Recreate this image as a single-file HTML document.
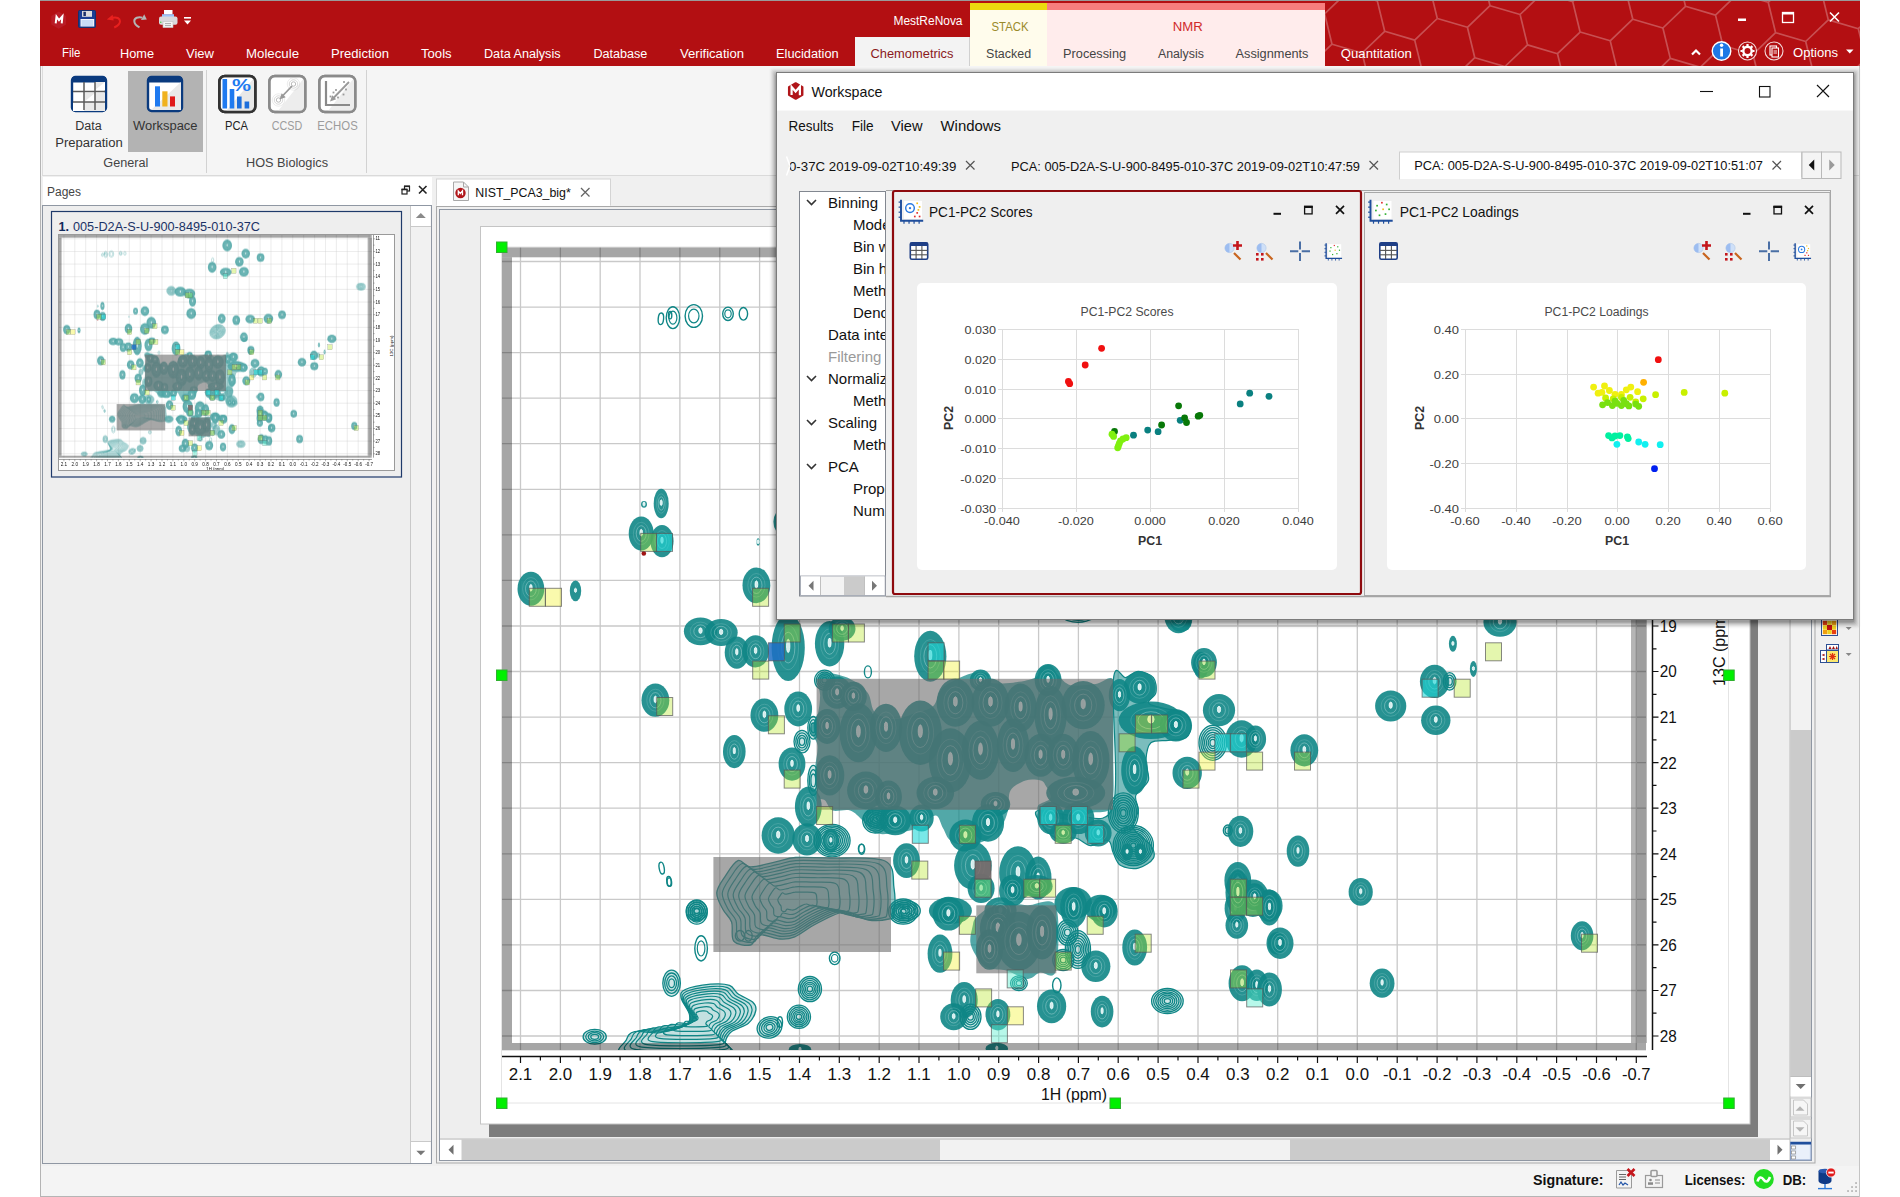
<!DOCTYPE html>
<html lang="en"><head><meta charset="utf-8"><title>MestReNova - Chemometrics Workspace</title>
<style>
html,body{margin:0;padding:0;background:#fff;width:1900px;height:1197px;overflow:hidden}
svg{display:block;font-family:"Liberation Sans","DejaVu Sans",sans-serif}
</style></head><body>
<svg width="1900" height="1197" viewBox="0 0 1900 1197">
<defs><clipPath id="plotclip"><rect x="502" y="247" width="1144" height="803"/></clipPath>
<g id="plotA">
<rect x="502" y="247" width="1144" height="803" fill="#fff" />
<path d="M520.5 247V1050M560.4 247V1050M600.2 247V1050M640.0 247V1050M679.9 247V1050M719.8 247V1050M759.6 247V1050M799.5 247V1050M839.3 247V1050M879.2 247V1050M919.0 247V1050M958.9 247V1050M998.7 247V1050M1038.6 247V1050M1078.4 247V1050M1118.2 247V1050M1158.1 247V1050M1198.0 247V1050M1237.8 247V1050M1277.7 247V1050M1317.5 247V1050M1357.3 247V1050M1397.2 247V1050M1437.1 247V1050M1476.9 247V1050M1516.8 247V1050M1556.6 247V1050M1596.5 247V1050M1636.3 247V1050M502 261.5H1646M502 307.1H1646M502 352.6H1646M502 398.2H1646M502 443.7H1646M502 489.3H1646M502 534.9H1646M502 580.4H1646M502 626.0H1646M502 671.5H1646M502 717.1H1646M502 762.7H1646M502 808.2H1646M502 853.8H1646M502 899.3H1646M502 944.9H1646M502 990.5H1646M502 1036.0H1646" stroke="#c9c9c9" stroke-width="1.3" fill="none"/>
</g><g id="plotB" clip-path="url(#plotclip)">
<path d="M817.5 680.2C818.4 676.4 819.6 672.8 825.1 672.6C830.5 672.4 843.0 675.6 850.1 678.9C857.2 682.2 863.5 687.0 867.7 692.7C871.8 698.3 870.6 708.3 875.2 712.7C879.8 717.1 889.0 718.8 895.2 719.0C901.5 719.2 906.5 716.1 912.8 714.0C919.0 711.9 928.0 710.6 932.8 706.5C937.6 702.3 937.0 693.7 941.6 688.9C946.2 684.1 954.8 680.4 960.4 677.6C966.0 674.9 970.8 673.3 975.4 672.6C980.0 672.0 985.5 672.2 988.0 673.9C990.5 675.6 986.3 681.2 990.5 682.7C994.7 684.1 1005.5 683.5 1013.0 682.7C1020.6 681.8 1031.0 680.2 1035.6 677.6C1040.2 675.1 1038.1 669.7 1040.6 667.6C1043.1 665.5 1047.7 663.9 1050.6 665.1C1053.6 666.4 1054.8 671.8 1058.1 675.1C1061.5 678.5 1064.4 683.7 1070.7 685.2C1076.9 686.6 1088.6 684.7 1095.7 683.9C1102.8 683.1 1110.4 674.1 1113.3 680.2C1116.2 686.2 1113.3 706.9 1113.3 720.3C1113.3 733.6 1113.3 747.8 1113.3 760.4C1113.3 772.9 1114.1 787.1 1113.3 795.4C1112.4 803.8 1112.0 807.6 1108.3 810.5C1104.5 813.4 1096.2 811.3 1090.7 813.0C1085.3 814.7 1081.5 819.7 1075.7 820.5C1069.8 821.3 1061.5 818.8 1055.6 818.0C1049.8 817.2 1043.5 817.6 1040.6 815.5C1037.7 813.4 1036.4 808.4 1038.1 805.5C1039.8 802.5 1049.4 801.3 1050.6 797.9C1051.9 794.6 1047.3 788.3 1045.6 785.4C1043.9 782.5 1043.9 781.2 1040.6 780.4C1037.3 779.6 1030.6 778.7 1025.6 780.4C1020.6 782.1 1013.5 785.4 1010.5 790.4C1007.6 795.4 1009.7 804.2 1008.0 810.5C1006.3 816.7 1004.3 823.0 1000.5 828.0C996.7 833.0 991.3 837.6 985.5 840.6C979.6 843.5 971.3 845.6 965.4 845.6C959.6 845.6 954.1 843.5 950.4 840.6C946.6 837.6 945.4 832.2 942.9 828.0C940.4 823.8 939.5 815.5 935.3 815.5C931.2 815.5 924.5 825.1 917.8 828.0C911.1 830.9 902.3 832.2 895.2 833.0C888.1 833.9 880.6 835.1 875.2 833.0C869.8 830.9 866.8 824.3 862.7 820.5C858.5 816.7 855.1 812.1 850.1 810.5C845.1 808.8 836.8 812.1 832.6 810.5C828.4 808.8 827.6 803.0 825.1 800.5C822.6 797.9 819.2 800.5 817.5 795.4C815.9 790.4 815.0 778.7 815.0 770.4C815.0 762.0 818.4 752.0 817.5 745.3C816.7 738.6 810.0 735.3 810.0 730.3C810.0 725.3 815.9 721.1 817.5 715.2C819.2 709.4 820.1 701.0 820.1 695.2C820.1 689.3 816.7 683.9 817.5 680.2z" fill="#0F8686" fill-opacity="0.72"/>
<path d="M1113.3 680.2C1115.4 658.8 1121.6 679.1 1125.8 677.6C1130.0 676.2 1133.8 671.4 1138.3 671.4C1142.9 671.4 1150.5 674.1 1153.4 677.6C1156.3 681.2 1156.7 688.5 1155.9 692.7C1155.1 696.9 1147.5 700.2 1148.4 702.7C1149.2 705.2 1155.1 706.0 1160.9 707.7C1166.8 709.4 1178.4 709.8 1183.5 712.7C1188.5 715.7 1190.6 721.1 1191.0 725.3C1191.4 729.4 1189.7 735.3 1186.0 737.8C1182.2 740.3 1174.3 739.5 1168.4 740.3C1162.6 741.1 1154.6 739.5 1150.9 742.8C1147.1 746.1 1146.3 754.1 1145.9 760.4C1145.4 766.6 1150.0 774.6 1148.4 780.4C1146.7 786.2 1137.5 790.4 1135.8 795.4C1134.2 800.5 1138.8 805.0 1138.3 810.5C1137.9 815.9 1131.2 822.2 1133.3 828.0C1135.4 833.9 1147.5 840.6 1150.9 845.6C1154.2 850.6 1155.5 854.3 1153.4 858.1C1151.3 861.9 1143.8 866.9 1138.3 868.1C1132.9 869.4 1125.0 868.1 1120.8 865.6C1116.6 863.1 1115.4 857.3 1113.3 853.1C1111.2 848.9 1112.0 841.8 1108.3 840.6C1104.5 839.3 1096.2 846.0 1090.7 845.6C1085.3 845.1 1081.5 839.3 1075.7 838.0C1069.8 836.8 1061.5 840.6 1055.6 838.0C1049.8 835.5 1043.5 827.6 1040.6 823.0C1037.7 818.4 1032.2 811.7 1038.1 810.5C1043.9 809.2 1063.2 816.3 1075.7 815.5C1088.2 814.7 1107.0 828.0 1113.3 805.5C1119.5 782.9 1111.2 701.5 1113.3 680.2z" fill="#0F8686" fill-opacity="0.55" stroke="#0F8686" stroke-width="1.2"/>
<path d="M716.8 892.6C717.2 887.0 722.1 880.9 725.6 875.6C729.1 870.3 733.8 862.1 738.0 860.6C742.2 859.1 744.3 866.7 750.6 866.9C756.9 867.1 768.2 863.5 775.7 861.9C783.2 860.3 786.7 858.1 795.7 857.5C804.8 856.9 815.1 857.4 830.0 858.0C844.9 858.6 874.3 856.0 885.0 861.0C895.7 866.0 892.5 879.2 894.0 888.0C895.5 896.8 894.8 908.8 894.0 914.0C893.2 919.2 893.3 918.0 889.0 919.0C884.7 920.0 875.7 921.2 868.4 920.0C861.1 918.8 853.8 910.9 845.0 911.6C836.2 912.3 824.2 919.8 815.8 924.0C807.4 928.2 800.7 934.3 794.7 936.8C788.7 939.3 786.0 939.4 780.0 939.0C774.0 938.6 763.9 933.7 759.0 934.7C754.1 935.7 754.7 944.0 750.5 945.0C746.3 946.0 736.9 944.8 733.7 941.0C730.6 937.2 733.4 927.2 731.6 922.0C729.8 916.8 725.5 914.4 723.0 909.5C720.5 904.6 716.4 898.2 716.8 892.6z" fill="#0F8686" fill-opacity="0.45" stroke="#0F8686" stroke-width="1.3"/>
<path d="M722.3 893.2C722.7 888.0 727.2 882.4 730.5 877.4C733.7 872.5 738.1 864.8 742.0 863.5C745.9 862.1 747.9 869.1 753.7 869.3C759.6 869.5 770.1 866.2 777.1 864.7C784.0 863.2 787.2 861.2 795.7 860.6C804.1 860.0 813.7 860.5 827.6 861.1C841.4 861.6 868.8 859.2 878.7 863.9C888.6 868.5 885.7 880.8 887.1 889.0C888.5 897.2 887.8 908.3 887.1 913.1C886.3 918.0 886.4 916.9 882.4 917.8C878.5 918.7 870.1 919.9 863.3 918.7C856.4 917.6 849.7 910.3 841.5 910.9C833.4 911.5 822.1 918.5 814.3 922.4C806.6 926.4 800.3 932.0 794.7 934.4C789.2 936.7 786.6 936.7 781.1 936.4C775.5 936.1 766.1 931.5 761.5 932.4C757.0 933.3 757.5 941.0 753.6 942.0C749.7 943.0 740.9 941.8 738.0 938.3C735.1 934.7 737.7 925.5 736.0 920.6C734.4 915.7 730.3 913.5 728.0 909.0C725.7 904.4 721.9 898.5 722.3 893.2z" fill="none" stroke="#0F8686" stroke-width="1.2"/>
<path d="M727.8 893.9C728.1 889.0 732.3 883.9 735.3 879.3C738.4 874.7 742.4 867.6 746.0 866.4C749.6 865.1 751.4 871.6 756.8 871.8C762.2 872.0 771.9 868.8 778.4 867.5C784.9 866.1 787.8 864.3 795.6 863.7C803.4 863.1 812.3 863.6 825.1 864.1C837.9 864.6 863.2 862.4 872.4 866.7C881.6 871.0 878.9 882.3 880.1 889.9C881.4 897.5 880.9 907.9 880.1 912.3C879.4 916.7 879.5 915.7 875.8 916.6C872.2 917.5 864.4 918.5 858.1 917.5C851.8 916.4 845.5 909.7 838.0 910.2C830.5 910.8 820.1 917.3 812.9 920.9C805.7 924.5 799.9 929.8 794.7 931.9C789.6 934.1 787.2 934.1 782.1 933.8C777.0 933.5 768.3 929.2 764.0 930.1C759.8 931.0 760.4 938.1 756.7 939.0C753.1 939.9 745.0 938.8 742.3 935.5C739.6 932.2 742.0 923.7 740.5 919.2C738.9 914.7 735.2 912.6 733.1 908.4C731.0 904.2 727.4 898.8 727.8 893.9z" fill="none" stroke="#0F8686" stroke-width="1.2"/>
<path d="M733.2 894.5C733.6 890.1 737.4 885.3 740.2 881.1C743.0 876.9 746.7 870.4 750.0 869.3C753.3 868.1 755.0 874.1 759.9 874.2C764.9 874.4 773.8 871.5 779.8 870.3C785.7 869.1 788.4 867.3 795.6 866.8C802.7 866.3 810.9 866.7 822.7 867.2C834.4 867.7 857.7 865.6 866.1 869.6C874.5 873.5 872.0 883.9 873.2 890.9C874.4 897.9 873.9 907.4 873.2 911.4C872.6 915.5 872.6 914.6 869.3 915.4C865.9 916.2 858.8 917.2 853.0 916.2C847.2 915.2 841.4 909.0 834.5 909.6C827.6 910.1 818.1 916.0 811.4 919.3C804.8 922.7 799.5 927.5 794.8 929.5C790.1 931.4 787.9 931.5 783.2 931.2C778.5 930.9 770.5 927.0 766.6 927.8C762.7 928.6 763.2 935.1 759.9 935.9C756.5 936.8 749.1 935.8 746.6 932.8C744.1 929.7 746.3 921.9 744.9 917.8C743.5 913.6 740.1 911.8 738.1 907.9C736.2 904.0 732.9 899.0 733.2 894.5z" fill="none" stroke="#0F8686" stroke-width="1.2"/>
<path d="M738.7 895.2C739.0 891.1 742.5 886.8 745.0 882.9C747.6 879.1 751.0 873.2 754.0 872.1C757.0 871.1 758.5 876.5 763.0 876.7C767.6 876.8 775.7 874.2 781.1 873.1C786.5 872.0 789.0 870.4 795.5 869.9C802.0 869.4 809.5 869.9 820.2 870.3C830.9 870.7 852.1 868.8 859.8 872.4C867.5 876.0 865.2 885.5 866.3 891.9C867.4 898.2 866.9 906.9 866.3 910.6C865.7 914.3 865.8 913.5 862.7 914.2C859.6 914.9 853.1 915.8 847.9 914.9C842.6 914.0 837.3 908.4 831.0 908.9C824.7 909.3 816.0 914.8 810.0 917.8C804.0 920.8 799.1 925.2 794.8 927.0C790.5 928.8 788.5 928.8 784.2 928.6C779.9 928.3 772.6 924.8 769.1 925.5C765.6 926.2 766.0 932.2 763.0 932.9C759.9 933.7 753.1 932.8 750.9 930.0C748.6 927.3 750.7 920.1 749.4 916.4C748.1 912.6 745.0 910.9 743.2 907.4C741.4 903.8 738.4 899.3 738.7 895.2z" fill="none" stroke="#0F8686" stroke-width="1.2"/>
<path d="M745.0 895.9C745.2 892.3 748.3 888.5 750.6 885.0C752.9 881.6 755.9 876.4 758.5 875.4C761.2 874.5 762.6 879.3 766.6 879.5C770.6 879.6 777.9 877.3 782.7 876.3C787.5 875.3 789.7 873.9 795.5 873.5C801.3 873.0 807.9 873.4 817.4 873.8C826.9 874.2 845.8 872.5 852.6 875.7C859.4 878.9 857.4 887.3 858.4 893.0C859.3 898.6 858.9 906.3 858.4 909.6C857.8 912.9 857.9 912.2 855.2 912.8C852.4 913.5 846.7 914.3 842.0 913.5C837.3 912.7 832.6 907.7 827.0 908.1C821.4 908.5 813.7 913.3 808.3 916.0C803.0 918.7 798.6 922.6 794.8 924.2C791.0 925.8 789.2 925.8 785.4 925.6C781.6 925.4 775.1 922.2 772.0 922.9C768.8 923.5 769.2 928.8 766.5 929.5C763.8 930.1 757.8 929.4 755.8 926.9C753.8 924.5 755.6 918.1 754.4 914.7C753.3 911.4 750.5 909.9 748.9 906.7C747.4 903.6 744.7 899.5 745.0 895.9z" fill="none" stroke="#0F8686" stroke-width="1.2"/>
<path d="M752.0 896.8C752.3 893.7 754.9 890.3 756.9 887.4C758.8 884.5 761.4 880.0 763.7 879.2C766.0 878.4 767.1 882.5 770.6 882.6C774.1 882.7 780.3 880.7 784.4 879.9C788.5 879.0 790.4 877.8 795.4 877.5C800.4 877.1 806.1 877.4 814.3 877.7C822.5 878.1 838.7 876.6 844.5 879.4C850.4 882.1 848.6 889.4 849.5 894.2C850.3 899.1 849.9 905.7 849.5 908.5C849.0 911.4 849.1 910.7 846.7 911.3C844.4 911.8 839.4 912.5 835.4 911.8C831.4 911.2 827.3 906.8 822.5 907.2C817.7 907.6 811.1 911.7 806.5 914.0C801.9 916.3 798.1 919.7 794.9 921.1C791.6 922.4 790.0 922.5 786.8 922.3C783.5 922.1 777.9 919.4 775.2 919.9C772.5 920.5 772.9 925.0 770.5 925.6C768.2 926.2 763.0 925.5 761.3 923.4C759.6 921.3 761.1 915.8 760.2 912.9C759.2 910.0 756.8 908.7 755.4 906.1C754.1 903.4 751.8 899.9 752.0 896.8z" fill="none" stroke="#0F8686" stroke-width="1.2"/>
<path d="M759.8 897.7C760.0 895.1 762.2 892.4 763.8 890.0C765.4 887.6 767.5 883.9 769.4 883.3C771.3 882.6 772.2 886.0 775.0 886.1C777.9 886.2 783.0 884.6 786.3 883.9C789.7 883.2 791.3 882.2 795.3 881.9C799.4 881.6 804.1 881.9 810.8 882.1C817.5 882.4 830.7 881.2 835.5 883.5C840.3 885.7 838.9 891.6 839.6 895.6C840.3 899.6 840.0 905.0 839.6 907.3C839.2 909.6 839.2 909.1 837.3 909.6C835.4 910.0 831.4 910.6 828.1 910.0C824.8 909.5 821.5 905.9 817.5 906.2C813.6 906.5 808.2 909.9 804.4 911.8C800.6 913.7 797.6 916.4 794.9 917.6C792.2 918.7 791.0 918.7 788.3 918.6C785.6 918.4 781.0 916.2 778.8 916.6C776.6 917.1 776.9 920.8 775.0 921.3C773.1 921.7 768.9 921.2 767.4 919.5C766.0 917.7 767.3 913.3 766.5 910.9C765.7 908.6 763.7 907.5 762.6 905.3C761.5 903.1 759.6 900.2 759.8 897.7z" fill="none" stroke="#0F8686" stroke-width="1.2"/>
<path d="M768.4 898.7C768.6 896.8 770.2 894.7 771.4 892.9C772.6 891.1 774.2 888.3 775.7 887.8C777.1 887.3 777.8 889.9 779.9 890.0C782.1 890.0 785.9 888.8 788.5 888.3C791.0 887.7 792.2 887.0 795.3 886.8C798.3 886.5 801.9 886.7 806.9 886.9C812.0 887.1 822.0 886.3 825.6 888.0C829.3 889.7 828.2 894.1 828.7 897.1C829.2 900.1 829.0 904.2 828.7 906.0C828.4 907.7 828.4 907.3 827.0 907.7C825.5 908.0 822.5 908.4 820.0 908.0C817.5 907.6 815.0 904.9 812.0 905.2C809.1 905.4 805.0 907.9 802.1 909.4C799.3 910.8 797.0 912.9 794.9 913.7C792.9 914.6 792.0 914.6 789.9 914.5C787.9 914.4 784.5 912.7 782.8 913.0C781.1 913.4 781.3 916.2 779.9 916.5C778.5 916.9 775.3 916.5 774.2 915.2C773.1 913.9 774.1 910.5 773.5 908.7C772.9 906.9 771.4 906.1 770.6 904.4C769.7 902.8 768.3 900.6 768.4 898.7z" fill="none" stroke="#0F8686" stroke-width="1.2"/>
<path d="M777.8 899.8C777.9 898.6 779.0 897.2 779.8 896.1C780.6 894.9 781.6 893.1 782.5 892.8C783.4 892.5 783.9 894.1 785.3 894.2C786.7 894.2 789.1 893.4 790.8 893.1C792.4 892.7 793.2 892.2 795.2 892.1C797.2 891.9 799.5 892.1 802.7 892.2C806.0 892.3 812.5 891.8 814.8 892.9C817.2 894.0 816.5 896.9 816.8 898.8C817.2 900.7 817.0 903.4 816.8 904.5C816.6 905.7 816.7 905.4 815.7 905.6C814.8 905.8 812.8 906.1 811.2 905.8C809.6 905.6 808.0 903.8 806.0 904.0C804.1 904.1 801.5 905.8 799.6 906.7C797.8 907.6 796.3 909.0 795.0 909.5C793.7 910.1 793.0 910.1 791.7 910.0C790.4 909.9 788.2 908.9 787.1 909.1C786.0 909.3 786.2 911.1 785.3 911.3C784.3 911.6 782.2 911.3 781.6 910.5C780.9 909.6 781.5 907.4 781.1 906.3C780.7 905.1 779.7 904.6 779.2 903.5C778.7 902.4 777.7 901.1 777.8 899.8z" fill="none" stroke="#0F8686" stroke-width="1.2"/>
<path d="M626.3 1040.0C627.7 1036.1 629.1 1032.8 634.7 1031.6C640.4 1030.4 651.6 1033.7 660.0 1032.6C668.4 1031.6 680.4 1028.2 685.3 1025.3C690.2 1022.3 690.2 1019.3 689.5 1014.7C688.8 1010.2 681.8 1002.1 681.1 997.9C680.4 993.7 680.4 991.8 685.3 989.5C690.2 987.2 703.2 984.9 710.5 984.2C717.9 983.5 724.9 983.7 729.5 985.3C734.0 986.8 734.0 990.9 737.9 993.7C741.8 996.5 749.6 999.3 752.6 1002.1C755.6 1004.9 756.5 1007.0 755.8 1010.5C755.1 1014.0 752.5 1019.6 748.4 1023.2C744.4 1026.7 735.4 1028.4 731.6 1031.6C727.7 1034.7 726.1 1038.2 725.3 1042.1C724.4 1046.0 742.8 1052.6 726.3 1054.7C709.8 1056.8 643.0 1057.2 626.3 1054.7C609.6 1052.3 624.9 1043.9 626.3 1040.0z" fill="#0F8686" fill-opacity="0.25" stroke="#0F8686" stroke-width="1.3"/>
<path d="M631.5 1038.5C632.8 1034.9 634.1 1031.8 639.3 1030.7C644.6 1029.5 655.0 1032.6 662.8 1031.6C670.7 1030.7 681.8 1027.6 686.3 1024.8C690.9 1022.0 690.9 1019.2 690.2 1015.0C689.6 1010.8 683.1 1003.2 682.4 999.3C681.8 995.4 681.8 993.6 686.3 991.5C690.9 989.4 703.0 987.3 709.8 986.6C716.7 986.0 723.2 986.1 727.4 987.6C731.7 989.1 731.7 992.8 735.3 995.4C738.9 998.0 746.2 1000.6 749.0 1003.2C751.7 1005.9 752.6 1007.8 751.9 1011.1C751.3 1014.3 748.8 1019.6 745.1 1022.8C741.3 1026.1 733.0 1027.7 729.4 1030.7C725.8 1033.6 724.3 1036.9 723.5 1040.4C722.7 1044.0 739.8 1050.2 724.5 1052.2C709.2 1054.2 647.0 1054.5 631.5 1052.2C616.0 1049.9 630.2 1042.1 631.5 1038.5z" fill="none" stroke="#0F8686" stroke-width="1.2"/>
<path d="M636.7 1037.0C637.9 1033.7 639.1 1030.8 643.9 1029.7C648.8 1028.7 658.4 1031.6 665.7 1030.6C672.9 1029.7 683.2 1026.9 687.4 1024.3C691.6 1021.7 691.6 1019.2 691.0 1015.3C690.4 1011.3 684.4 1004.4 683.8 1000.8C683.2 997.2 683.2 995.5 687.4 993.5C691.6 991.6 702.8 989.6 709.1 989.0C715.4 988.4 721.5 988.6 725.4 989.9C729.3 991.3 729.3 994.7 732.6 997.2C736.0 999.6 742.8 1002.0 745.3 1004.4C747.9 1006.8 748.6 1008.6 748.0 1011.6C747.4 1014.7 745.2 1019.5 741.7 1022.5C738.2 1025.5 730.5 1027.0 727.2 1029.7C723.9 1032.5 722.5 1035.5 721.8 1038.8C721.0 1042.1 736.9 1047.8 722.7 1049.7C708.5 1051.5 651.0 1051.8 636.7 1049.7C622.4 1047.5 635.5 1040.3 636.7 1037.0z" fill="none" stroke="#0F8686" stroke-width="1.2"/>
<path d="M641.9 1035.5C643.0 1032.4 644.1 1029.8 648.5 1028.8C653.0 1027.9 661.8 1030.5 668.5 1029.7C675.1 1028.8 684.6 1026.2 688.4 1023.8C692.3 1021.5 692.3 1019.1 691.8 1015.5C691.2 1011.9 685.7 1005.5 685.1 1002.2C684.6 998.9 684.6 997.4 688.4 995.6C692.3 993.8 702.6 992.0 708.4 991.4C714.2 990.8 719.8 991.0 723.4 992.2C727.0 993.5 727.0 996.7 730.0 998.9C733.1 1001.1 739.3 1003.3 741.7 1005.5C744.0 1007.8 744.7 1009.4 744.2 1012.2C743.6 1015.0 741.5 1019.4 738.3 1022.2C735.1 1024.9 728.1 1026.3 725.0 1028.8C722.0 1031.3 720.7 1034.1 720.0 1037.1C719.3 1040.2 733.9 1045.5 720.9 1047.1C707.8 1048.8 655.0 1049.1 641.9 1047.1C628.7 1045.2 640.8 1038.5 641.9 1035.5z" fill="none" stroke="#0F8686" stroke-width="1.2"/>
<path d="M647.1 1034.0C648.1 1031.2 649.1 1028.8 653.1 1027.9C657.2 1027.0 665.2 1029.4 671.3 1028.7C677.4 1027.9 686.0 1025.5 689.5 1023.4C693.0 1021.2 693.0 1019.1 692.5 1015.8C692.0 1012.5 687.0 1006.7 686.5 1003.7C686.0 1000.6 686.0 999.2 689.5 997.6C693.0 995.9 702.4 994.3 707.7 993.8C713.0 993.3 718.0 993.4 721.3 994.6C724.6 995.7 724.6 998.6 727.4 1000.6C730.2 1002.6 735.9 1004.7 738.0 1006.7C740.1 1008.7 740.8 1010.2 740.3 1012.7C739.8 1015.3 737.9 1019.3 735.0 1021.8C732.1 1024.4 725.6 1025.6 722.8 1027.9C720.1 1030.2 718.9 1032.7 718.3 1035.5C717.7 1038.3 730.9 1043.1 719.1 1044.6C707.2 1046.1 659.1 1046.3 647.1 1044.6C635.1 1042.8 646.0 1036.7 647.1 1034.0z" fill="none" stroke="#0F8686" stroke-width="1.2"/>
<path d="M653.0 1032.2C653.9 1029.8 654.8 1027.6 658.4 1026.9C662.0 1026.1 669.1 1028.2 674.5 1027.5C679.9 1026.9 687.6 1024.7 690.7 1022.8C693.8 1020.9 693.8 1019.0 693.4 1016.1C692.9 1013.2 688.5 1008.0 688.0 1005.3C687.6 1002.6 687.6 1001.4 690.7 999.9C693.8 998.4 702.2 997.0 706.9 996.5C711.6 996.1 716.1 996.2 719.0 997.2C721.9 998.2 721.9 1000.8 724.4 1002.6C726.9 1004.4 731.9 1006.2 733.8 1008.0C735.7 1009.8 736.3 1011.1 735.8 1013.4C735.4 1015.6 733.7 1019.2 731.1 1021.5C728.5 1023.7 722.8 1024.8 720.3 1026.9C717.9 1028.9 716.9 1031.1 716.3 1033.6C715.7 1036.1 727.5 1040.3 717.0 1041.7C706.4 1043.0 663.6 1043.2 653.0 1041.7C642.3 1040.1 652.1 1034.7 653.0 1032.2z" fill="none" stroke="#0F8686" stroke-width="1.2"/>
<path d="M659.6 1030.3C660.4 1028.2 661.2 1026.3 664.3 1025.7C667.4 1025.0 673.5 1026.8 678.2 1026.3C682.8 1025.7 689.4 1023.8 692.1 1022.2C694.8 1020.6 694.8 1018.9 694.4 1016.4C694.0 1013.9 690.1 1009.5 689.7 1007.1C689.4 1004.8 689.4 1003.8 692.1 1002.5C694.8 1001.3 701.9 1000.0 706.0 999.6C710.0 999.2 713.9 999.3 716.4 1000.2C718.9 1001.1 718.9 1003.3 721.0 1004.8C723.1 1006.4 727.5 1007.9 729.1 1009.5C730.8 1011.0 731.2 1012.2 730.9 1014.1C730.5 1016.0 729.0 1019.1 726.8 1021.0C724.6 1023.0 719.7 1023.9 717.5 1025.7C715.4 1027.4 714.5 1029.3 714.1 1031.5C713.6 1033.6 723.7 1037.3 714.6 1038.4C705.6 1039.6 668.8 1039.8 659.6 1038.4C650.5 1037.1 658.9 1032.4 659.6 1030.3z" fill="none" stroke="#0F8686" stroke-width="1.2"/>
<path d="M667.0 1028.1C667.7 1026.4 668.3 1024.9 670.8 1024.4C673.4 1023.8 678.4 1025.3 682.2 1024.8C686.0 1024.4 691.4 1022.9 693.6 1021.5C695.8 1020.2 695.8 1018.8 695.5 1016.8C695.2 1014.7 692.0 1011.1 691.7 1009.2C691.4 1007.3 691.4 1006.4 693.6 1005.4C695.8 1004.4 701.6 1003.4 704.9 1003.0C708.3 1002.7 711.4 1002.8 713.5 1003.5C715.5 1004.2 715.5 1006.0 717.3 1007.3C719.0 1008.6 722.5 1009.8 723.9 1011.1C725.2 1012.4 725.6 1013.3 725.3 1014.9C725.0 1016.5 723.8 1019.0 722.0 1020.6C720.2 1022.1 716.2 1022.9 714.4 1024.4C712.7 1025.8 712.0 1027.4 711.6 1029.1C711.2 1030.8 719.5 1033.8 712.0 1034.8C704.6 1035.7 674.5 1035.9 667.0 1034.8C659.5 1033.7 666.4 1029.9 667.0 1028.1z" fill="none" stroke="#0F8686" stroke-width="1.2"/>
<path d="M675.2 1025.8C675.7 1024.5 676.1 1023.3 678.1 1022.9C680.0 1022.5 683.8 1023.6 686.6 1023.3C689.5 1022.9 693.6 1021.8 695.2 1020.8C696.9 1019.8 696.9 1018.7 696.7 1017.2C696.4 1015.6 694.0 1012.9 693.8 1011.5C693.6 1010.0 693.6 1009.4 695.2 1008.6C696.9 1007.8 701.3 1007.0 703.8 1006.8C706.3 1006.6 708.7 1006.6 710.3 1007.2C711.8 1007.7 711.8 1009.1 713.1 1010.0C714.4 1011.0 717.1 1011.9 718.1 1012.9C719.2 1013.8 719.5 1014.6 719.2 1015.8C719.0 1017.0 718.1 1018.9 716.7 1020.1C715.3 1021.2 712.3 1021.8 711.0 1022.9C709.7 1024.0 709.1 1025.2 708.8 1026.5C708.5 1027.8 714.8 1030.1 709.2 1030.8C703.6 1031.5 680.9 1031.6 675.2 1030.8C669.5 1030.0 674.7 1027.1 675.2 1025.8z" fill="none" stroke="#0F8686" stroke-width="1.2"/>
<path d="M684.1 1023.2C684.4 1022.3 684.7 1021.6 685.9 1021.3C687.2 1021.1 689.6 1021.8 691.5 1021.6C693.3 1021.3 696.0 1020.6 697.0 1020.0C698.1 1019.3 698.1 1018.6 698.0 1017.6C697.8 1016.6 696.3 1014.9 696.1 1013.9C696.0 1013.0 696.0 1012.6 697.0 1012.1C698.1 1011.6 701.0 1011.1 702.6 1010.9C704.2 1010.8 705.8 1010.8 706.8 1011.2C707.8 1011.5 707.8 1012.4 708.6 1013.0C709.5 1013.6 711.2 1014.2 711.9 1014.9C712.5 1015.5 712.7 1015.9 712.6 1016.7C712.4 1017.5 711.8 1018.7 710.9 1019.5C710.1 1020.3 708.1 1020.6 707.2 1021.3C706.4 1022.0 706.0 1022.8 705.8 1023.7C705.7 1024.5 709.7 1026.0 706.1 1026.4C702.5 1026.9 687.7 1027.0 684.1 1026.4C680.4 1025.9 683.8 1024.0 684.1 1023.2z" fill="none" stroke="#0F8686" stroke-width="1.2"/>
<path d="M975.8 917.9C978.6 914.7 984.4 909.8 989.5 907.4C994.6 904.9 1000.0 903.5 1006.3 903.2C1012.6 902.8 1019.1 904.7 1027.4 905.3C1035.6 905.8 1051.1 895.4 1055.8 906.3C1060.5 917.2 1058.4 959.5 1055.8 970.5C1053.2 981.6 1044.7 971.2 1040.0 972.6C1035.3 974.0 1033.0 979.3 1027.4 978.9C1021.8 978.6 1012.6 972.3 1006.3 970.5C1000.0 968.8 994.0 970.2 989.5 968.4C984.9 966.7 982.1 964.2 978.9 960.0C975.8 955.8 971.6 948.8 970.5 943.2C969.5 937.5 971.8 930.5 972.6 926.3C973.5 922.1 973.0 921.1 975.8 917.9z" fill="#0F8686" fill-opacity="0.72"/>
<g><ellipse cx="700.5" cy="631.3" rx="16.6" ry="13.9" fill="#0F8686" fill-opacity="0.9"/>
<ellipse cx="700.5" cy="631.3" rx="10.3" ry="9.2" fill="none" stroke="#8fcaca" stroke-width="0.7" stroke-opacity="0.4"/>
<ellipse cx="700.5" cy="631.3" rx="6.7" ry="6.4" fill="none" stroke="#b8dede" stroke-width="0.8" stroke-opacity="0.55"/>
<ellipse cx="700.5" cy="630.6" rx="1.7" ry="2.8" fill="#d4ecec" stroke="#f4ffff" stroke-width="0.8"/></g>
<g><ellipse cx="721.1" cy="632.5" rx="16.6" ry="13.4" fill="#0F8686" fill-opacity="0.9"/>
<ellipse cx="721.1" cy="632.5" rx="10.3" ry="8.8" fill="none" stroke="#8fcaca" stroke-width="0.7" stroke-opacity="0.4"/>
<ellipse cx="721.1" cy="632.5" rx="6.7" ry="6.2" fill="none" stroke="#b8dede" stroke-width="0.8" stroke-opacity="0.55"/>
<ellipse cx="721.1" cy="631.9" rx="1.7" ry="2.7" fill="#d4ecec" stroke="#f4ffff" stroke-width="0.8"/></g>
<g><ellipse cx="736.8" cy="652.6" rx="12.1" ry="16.1" fill="#0F8686" fill-opacity="0.9"/>
<ellipse cx="736.8" cy="652.6" rx="7.5" ry="10.6" fill="none" stroke="#8fcaca" stroke-width="0.7" stroke-opacity="0.4"/>
<ellipse cx="736.8" cy="652.6" rx="4.8" ry="7.4" fill="none" stroke="#b8dede" stroke-width="0.8" stroke-opacity="0.55"/>
<ellipse cx="736.8" cy="651.8" rx="1.2" ry="3.2" fill="#d4ecec" stroke="#f4ffff" stroke-width="0.8"/></g>
<g><ellipse cx="755.6" cy="651.3" rx="13.4" ry="16.1" fill="#0F8686" fill-opacity="0.9"/>
<ellipse cx="755.6" cy="651.3" rx="8.3" ry="10.6" fill="none" stroke="#8fcaca" stroke-width="0.7" stroke-opacity="0.4"/>
<ellipse cx="755.6" cy="651.3" rx="5.4" ry="7.4" fill="none" stroke="#b8dede" stroke-width="0.8" stroke-opacity="0.55"/>
<ellipse cx="755.6" cy="650.5" rx="1.3" ry="3.2" fill="#d4ecec" stroke="#f4ffff" stroke-width="0.8"/></g>
<g><ellipse cx="788.2" cy="647.6" rx="16.6" ry="33.5" fill="#0F8686" fill-opacity="0.9"/>
<ellipse cx="788.2" cy="647.6" rx="10.3" ry="22.1" fill="none" stroke="#8fcaca" stroke-width="0.7" stroke-opacity="0.4"/>
<ellipse cx="788.2" cy="647.6" rx="6.7" ry="15.4" fill="none" stroke="#b8dede" stroke-width="0.8" stroke-opacity="0.55"/>
<ellipse cx="788.2" cy="645.9" rx="1.7" ry="6.7" fill="#d4ecec" stroke="#f4ffff" stroke-width="0.8"/></g>
<g><ellipse cx="829.6" cy="643.8" rx="14.7" ry="22.8" fill="#0F8686" fill-opacity="0.9"/>
<ellipse cx="829.6" cy="643.8" rx="9.1" ry="15.0" fill="none" stroke="#8fcaca" stroke-width="0.7" stroke-opacity="0.4"/>
<ellipse cx="829.6" cy="643.8" rx="5.9" ry="10.5" fill="none" stroke="#b8dede" stroke-width="0.8" stroke-opacity="0.55"/>
<ellipse cx="829.6" cy="642.7" rx="1.5" ry="4.6" fill="#d4ecec" stroke="#f4ffff" stroke-width="0.8"/></g>
<g><ellipse cx="842.1" cy="628.8" rx="13.4" ry="12.1" fill="#0F8686" fill-opacity="0.9"/>
<ellipse cx="842.1" cy="628.8" rx="8.3" ry="8.0" fill="none" stroke="#8fcaca" stroke-width="0.7" stroke-opacity="0.4"/>
<ellipse cx="842.1" cy="628.8" rx="5.4" ry="5.6" fill="none" stroke="#b8dede" stroke-width="0.8" stroke-opacity="0.55"/>
<ellipse cx="842.1" cy="628.2" rx="1.3" ry="2.4" fill="#d4ecec" stroke="#f4ffff" stroke-width="0.8"/></g>
<g><ellipse cx="867.9" cy="671.9" rx="3.5" ry="6.0" fill="none" stroke="#0F8686" stroke-width="1.4"/>
</g>
<g><ellipse cx="655.4" cy="700.2" rx="13.9" ry="16.6" fill="#0F8686" fill-opacity="0.9"/>
<ellipse cx="655.4" cy="700.2" rx="8.6" ry="11.0" fill="none" stroke="#8fcaca" stroke-width="0.7" stroke-opacity="0.4"/>
<ellipse cx="655.4" cy="700.2" rx="5.6" ry="7.6" fill="none" stroke="#b8dede" stroke-width="0.8" stroke-opacity="0.55"/>
<ellipse cx="655.4" cy="699.4" rx="1.4" ry="3.3" fill="#d4ecec" stroke="#f4ffff" stroke-width="0.8"/></g>
<g><ellipse cx="764.4" cy="715.2" rx="13.9" ry="16.6" fill="#0F8686" fill-opacity="0.9"/>
<ellipse cx="764.4" cy="715.2" rx="8.6" ry="11.0" fill="none" stroke="#8fcaca" stroke-width="0.7" stroke-opacity="0.4"/>
<ellipse cx="764.4" cy="715.2" rx="5.6" ry="7.6" fill="none" stroke="#b8dede" stroke-width="0.8" stroke-opacity="0.55"/>
<ellipse cx="764.4" cy="714.4" rx="1.4" ry="3.3" fill="#d4ecec" stroke="#f4ffff" stroke-width="0.8"/></g>
<g><ellipse cx="798.2" cy="709.0" rx="13.9" ry="17.4" fill="#0F8686" fill-opacity="0.9"/>
<ellipse cx="798.2" cy="709.0" rx="8.6" ry="11.5" fill="none" stroke="#8fcaca" stroke-width="0.7" stroke-opacity="0.4"/>
<ellipse cx="798.2" cy="709.0" rx="5.6" ry="8.0" fill="none" stroke="#b8dede" stroke-width="0.8" stroke-opacity="0.55"/>
<ellipse cx="798.2" cy="708.1" rx="1.4" ry="3.5" fill="#d4ecec" stroke="#f4ffff" stroke-width="0.8"/></g>
<g><ellipse cx="734.3" cy="751.6" rx="11.3" ry="16.6" fill="#0F8686" fill-opacity="0.9"/>
<ellipse cx="734.3" cy="751.6" rx="7.0" ry="11.0" fill="none" stroke="#8fcaca" stroke-width="0.7" stroke-opacity="0.4"/>
<ellipse cx="734.3" cy="751.6" rx="4.5" ry="7.6" fill="none" stroke="#b8dede" stroke-width="0.8" stroke-opacity="0.55"/>
<ellipse cx="734.3" cy="750.7" rx="1.1" ry="3.3" fill="#d4ecec" stroke="#f4ffff" stroke-width="0.8"/></g>
<g><ellipse cx="792.0" cy="764.1" rx="13.4" ry="16.6" fill="#0F8686" fill-opacity="0.9"/>
<ellipse cx="792.0" cy="764.1" rx="8.3" ry="11.0" fill="none" stroke="#8fcaca" stroke-width="0.7" stroke-opacity="0.4"/>
<ellipse cx="792.0" cy="764.1" rx="5.4" ry="7.6" fill="none" stroke="#b8dede" stroke-width="0.8" stroke-opacity="0.55"/>
<ellipse cx="792.0" cy="763.3" rx="1.3" ry="3.3" fill="#d4ecec" stroke="#f4ffff" stroke-width="0.8"/></g>
<g>
<ellipse cx="802.0" cy="741.6" rx="8.0" ry="11.3" fill="#0F8686" fill-opacity="0.2"/>
<ellipse cx="802.0" cy="741.6" rx="8.0" ry="11.3" fill="none" stroke="#0F8686" stroke-width="1.3"/>
<ellipse cx="802.0" cy="741.6" rx="6.2" ry="8.8" fill="none" stroke="#0F8686" stroke-width="1.3"/>
<ellipse cx="802.0" cy="741.6" rx="4.5" ry="6.3" fill="none" stroke="#0F8686" stroke-width="1.3"/>
<ellipse cx="802.0" cy="741.6" rx="2.7" ry="3.8" fill="none" stroke="#0F8686" stroke-width="1.3"/>
</g>
<g><ellipse cx="808.3" cy="806.7" rx="13.4" ry="20.1" fill="#0F8686" fill-opacity="0.9"/>
<ellipse cx="808.3" cy="806.7" rx="8.3" ry="13.3" fill="none" stroke="#8fcaca" stroke-width="0.7" stroke-opacity="0.4"/>
<ellipse cx="808.3" cy="806.7" rx="5.4" ry="9.3" fill="none" stroke="#b8dede" stroke-width="0.8" stroke-opacity="0.55"/>
<ellipse cx="808.3" cy="805.7" rx="1.3" ry="4.0" fill="#d4ecec" stroke="#f4ffff" stroke-width="0.8"/></g>
<g><ellipse cx="778.2" cy="835.5" rx="16.6" ry="18.2" fill="#0F8686" fill-opacity="0.9"/>
<ellipse cx="778.2" cy="835.5" rx="10.3" ry="12.0" fill="none" stroke="#8fcaca" stroke-width="0.7" stroke-opacity="0.4"/>
<ellipse cx="778.2" cy="835.5" rx="6.7" ry="8.4" fill="none" stroke="#b8dede" stroke-width="0.8" stroke-opacity="0.55"/>
<ellipse cx="778.2" cy="834.6" rx="1.7" ry="3.6" fill="#d4ecec" stroke="#f4ffff" stroke-width="0.8"/></g>
<g><ellipse cx="807.0" cy="839.3" rx="14.7" ry="16.1" fill="#0F8686" fill-opacity="0.9"/>
<ellipse cx="807.0" cy="839.3" rx="9.1" ry="10.6" fill="none" stroke="#8fcaca" stroke-width="0.7" stroke-opacity="0.4"/>
<ellipse cx="807.0" cy="839.3" rx="5.9" ry="7.4" fill="none" stroke="#b8dede" stroke-width="0.8" stroke-opacity="0.55"/>
<ellipse cx="807.0" cy="838.5" rx="1.5" ry="3.2" fill="#d4ecec" stroke="#f4ffff" stroke-width="0.8"/></g>
<g>
<ellipse cx="832.1" cy="840.6" rx="18.0" ry="16.3" fill="#0F8686" fill-opacity="0.2"/>
<ellipse cx="832.1" cy="840.6" rx="18.0" ry="16.3" fill="none" stroke="#0F8686" stroke-width="1.3"/>
<ellipse cx="832.1" cy="840.6" rx="16.1" ry="14.6" fill="none" stroke="#0F8686" stroke-width="1.3"/>
<ellipse cx="832.1" cy="840.6" rx="14.2" ry="12.9" fill="none" stroke="#0F8686" stroke-width="1.3"/>
<ellipse cx="832.1" cy="840.6" rx="12.3" ry="11.1" fill="none" stroke="#0F8686" stroke-width="1.3"/>
<ellipse cx="832.1" cy="840.6" rx="10.4" ry="9.4" fill="none" stroke="#0F8686" stroke-width="1.3"/>
<ellipse cx="832.1" cy="840.6" rx="8.5" ry="7.7" fill="none" stroke="#0F8686" stroke-width="1.3"/>
<ellipse cx="832.1" cy="840.6" rx="6.6" ry="6.0" fill="none" stroke="#0F8686" stroke-width="1.3"/>
<ellipse cx="832.1" cy="840.6" rx="4.7" ry="4.3" fill="none" stroke="#0F8686" stroke-width="1.3"/>
<ellipse cx="832.1" cy="840.6" rx="2.8" ry="2.6" fill="none" stroke="#0F8686" stroke-width="1.3"/>
</g>
<g><ellipse cx="830.8" cy="840.6" rx="8.0" ry="12.1" fill="#0F8686" fill-opacity="0.9"/>
<ellipse cx="830.8" cy="840.6" rx="5.0" ry="8.0" fill="none" stroke="#8fcaca" stroke-width="0.7" stroke-opacity="0.4"/>
<ellipse cx="830.8" cy="840.6" rx="3.2" ry="5.6" fill="none" stroke="#b8dede" stroke-width="0.8" stroke-opacity="0.55"/>
<ellipse cx="830.8" cy="839.9" rx="1.1" ry="2.4" fill="#d4ecec" stroke="#f4ffff" stroke-width="0.8"/></g>
<g><ellipse cx="861.7" cy="849.3" rx="3.0" ry="5.0" fill="none" stroke="#0F8686" stroke-width="1.4"/>
</g>
<g transform="rotate(-10.0 661.7 868.1)"><ellipse cx="661.7" cy="868.1" rx="2.5" ry="6.0" fill="none" stroke="#0F8686" stroke-width="1.4"/>
</g>
<g transform="rotate(-10.0 669.2 881.4)"><ellipse cx="669.2" cy="881.4" rx="2.3" ry="5.0" fill="none" stroke="#0F8686" stroke-width="1.4"/>
</g>
<g>
<ellipse cx="696.7" cy="910.7" rx="10.5" ry="10.0" fill="#0F8686" fill-opacity="0.2"/>
<ellipse cx="696.7" cy="910.7" rx="10.5" ry="10.0" fill="none" stroke="#0F8686" stroke-width="1.3"/>
<ellipse cx="696.7" cy="910.7" rx="8.6" ry="8.2" fill="none" stroke="#0F8686" stroke-width="1.3"/>
<ellipse cx="696.7" cy="910.7" rx="6.7" ry="6.4" fill="none" stroke="#0F8686" stroke-width="1.3"/>
<ellipse cx="696.7" cy="910.7" rx="4.8" ry="4.6" fill="none" stroke="#0F8686" stroke-width="1.3"/>
<ellipse cx="696.7" cy="910.7" rx="2.9" ry="2.7" fill="none" stroke="#0F8686" stroke-width="1.3"/>
</g>
<g><ellipse cx="837.1" cy="692.7" rx="14.7" ry="16.1" fill="#0F8686" fill-opacity="0.9"/>
<ellipse cx="837.1" cy="692.7" rx="9.1" ry="10.6" fill="none" stroke="#8fcaca" stroke-width="0.7" stroke-opacity="0.4"/>
<ellipse cx="837.1" cy="692.7" rx="5.9" ry="7.4" fill="none" stroke="#b8dede" stroke-width="0.8" stroke-opacity="0.55"/>
<ellipse cx="837.1" cy="691.9" rx="1.5" ry="3.2" fill="#d4ecec" stroke="#f4ffff" stroke-width="0.8"/></g>
<g><ellipse cx="853.4" cy="696.4" rx="13.4" ry="14.7" fill="#0F8686" fill-opacity="0.9"/>
<ellipse cx="853.4" cy="696.4" rx="8.3" ry="9.7" fill="none" stroke="#8fcaca" stroke-width="0.7" stroke-opacity="0.4"/>
<ellipse cx="853.4" cy="696.4" rx="5.4" ry="6.8" fill="none" stroke="#b8dede" stroke-width="0.8" stroke-opacity="0.55"/>
<ellipse cx="853.4" cy="695.7" rx="1.3" ry="2.9" fill="#d4ecec" stroke="#f4ffff" stroke-width="0.8"/></g>
<g>
<ellipse cx="824.6" cy="680.2" rx="10.0" ry="10.0" fill="#0F8686" fill-opacity="0.2"/>
<ellipse cx="824.6" cy="680.2" rx="10.0" ry="10.0" fill="none" stroke="#0F8686" stroke-width="1.3"/>
<ellipse cx="824.6" cy="680.2" rx="8.2" ry="8.2" fill="none" stroke="#0F8686" stroke-width="1.3"/>
<ellipse cx="824.6" cy="680.2" rx="6.4" ry="6.4" fill="none" stroke="#0F8686" stroke-width="1.3"/>
<ellipse cx="824.6" cy="680.2" rx="4.6" ry="4.6" fill="none" stroke="#0F8686" stroke-width="1.3"/>
<ellipse cx="824.6" cy="680.2" rx="2.7" ry="2.7" fill="none" stroke="#0F8686" stroke-width="1.3"/>
</g>
<g><ellipse cx="827.1" cy="726.5" rx="13.4" ry="17.4" fill="#0F8686" fill-opacity="0.9"/>
<ellipse cx="827.1" cy="726.5" rx="8.3" ry="11.5" fill="none" stroke="#8fcaca" stroke-width="0.7" stroke-opacity="0.4"/>
<ellipse cx="827.1" cy="726.5" rx="5.4" ry="8.0" fill="none" stroke="#b8dede" stroke-width="0.8" stroke-opacity="0.55"/>
<ellipse cx="827.1" cy="725.6" rx="1.3" ry="3.5" fill="#d4ecec" stroke="#f4ffff" stroke-width="0.8"/></g>
<g><ellipse cx="858.4" cy="732.8" rx="18.8" ry="29.5" fill="#0F8686" fill-opacity="0.9"/>
<ellipse cx="858.4" cy="732.8" rx="11.6" ry="19.5" fill="none" stroke="#8fcaca" stroke-width="0.7" stroke-opacity="0.4"/>
<ellipse cx="858.4" cy="732.8" rx="7.5" ry="13.6" fill="none" stroke="#b8dede" stroke-width="0.8" stroke-opacity="0.55"/>
<ellipse cx="858.4" cy="731.3" rx="1.9" ry="5.9" fill="#d4ecec" stroke="#f4ffff" stroke-width="0.8"/></g>
<g><ellipse cx="886.0" cy="727.8" rx="16.1" ry="24.1" fill="#0F8686" fill-opacity="0.9"/>
<ellipse cx="886.0" cy="727.8" rx="10.0" ry="15.9" fill="none" stroke="#8fcaca" stroke-width="0.7" stroke-opacity="0.4"/>
<ellipse cx="886.0" cy="727.8" rx="6.4" ry="11.1" fill="none" stroke="#b8dede" stroke-width="0.8" stroke-opacity="0.55"/>
<ellipse cx="886.0" cy="726.6" rx="1.6" ry="4.8" fill="#d4ecec" stroke="#f4ffff" stroke-width="0.8"/></g>
<g><ellipse cx="829.6" cy="775.4" rx="14.7" ry="20.1" fill="#0F8686" fill-opacity="0.9"/>
<ellipse cx="829.6" cy="775.4" rx="9.1" ry="13.3" fill="none" stroke="#8fcaca" stroke-width="0.7" stroke-opacity="0.4"/>
<ellipse cx="829.6" cy="775.4" rx="5.9" ry="9.3" fill="none" stroke="#b8dede" stroke-width="0.8" stroke-opacity="0.55"/>
<ellipse cx="829.6" cy="774.4" rx="1.5" ry="4.0" fill="#d4ecec" stroke="#f4ffff" stroke-width="0.8"/></g>
<g><ellipse cx="865.9" cy="790.4" rx="18.8" ry="18.8" fill="#0F8686" fill-opacity="0.9"/>
<ellipse cx="865.9" cy="790.4" rx="11.6" ry="12.4" fill="none" stroke="#8fcaca" stroke-width="0.7" stroke-opacity="0.4"/>
<ellipse cx="865.9" cy="790.4" rx="7.5" ry="8.6" fill="none" stroke="#b8dede" stroke-width="0.8" stroke-opacity="0.55"/>
<ellipse cx="865.9" cy="789.5" rx="1.9" ry="3.8" fill="#d4ecec" stroke="#f4ffff" stroke-width="0.8"/></g>
<g><ellipse cx="888.5" cy="796.7" rx="13.4" ry="16.1" fill="#0F8686" fill-opacity="0.9"/>
<ellipse cx="888.5" cy="796.7" rx="8.3" ry="10.6" fill="none" stroke="#8fcaca" stroke-width="0.7" stroke-opacity="0.4"/>
<ellipse cx="888.5" cy="796.7" rx="5.4" ry="7.4" fill="none" stroke="#b8dede" stroke-width="0.8" stroke-opacity="0.55"/>
<ellipse cx="888.5" cy="795.9" rx="1.3" ry="3.2" fill="#d4ecec" stroke="#f4ffff" stroke-width="0.8"/></g>
<g>
<ellipse cx="813.3" cy="727.8" rx="5.5" ry="11.3" fill="#0F8686" fill-opacity="0.2"/>
<ellipse cx="813.3" cy="727.8" rx="5.5" ry="11.3" fill="none" stroke="#0F8686" stroke-width="1.3"/>
<ellipse cx="813.3" cy="727.8" rx="3.9" ry="8.1" fill="none" stroke="#0F8686" stroke-width="1.3"/>
<ellipse cx="813.3" cy="727.8" rx="2.4" ry="4.8" fill="none" stroke="#0F8686" stroke-width="1.3"/>
</g>
<g>
<ellipse cx="813.3" cy="780.4" rx="5.5" ry="15.0" fill="#0F8686" fill-opacity="0.2"/>
<ellipse cx="813.3" cy="780.4" rx="5.5" ry="15.0" fill="none" stroke="#0F8686" stroke-width="1.3"/>
<ellipse cx="813.3" cy="780.4" rx="3.9" ry="10.7" fill="none" stroke="#0F8686" stroke-width="1.3"/>
<ellipse cx="813.3" cy="780.4" rx="2.4" ry="6.4" fill="none" stroke="#0F8686" stroke-width="1.3"/>
</g>
<g>
<ellipse cx="881.0" cy="818.0" rx="17.5" ry="10.0" fill="#0F8686" fill-opacity="0.2"/>
<ellipse cx="881.0" cy="818.0" rx="17.5" ry="10.0" fill="none" stroke="#0F8686" stroke-width="1.3"/>
<ellipse cx="881.0" cy="818.0" rx="14.4" ry="8.2" fill="none" stroke="#0F8686" stroke-width="1.3"/>
<ellipse cx="881.0" cy="818.0" rx="11.2" ry="6.4" fill="none" stroke="#0F8686" stroke-width="1.3"/>
<ellipse cx="881.0" cy="818.0" rx="8.0" ry="4.6" fill="none" stroke="#0F8686" stroke-width="1.3"/>
<ellipse cx="881.0" cy="818.0" rx="4.8" ry="2.7" fill="none" stroke="#0F8686" stroke-width="1.3"/>
</g>
<g><ellipse cx="930.3" cy="656.3" rx="16.1" ry="25.5" fill="#0F8686" fill-opacity="0.9"/>
<ellipse cx="930.3" cy="656.3" rx="10.0" ry="16.8" fill="none" stroke="#8fcaca" stroke-width="0.7" stroke-opacity="0.4"/>
<ellipse cx="930.3" cy="656.3" rx="6.4" ry="11.7" fill="none" stroke="#b8dede" stroke-width="0.8" stroke-opacity="0.55"/>
<ellipse cx="930.3" cy="655.1" rx="1.6" ry="5.1" fill="#d4ecec" stroke="#f4ffff" stroke-width="0.8"/></g>
<g><ellipse cx="1048.1" cy="680.2" rx="13.4" ry="16.1" fill="#0F8686" fill-opacity="0.9"/>
<ellipse cx="1048.1" cy="680.2" rx="8.3" ry="10.6" fill="none" stroke="#8fcaca" stroke-width="0.7" stroke-opacity="0.4"/>
<ellipse cx="1048.1" cy="680.2" rx="5.4" ry="7.4" fill="none" stroke="#b8dede" stroke-width="0.8" stroke-opacity="0.55"/>
<ellipse cx="1048.1" cy="679.3" rx="1.3" ry="3.2" fill="#d4ecec" stroke="#f4ffff" stroke-width="0.8"/></g>
<g><ellipse cx="980.5" cy="680.2" rx="10.7" ry="10.7" fill="#0F8686" fill-opacity="0.9"/>
<ellipse cx="980.5" cy="680.2" rx="6.7" ry="7.1" fill="none" stroke="#8fcaca" stroke-width="0.7" stroke-opacity="0.4"/>
<ellipse cx="980.5" cy="680.2" rx="4.3" ry="4.9" fill="none" stroke="#b8dede" stroke-width="0.8" stroke-opacity="0.55"/>
<ellipse cx="980.5" cy="679.6" rx="1.1" ry="2.1" fill="#d4ecec" stroke="#f4ffff" stroke-width="0.8"/></g>
<g><ellipse cx="955.4" cy="702.7" rx="18.8" ry="24.1" fill="#0F8686" fill-opacity="0.9"/>
<ellipse cx="955.4" cy="702.7" rx="11.6" ry="15.9" fill="none" stroke="#8fcaca" stroke-width="0.7" stroke-opacity="0.4"/>
<ellipse cx="955.4" cy="702.7" rx="7.5" ry="11.1" fill="none" stroke="#b8dede" stroke-width="0.8" stroke-opacity="0.55"/>
<ellipse cx="955.4" cy="701.5" rx="1.9" ry="4.8" fill="#d4ecec" stroke="#f4ffff" stroke-width="0.8"/></g>
<g><ellipse cx="990.5" cy="702.7" rx="18.8" ry="24.1" fill="#0F8686" fill-opacity="0.9"/>
<ellipse cx="990.5" cy="702.7" rx="11.6" ry="15.9" fill="none" stroke="#8fcaca" stroke-width="0.7" stroke-opacity="0.4"/>
<ellipse cx="990.5" cy="702.7" rx="7.5" ry="11.1" fill="none" stroke="#b8dede" stroke-width="0.8" stroke-opacity="0.55"/>
<ellipse cx="990.5" cy="701.5" rx="1.9" ry="4.8" fill="#d4ecec" stroke="#f4ffff" stroke-width="0.8"/></g>
<g><ellipse cx="1020.6" cy="707.7" rx="16.1" ry="24.1" fill="#0F8686" fill-opacity="0.9"/>
<ellipse cx="1020.6" cy="707.7" rx="10.0" ry="15.9" fill="none" stroke="#8fcaca" stroke-width="0.7" stroke-opacity="0.4"/>
<ellipse cx="1020.6" cy="707.7" rx="6.4" ry="11.1" fill="none" stroke="#b8dede" stroke-width="0.8" stroke-opacity="0.55"/>
<ellipse cx="1020.6" cy="706.5" rx="1.6" ry="4.8" fill="#d4ecec" stroke="#f4ffff" stroke-width="0.8"/></g>
<g><ellipse cx="1050.6" cy="715.2" rx="16.1" ry="29.5" fill="#0F8686" fill-opacity="0.9"/>
<ellipse cx="1050.6" cy="715.2" rx="10.0" ry="19.5" fill="none" stroke="#8fcaca" stroke-width="0.7" stroke-opacity="0.4"/>
<ellipse cx="1050.6" cy="715.2" rx="6.4" ry="13.6" fill="none" stroke="#b8dede" stroke-width="0.8" stroke-opacity="0.55"/>
<ellipse cx="1050.6" cy="713.8" rx="1.6" ry="5.9" fill="#d4ecec" stroke="#f4ffff" stroke-width="0.8"/></g>
<g><ellipse cx="1083.2" cy="705.2" rx="21.5" ry="24.1" fill="#0F8686" fill-opacity="0.9"/>
<ellipse cx="1083.2" cy="705.2" rx="13.3" ry="15.9" fill="none" stroke="#8fcaca" stroke-width="0.7" stroke-opacity="0.4"/>
<ellipse cx="1083.2" cy="705.2" rx="8.6" ry="11.1" fill="none" stroke="#b8dede" stroke-width="0.8" stroke-opacity="0.55"/>
<ellipse cx="1083.2" cy="704.0" rx="2.1" ry="4.8" fill="#d4ecec" stroke="#f4ffff" stroke-width="0.8"/></g>
<g><ellipse cx="920.3" cy="732.8" rx="21.5" ry="32.2" fill="#0F8686" fill-opacity="0.9"/>
<ellipse cx="920.3" cy="732.8" rx="13.3" ry="21.2" fill="none" stroke="#8fcaca" stroke-width="0.7" stroke-opacity="0.4"/>
<ellipse cx="920.3" cy="732.8" rx="8.6" ry="14.8" fill="none" stroke="#b8dede" stroke-width="0.8" stroke-opacity="0.55"/>
<ellipse cx="920.3" cy="731.2" rx="2.1" ry="6.4" fill="#d4ecec" stroke="#f4ffff" stroke-width="0.8"/></g>
<g><ellipse cx="950.4" cy="760.4" rx="21.5" ry="32.2" fill="#0F8686" fill-opacity="0.9"/>
<ellipse cx="950.4" cy="760.4" rx="13.3" ry="21.2" fill="none" stroke="#8fcaca" stroke-width="0.7" stroke-opacity="0.4"/>
<ellipse cx="950.4" cy="760.4" rx="8.6" ry="14.8" fill="none" stroke="#b8dede" stroke-width="0.8" stroke-opacity="0.55"/>
<ellipse cx="950.4" cy="758.7" rx="2.1" ry="6.4" fill="#d4ecec" stroke="#f4ffff" stroke-width="0.8"/></g>
<g><ellipse cx="980.5" cy="750.3" rx="18.8" ry="29.5" fill="#0F8686" fill-opacity="0.9"/>
<ellipse cx="980.5" cy="750.3" rx="11.6" ry="19.5" fill="none" stroke="#8fcaca" stroke-width="0.7" stroke-opacity="0.4"/>
<ellipse cx="980.5" cy="750.3" rx="7.5" ry="13.6" fill="none" stroke="#b8dede" stroke-width="0.8" stroke-opacity="0.55"/>
<ellipse cx="980.5" cy="748.9" rx="1.9" ry="5.9" fill="#d4ecec" stroke="#f4ffff" stroke-width="0.8"/></g>
<g><ellipse cx="1013.0" cy="745.3" rx="16.1" ry="26.8" fill="#0F8686" fill-opacity="0.9"/>
<ellipse cx="1013.0" cy="745.3" rx="10.0" ry="17.7" fill="none" stroke="#8fcaca" stroke-width="0.7" stroke-opacity="0.4"/>
<ellipse cx="1013.0" cy="745.3" rx="6.4" ry="12.3" fill="none" stroke="#b8dede" stroke-width="0.8" stroke-opacity="0.55"/>
<ellipse cx="1013.0" cy="744.0" rx="1.6" ry="5.4" fill="#d4ecec" stroke="#f4ffff" stroke-width="0.8"/></g>
<g><ellipse cx="1040.6" cy="755.3" rx="16.1" ry="21.5" fill="#0F8686" fill-opacity="0.9"/>
<ellipse cx="1040.6" cy="755.3" rx="10.0" ry="14.2" fill="none" stroke="#8fcaca" stroke-width="0.7" stroke-opacity="0.4"/>
<ellipse cx="1040.6" cy="755.3" rx="6.4" ry="9.9" fill="none" stroke="#b8dede" stroke-width="0.8" stroke-opacity="0.55"/>
<ellipse cx="1040.6" cy="754.3" rx="1.6" ry="4.3" fill="#d4ecec" stroke="#f4ffff" stroke-width="0.8"/></g>
<g><ellipse cx="1063.2" cy="755.3" rx="16.1" ry="21.5" fill="#0F8686" fill-opacity="0.9"/>
<ellipse cx="1063.2" cy="755.3" rx="10.0" ry="14.2" fill="none" stroke="#8fcaca" stroke-width="0.7" stroke-opacity="0.4"/>
<ellipse cx="1063.2" cy="755.3" rx="6.4" ry="9.9" fill="none" stroke="#b8dede" stroke-width="0.8" stroke-opacity="0.55"/>
<ellipse cx="1063.2" cy="754.3" rx="1.6" ry="4.3" fill="#d4ecec" stroke="#f4ffff" stroke-width="0.8"/></g>
<g><ellipse cx="1090.7" cy="760.4" rx="18.8" ry="29.5" fill="#0F8686" fill-opacity="0.9"/>
<ellipse cx="1090.7" cy="760.4" rx="11.6" ry="19.5" fill="none" stroke="#8fcaca" stroke-width="0.7" stroke-opacity="0.4"/>
<ellipse cx="1090.7" cy="760.4" rx="7.5" ry="13.6" fill="none" stroke="#b8dede" stroke-width="0.8" stroke-opacity="0.55"/>
<ellipse cx="1090.7" cy="758.9" rx="1.9" ry="5.9" fill="#d4ecec" stroke="#f4ffff" stroke-width="0.8"/></g>
<g><ellipse cx="935.3" cy="792.9" rx="18.8" ry="16.1" fill="#0F8686" fill-opacity="0.9"/>
<ellipse cx="935.3" cy="792.9" rx="11.6" ry="10.6" fill="none" stroke="#8fcaca" stroke-width="0.7" stroke-opacity="0.4"/>
<ellipse cx="935.3" cy="792.9" rx="7.5" ry="7.4" fill="none" stroke="#b8dede" stroke-width="0.8" stroke-opacity="0.55"/>
<ellipse cx="935.3" cy="792.1" rx="1.9" ry="3.2" fill="#d4ecec" stroke="#f4ffff" stroke-width="0.8"/></g>
<g><ellipse cx="1075.7" cy="792.9" rx="29.5" ry="16.1" fill="#0F8686" fill-opacity="0.9"/>
<ellipse cx="1075.7" cy="792.9" rx="18.3" ry="10.6" fill="none" stroke="#8fcaca" stroke-width="0.7" stroke-opacity="0.4"/>
<ellipse cx="1075.7" cy="792.9" rx="11.8" ry="7.4" fill="none" stroke="#b8dede" stroke-width="0.8" stroke-opacity="0.55"/>
<ellipse cx="1075.7" cy="792.1" rx="2.9" ry="3.2" fill="#d4ecec" stroke="#f4ffff" stroke-width="0.8"/></g>
<g><ellipse cx="995.5" cy="804.2" rx="14.7" ry="12.1" fill="#0F8686" fill-opacity="0.9"/>
<ellipse cx="995.5" cy="804.2" rx="9.1" ry="8.0" fill="none" stroke="#8fcaca" stroke-width="0.7" stroke-opacity="0.4"/>
<ellipse cx="995.5" cy="804.2" rx="5.9" ry="5.6" fill="none" stroke="#b8dede" stroke-width="0.8" stroke-opacity="0.55"/>
<ellipse cx="995.5" cy="803.6" rx="1.5" ry="2.4" fill="#d4ecec" stroke="#f4ffff" stroke-width="0.8"/></g>
<g><ellipse cx="1139.6" cy="687.7" rx="16.1" ry="16.1" fill="#0F8686" fill-opacity="0.9"/>
<ellipse cx="1139.6" cy="687.7" rx="10.0" ry="10.6" fill="none" stroke="#8fcaca" stroke-width="0.7" stroke-opacity="0.4"/>
<ellipse cx="1139.6" cy="687.7" rx="6.4" ry="7.4" fill="none" stroke="#b8dede" stroke-width="0.8" stroke-opacity="0.55"/>
<ellipse cx="1139.6" cy="686.9" rx="1.6" ry="3.2" fill="#d4ecec" stroke="#f4ffff" stroke-width="0.8"/></g>
<g><ellipse cx="1119.5" cy="695.2" rx="10.7" ry="16.1" fill="#0F8686" fill-opacity="0.9"/>
<ellipse cx="1119.5" cy="695.2" rx="6.7" ry="10.6" fill="none" stroke="#8fcaca" stroke-width="0.7" stroke-opacity="0.4"/>
<ellipse cx="1119.5" cy="695.2" rx="4.3" ry="7.4" fill="none" stroke="#b8dede" stroke-width="0.8" stroke-opacity="0.55"/>
<ellipse cx="1119.5" cy="694.4" rx="1.1" ry="3.2" fill="#d4ecec" stroke="#f4ffff" stroke-width="0.8"/></g>
<g><ellipse cx="1150.9" cy="720.3" rx="32.2" ry="18.8" fill="#0F8686" fill-opacity="0.9"/>
<ellipse cx="1150.9" cy="720.3" rx="20.0" ry="12.4" fill="none" stroke="#8fcaca" stroke-width="0.7" stroke-opacity="0.4"/>
<ellipse cx="1150.9" cy="720.3" rx="12.9" ry="8.6" fill="none" stroke="#b8dede" stroke-width="0.8" stroke-opacity="0.55"/>
<ellipse cx="1150.9" cy="719.3" rx="3.2" ry="3.8" fill="#d4ecec" stroke="#f4ffff" stroke-width="0.8"/></g>
<g><ellipse cx="1175.9" cy="725.3" rx="16.1" ry="16.1" fill="#0F8686" fill-opacity="0.9"/>
<ellipse cx="1175.9" cy="725.3" rx="10.0" ry="10.6" fill="none" stroke="#8fcaca" stroke-width="0.7" stroke-opacity="0.4"/>
<ellipse cx="1175.9" cy="725.3" rx="6.4" ry="7.4" fill="none" stroke="#b8dede" stroke-width="0.8" stroke-opacity="0.55"/>
<ellipse cx="1175.9" cy="724.5" rx="1.6" ry="3.2" fill="#d4ecec" stroke="#f4ffff" stroke-width="0.8"/></g>
<g><ellipse cx="1134.6" cy="770.4" rx="13.4" ry="24.1" fill="#0F8686" fill-opacity="0.9"/>
<ellipse cx="1134.6" cy="770.4" rx="8.3" ry="15.9" fill="none" stroke="#8fcaca" stroke-width="0.7" stroke-opacity="0.4"/>
<ellipse cx="1134.6" cy="770.4" rx="5.4" ry="11.1" fill="none" stroke="#b8dede" stroke-width="0.8" stroke-opacity="0.55"/>
<ellipse cx="1134.6" cy="769.2" rx="1.3" ry="4.8" fill="#d4ecec" stroke="#f4ffff" stroke-width="0.8"/></g>
<g>
<ellipse cx="1123.3" cy="813.0" rx="15.0" ry="20.1" fill="#0F8686" fill-opacity="0.2"/>
<ellipse cx="1123.3" cy="813.0" rx="15.0" ry="20.1" fill="none" stroke="#0F8686" stroke-width="1.3"/>
<ellipse cx="1123.3" cy="813.0" rx="13.3" ry="17.7" fill="none" stroke="#0F8686" stroke-width="1.3"/>
<ellipse cx="1123.3" cy="813.0" rx="11.5" ry="15.3" fill="none" stroke="#0F8686" stroke-width="1.3"/>
<ellipse cx="1123.3" cy="813.0" rx="9.7" ry="13.0" fill="none" stroke="#0F8686" stroke-width="1.3"/>
<ellipse cx="1123.3" cy="813.0" rx="8.0" ry="10.6" fill="none" stroke="#0F8686" stroke-width="1.3"/>
<ellipse cx="1123.3" cy="813.0" rx="6.2" ry="8.3" fill="none" stroke="#0F8686" stroke-width="1.3"/>
<ellipse cx="1123.3" cy="813.0" rx="4.4" ry="5.9" fill="none" stroke="#0F8686" stroke-width="1.3"/>
<ellipse cx="1123.3" cy="813.0" rx="2.7" ry="3.5" fill="none" stroke="#0F8686" stroke-width="1.3"/>
</g>
<g>
<ellipse cx="1133.3" cy="845.6" rx="20.1" ry="20.1" fill="#0F8686" fill-opacity="0.2"/>
<ellipse cx="1133.3" cy="845.6" rx="20.1" ry="20.1" fill="none" stroke="#0F8686" stroke-width="1.3"/>
<ellipse cx="1133.3" cy="845.6" rx="18.3" ry="18.3" fill="none" stroke="#0F8686" stroke-width="1.3"/>
<ellipse cx="1133.3" cy="845.6" rx="16.6" ry="16.6" fill="none" stroke="#0F8686" stroke-width="1.3"/>
<ellipse cx="1133.3" cy="845.6" rx="14.8" ry="14.8" fill="none" stroke="#0F8686" stroke-width="1.3"/>
<ellipse cx="1133.3" cy="845.6" rx="13.1" ry="13.1" fill="none" stroke="#0F8686" stroke-width="1.3"/>
<ellipse cx="1133.3" cy="845.6" rx="11.3" ry="11.3" fill="none" stroke="#0F8686" stroke-width="1.3"/>
<ellipse cx="1133.3" cy="845.6" rx="9.6" ry="9.6" fill="none" stroke="#0F8686" stroke-width="1.3"/>
<ellipse cx="1133.3" cy="845.6" rx="7.8" ry="7.8" fill="none" stroke="#0F8686" stroke-width="1.3"/>
<ellipse cx="1133.3" cy="845.6" rx="6.1" ry="6.1" fill="none" stroke="#0F8686" stroke-width="1.3"/>
<ellipse cx="1133.3" cy="845.6" rx="4.4" ry="4.4" fill="none" stroke="#0F8686" stroke-width="1.3"/>
<ellipse cx="1133.3" cy="845.6" rx="2.6" ry="2.6" fill="none" stroke="#0F8686" stroke-width="1.3"/>
</g>
<g><ellipse cx="1127.1" cy="851.8" rx="5.9" ry="8.6" fill="#0F8686" fill-opacity="0.9"/>
<ellipse cx="1127.1" cy="851.4" rx="1.1" ry="2.0" fill="#d4ecec" stroke="#f4ffff" stroke-width="0.8"/></g>
<g><ellipse cx="1140.4" cy="851.8" rx="5.9" ry="8.6" fill="#0F8686" fill-opacity="0.9"/>
<ellipse cx="1140.4" cy="851.4" rx="1.1" ry="2.0" fill="#d4ecec" stroke="#f4ffff" stroke-width="0.8"/></g>
<g><ellipse cx="1187.2" cy="772.9" rx="14.7" ry="16.1" fill="#0F8686" fill-opacity="0.9"/>
<ellipse cx="1187.2" cy="772.9" rx="9.1" ry="10.6" fill="none" stroke="#8fcaca" stroke-width="0.7" stroke-opacity="0.4"/>
<ellipse cx="1187.2" cy="772.9" rx="5.9" ry="7.4" fill="none" stroke="#b8dede" stroke-width="0.8" stroke-opacity="0.55"/>
<ellipse cx="1187.2" cy="772.1" rx="1.5" ry="3.2" fill="#d4ecec" stroke="#f4ffff" stroke-width="0.8"/></g>
<g><ellipse cx="1201.0" cy="665.1" rx="8.0" ry="13.4" fill="#0F8686" fill-opacity="0.9"/>
<ellipse cx="1201.0" cy="665.1" rx="5.0" ry="8.8" fill="none" stroke="#8fcaca" stroke-width="0.7" stroke-opacity="0.4"/>
<ellipse cx="1201.0" cy="665.1" rx="3.2" ry="6.2" fill="none" stroke="#b8dede" stroke-width="0.8" stroke-opacity="0.55"/>
<ellipse cx="1201.0" cy="664.4" rx="1.1" ry="2.7" fill="#d4ecec" stroke="#f4ffff" stroke-width="0.8"/></g>
<g><ellipse cx="1181.0" cy="622.5" rx="10.7" ry="9.4" fill="#0F8686" fill-opacity="0.9"/>
<ellipse cx="1181.0" cy="622.5" rx="6.7" ry="6.2" fill="none" stroke="#8fcaca" stroke-width="0.7" stroke-opacity="0.4"/>
<ellipse cx="1181.0" cy="622.5" rx="4.3" ry="4.3" fill="none" stroke="#b8dede" stroke-width="0.8" stroke-opacity="0.55"/>
<ellipse cx="1181.0" cy="622.0" rx="1.1" ry="2.0" fill="#d4ecec" stroke="#f4ffff" stroke-width="0.8"/></g>
<g><ellipse cx="895.2" cy="820.5" rx="16.1" ry="14.7" fill="#0F8686" fill-opacity="0.9"/>
<ellipse cx="895.2" cy="820.5" rx="10.0" ry="9.7" fill="none" stroke="#8fcaca" stroke-width="0.7" stroke-opacity="0.4"/>
<ellipse cx="895.2" cy="820.5" rx="6.4" ry="6.8" fill="none" stroke="#b8dede" stroke-width="0.8" stroke-opacity="0.55"/>
<ellipse cx="895.2" cy="819.8" rx="1.6" ry="2.9" fill="#d4ecec" stroke="#f4ffff" stroke-width="0.8"/></g>
<g><ellipse cx="921.6" cy="818.0" rx="12.1" ry="13.4" fill="#0F8686" fill-opacity="0.9"/>
<ellipse cx="921.6" cy="818.0" rx="7.5" ry="8.8" fill="none" stroke="#8fcaca" stroke-width="0.7" stroke-opacity="0.4"/>
<ellipse cx="921.6" cy="818.0" rx="4.8" ry="6.2" fill="none" stroke="#b8dede" stroke-width="0.8" stroke-opacity="0.55"/>
<ellipse cx="921.6" cy="817.3" rx="1.2" ry="2.7" fill="#d4ecec" stroke="#f4ffff" stroke-width="0.8"/></g>
<g>
<ellipse cx="875.2" cy="820.5" rx="12.5" ry="12.5" fill="#0F8686" fill-opacity="0.2"/>
<ellipse cx="875.2" cy="820.5" rx="12.5" ry="12.5" fill="none" stroke="#0F8686" stroke-width="1.3"/>
<ellipse cx="875.2" cy="820.5" rx="10.6" ry="10.6" fill="none" stroke="#0F8686" stroke-width="1.3"/>
<ellipse cx="875.2" cy="820.5" rx="8.7" ry="8.7" fill="none" stroke="#0F8686" stroke-width="1.3"/>
<ellipse cx="875.2" cy="820.5" rx="6.7" ry="6.7" fill="none" stroke="#0F8686" stroke-width="1.3"/>
<ellipse cx="875.2" cy="820.5" rx="4.8" ry="4.8" fill="none" stroke="#0F8686" stroke-width="1.3"/>
<ellipse cx="875.2" cy="820.5" rx="2.9" ry="2.9" fill="none" stroke="#0F8686" stroke-width="1.3"/>
</g>
<g><ellipse cx="988.0" cy="823.0" rx="16.1" ry="18.8" fill="#0F8686" fill-opacity="0.9"/>
<ellipse cx="988.0" cy="823.0" rx="10.0" ry="12.4" fill="none" stroke="#8fcaca" stroke-width="0.7" stroke-opacity="0.4"/>
<ellipse cx="988.0" cy="823.0" rx="6.4" ry="8.6" fill="none" stroke="#b8dede" stroke-width="0.8" stroke-opacity="0.55"/>
<ellipse cx="988.0" cy="822.1" rx="1.6" ry="3.8" fill="#d4ecec" stroke="#f4ffff" stroke-width="0.8"/></g>
<g><ellipse cx="965.4" cy="835.5" rx="16.1" ry="16.1" fill="#0F8686" fill-opacity="0.9"/>
<ellipse cx="965.4" cy="835.5" rx="10.0" ry="10.6" fill="none" stroke="#8fcaca" stroke-width="0.7" stroke-opacity="0.4"/>
<ellipse cx="965.4" cy="835.5" rx="6.4" ry="7.4" fill="none" stroke="#b8dede" stroke-width="0.8" stroke-opacity="0.55"/>
<ellipse cx="965.4" cy="834.7" rx="1.6" ry="3.2" fill="#d4ecec" stroke="#f4ffff" stroke-width="0.8"/></g>
<g><ellipse cx="1050.6" cy="818.0" rx="13.4" ry="16.1" fill="#0F8686" fill-opacity="0.9"/>
<ellipse cx="1050.6" cy="818.0" rx="8.3" ry="10.6" fill="none" stroke="#8fcaca" stroke-width="0.7" stroke-opacity="0.4"/>
<ellipse cx="1050.6" cy="818.0" rx="5.4" ry="7.4" fill="none" stroke="#b8dede" stroke-width="0.8" stroke-opacity="0.55"/>
<ellipse cx="1050.6" cy="817.2" rx="1.3" ry="3.2" fill="#d4ecec" stroke="#f4ffff" stroke-width="0.8"/></g>
<g><ellipse cx="1078.2" cy="818.0" rx="16.1" ry="16.1" fill="#0F8686" fill-opacity="0.9"/>
<ellipse cx="1078.2" cy="818.0" rx="10.0" ry="10.6" fill="none" stroke="#8fcaca" stroke-width="0.7" stroke-opacity="0.4"/>
<ellipse cx="1078.2" cy="818.0" rx="6.4" ry="7.4" fill="none" stroke="#b8dede" stroke-width="0.8" stroke-opacity="0.55"/>
<ellipse cx="1078.2" cy="817.2" rx="1.6" ry="3.2" fill="#d4ecec" stroke="#f4ffff" stroke-width="0.8"/></g>
<g><ellipse cx="1098.2" cy="833.0" rx="13.4" ry="13.4" fill="#0F8686" fill-opacity="0.9"/>
<ellipse cx="1098.2" cy="833.0" rx="8.3" ry="8.8" fill="none" stroke="#8fcaca" stroke-width="0.7" stroke-opacity="0.4"/>
<ellipse cx="1098.2" cy="833.0" rx="5.4" ry="6.2" fill="none" stroke="#b8dede" stroke-width="0.8" stroke-opacity="0.55"/>
<ellipse cx="1098.2" cy="832.4" rx="1.3" ry="2.7" fill="#d4ecec" stroke="#f4ffff" stroke-width="0.8"/></g>
<g><ellipse cx="1063.2" cy="833.0" rx="13.4" ry="10.7" fill="#0F8686" fill-opacity="0.9"/>
<ellipse cx="1063.2" cy="833.0" rx="8.3" ry="7.1" fill="none" stroke="#8fcaca" stroke-width="0.7" stroke-opacity="0.4"/>
<ellipse cx="1063.2" cy="833.0" rx="5.4" ry="4.9" fill="none" stroke="#b8dede" stroke-width="0.8" stroke-opacity="0.55"/>
<ellipse cx="1063.2" cy="832.5" rx="1.3" ry="2.1" fill="#d4ecec" stroke="#f4ffff" stroke-width="0.8"/></g>
<g><ellipse cx="861.4" cy="848.6" rx="3.0" ry="4.5" fill="none" stroke="#0F8686" stroke-width="1.4"/>
</g>
<g><ellipse cx="906.5" cy="860.6" rx="13.4" ry="17.4" fill="#0F8686" fill-opacity="0.9"/>
<ellipse cx="906.5" cy="860.6" rx="8.3" ry="11.5" fill="none" stroke="#8fcaca" stroke-width="0.7" stroke-opacity="0.4"/>
<ellipse cx="906.5" cy="860.6" rx="5.4" ry="8.0" fill="none" stroke="#b8dede" stroke-width="0.8" stroke-opacity="0.55"/>
<ellipse cx="906.5" cy="859.7" rx="1.3" ry="3.5" fill="#d4ecec" stroke="#f4ffff" stroke-width="0.8"/></g>
<g><ellipse cx="972.9" cy="865.6" rx="18.8" ry="24.1" fill="#0F8686" fill-opacity="0.9"/>
<ellipse cx="972.9" cy="865.6" rx="11.6" ry="15.9" fill="none" stroke="#8fcaca" stroke-width="0.7" stroke-opacity="0.4"/>
<ellipse cx="972.9" cy="865.6" rx="7.5" ry="11.1" fill="none" stroke="#b8dede" stroke-width="0.8" stroke-opacity="0.55"/>
<ellipse cx="972.9" cy="864.4" rx="1.9" ry="4.8" fill="#d4ecec" stroke="#f4ffff" stroke-width="0.8"/></g>
<g><ellipse cx="1018.0" cy="873.1" rx="18.8" ry="26.8" fill="#0F8686" fill-opacity="0.9"/>
<ellipse cx="1018.0" cy="873.1" rx="11.6" ry="17.7" fill="none" stroke="#8fcaca" stroke-width="0.7" stroke-opacity="0.4"/>
<ellipse cx="1018.0" cy="873.1" rx="7.5" ry="12.3" fill="none" stroke="#b8dede" stroke-width="0.8" stroke-opacity="0.55"/>
<ellipse cx="1018.0" cy="871.8" rx="1.9" ry="5.4" fill="#d4ecec" stroke="#f4ffff" stroke-width="0.8"/></g>
<g><ellipse cx="1038.1" cy="878.1" rx="13.4" ry="21.5" fill="#0F8686" fill-opacity="0.9"/>
<ellipse cx="1038.1" cy="878.1" rx="8.3" ry="14.2" fill="none" stroke="#8fcaca" stroke-width="0.7" stroke-opacity="0.4"/>
<ellipse cx="1038.1" cy="878.1" rx="5.4" ry="9.9" fill="none" stroke="#b8dede" stroke-width="0.8" stroke-opacity="0.55"/>
<ellipse cx="1038.1" cy="877.1" rx="1.3" ry="4.3" fill="#d4ecec" stroke="#f4ffff" stroke-width="0.8"/></g>
<g><ellipse cx="950.4" cy="910.7" rx="21.5" ry="13.4" fill="#0F8686" fill-opacity="0.9"/>
<ellipse cx="950.4" cy="910.7" rx="13.3" ry="8.8" fill="none" stroke="#8fcaca" stroke-width="0.7" stroke-opacity="0.4"/>
<ellipse cx="950.4" cy="910.7" rx="8.6" ry="6.2" fill="none" stroke="#b8dede" stroke-width="0.8" stroke-opacity="0.55"/>
<ellipse cx="950.4" cy="910.1" rx="2.1" ry="2.7" fill="#d4ecec" stroke="#f4ffff" stroke-width="0.8"/></g>
<g><ellipse cx="1073.2" cy="903.2" rx="18.8" ry="16.1" fill="#0F8686" fill-opacity="0.9"/>
<ellipse cx="1073.2" cy="903.2" rx="11.6" ry="10.6" fill="none" stroke="#8fcaca" stroke-width="0.7" stroke-opacity="0.4"/>
<ellipse cx="1073.2" cy="903.2" rx="7.5" ry="7.4" fill="none" stroke="#b8dede" stroke-width="0.8" stroke-opacity="0.55"/>
<ellipse cx="1073.2" cy="902.4" rx="1.9" ry="3.2" fill="#d4ecec" stroke="#f4ffff" stroke-width="0.8"/></g>
<g><ellipse cx="1100.8" cy="908.2" rx="16.1" ry="13.4" fill="#0F8686" fill-opacity="0.9"/>
<ellipse cx="1100.8" cy="908.2" rx="10.0" ry="8.8" fill="none" stroke="#8fcaca" stroke-width="0.7" stroke-opacity="0.4"/>
<ellipse cx="1100.8" cy="908.2" rx="6.4" ry="6.2" fill="none" stroke="#b8dede" stroke-width="0.8" stroke-opacity="0.55"/>
<ellipse cx="1100.8" cy="907.6" rx="1.6" ry="2.7" fill="#d4ecec" stroke="#f4ffff" stroke-width="0.8"/></g>
<g>
<ellipse cx="905.3" cy="910.7" rx="15.0" ry="10.0" fill="#0F8686" fill-opacity="0.2"/>
<ellipse cx="905.3" cy="910.7" rx="15.0" ry="10.0" fill="none" stroke="#0F8686" stroke-width="1.3"/>
<ellipse cx="905.3" cy="910.7" rx="12.3" ry="8.2" fill="none" stroke="#0F8686" stroke-width="1.3"/>
<ellipse cx="905.3" cy="910.7" rx="9.6" ry="6.4" fill="none" stroke="#0F8686" stroke-width="1.3"/>
<ellipse cx="905.3" cy="910.7" rx="6.8" ry="4.6" fill="none" stroke="#0F8686" stroke-width="1.3"/>
<ellipse cx="905.3" cy="910.7" rx="4.1" ry="2.7" fill="none" stroke="#0F8686" stroke-width="1.3"/>
</g>
<g><ellipse cx="1000.5" cy="910.7" rx="16.1" ry="13.4" fill="#0F8686" fill-opacity="0.9"/>
<ellipse cx="1000.5" cy="910.7" rx="10.0" ry="8.8" fill="none" stroke="#8fcaca" stroke-width="0.7" stroke-opacity="0.4"/>
<ellipse cx="1000.5" cy="910.7" rx="6.4" ry="6.2" fill="none" stroke="#b8dede" stroke-width="0.8" stroke-opacity="0.55"/>
<ellipse cx="1000.5" cy="910.1" rx="1.6" ry="2.7" fill="#d4ecec" stroke="#f4ffff" stroke-width="0.8"/></g>
<g><ellipse cx="1204.0" cy="662.6" rx="12.9" ry="14.7" fill="#0F8686" fill-opacity="0.9"/>
<ellipse cx="1204.0" cy="662.6" rx="8.0" ry="9.7" fill="none" stroke="#8fcaca" stroke-width="0.7" stroke-opacity="0.4"/>
<ellipse cx="1204.0" cy="662.6" rx="5.1" ry="6.8" fill="none" stroke="#b8dede" stroke-width="0.8" stroke-opacity="0.55"/>
<ellipse cx="1204.0" cy="661.9" rx="1.3" ry="2.9" fill="#d4ecec" stroke="#f4ffff" stroke-width="0.8"/></g>
<g><ellipse cx="1219.0" cy="710.2" rx="16.1" ry="16.1" fill="#0F8686" fill-opacity="0.9"/>
<ellipse cx="1219.0" cy="710.2" rx="10.0" ry="10.6" fill="none" stroke="#8fcaca" stroke-width="0.7" stroke-opacity="0.4"/>
<ellipse cx="1219.0" cy="710.2" rx="6.4" ry="7.4" fill="none" stroke="#b8dede" stroke-width="0.8" stroke-opacity="0.55"/>
<ellipse cx="1219.0" cy="709.4" rx="1.6" ry="3.2" fill="#d4ecec" stroke="#f4ffff" stroke-width="0.8"/></g>
<g>
<ellipse cx="1212.8" cy="742.8" rx="13.8" ry="17.5" fill="#0F8686" fill-opacity="0.2"/>
<ellipse cx="1212.8" cy="742.8" rx="13.8" ry="17.5" fill="none" stroke="#0F8686" stroke-width="1.3"/>
<ellipse cx="1212.8" cy="742.8" rx="11.9" ry="15.2" fill="none" stroke="#0F8686" stroke-width="1.3"/>
<ellipse cx="1212.8" cy="742.8" rx="10.1" ry="12.9" fill="none" stroke="#0F8686" stroke-width="1.3"/>
<ellipse cx="1212.8" cy="742.8" rx="8.3" ry="10.5" fill="none" stroke="#0F8686" stroke-width="1.3"/>
<ellipse cx="1212.8" cy="742.8" rx="6.4" ry="8.2" fill="none" stroke="#0F8686" stroke-width="1.3"/>
<ellipse cx="1212.8" cy="742.8" rx="4.6" ry="5.8" fill="none" stroke="#0F8686" stroke-width="1.3"/>
<ellipse cx="1212.8" cy="742.8" rx="2.8" ry="3.5" fill="none" stroke="#0F8686" stroke-width="1.3"/>
</g>
<g><ellipse cx="1241.6" cy="739.0" rx="16.1" ry="18.8" fill="#0F8686" fill-opacity="0.9"/>
<ellipse cx="1241.6" cy="739.0" rx="10.0" ry="12.4" fill="none" stroke="#8fcaca" stroke-width="0.7" stroke-opacity="0.4"/>
<ellipse cx="1241.6" cy="739.0" rx="6.4" ry="8.6" fill="none" stroke="#b8dede" stroke-width="0.8" stroke-opacity="0.55"/>
<ellipse cx="1241.6" cy="738.1" rx="1.6" ry="3.8" fill="#d4ecec" stroke="#f4ffff" stroke-width="0.8"/></g>
<g><ellipse cx="1255.4" cy="739.0" rx="10.7" ry="13.4" fill="#0F8686" fill-opacity="0.9"/>
<ellipse cx="1255.4" cy="739.0" rx="6.7" ry="8.8" fill="none" stroke="#8fcaca" stroke-width="0.7" stroke-opacity="0.4"/>
<ellipse cx="1255.4" cy="739.0" rx="4.3" ry="6.2" fill="none" stroke="#b8dede" stroke-width="0.8" stroke-opacity="0.55"/>
<ellipse cx="1255.4" cy="738.4" rx="1.1" ry="2.7" fill="#d4ecec" stroke="#f4ffff" stroke-width="0.8"/></g>
<g><ellipse cx="1304.3" cy="750.3" rx="13.9" ry="16.1" fill="#0F8686" fill-opacity="0.9"/>
<ellipse cx="1304.3" cy="750.3" rx="8.6" ry="10.6" fill="none" stroke="#8fcaca" stroke-width="0.7" stroke-opacity="0.4"/>
<ellipse cx="1304.3" cy="750.3" rx="5.6" ry="7.4" fill="none" stroke="#b8dede" stroke-width="0.8" stroke-opacity="0.55"/>
<ellipse cx="1304.3" cy="749.5" rx="1.4" ry="3.2" fill="#d4ecec" stroke="#f4ffff" stroke-width="0.8"/></g>
<g><ellipse cx="1390.7" cy="706.0" rx="15.6" ry="15.6" fill="#0F8686" fill-opacity="0.9"/>
<ellipse cx="1390.7" cy="706.0" rx="9.6" ry="10.3" fill="none" stroke="#8fcaca" stroke-width="0.7" stroke-opacity="0.4"/>
<ellipse cx="1390.7" cy="706.0" rx="6.2" ry="7.2" fill="none" stroke="#b8dede" stroke-width="0.8" stroke-opacity="0.55"/>
<ellipse cx="1390.7" cy="705.2" rx="1.6" ry="3.1" fill="#d4ecec" stroke="#f4ffff" stroke-width="0.8"/></g>
<g><ellipse cx="1434.6" cy="681.4" rx="14.7" ry="16.6" fill="#0F8686" fill-opacity="0.9"/>
<ellipse cx="1434.6" cy="681.4" rx="9.1" ry="11.0" fill="none" stroke="#8fcaca" stroke-width="0.7" stroke-opacity="0.4"/>
<ellipse cx="1434.6" cy="681.4" rx="5.9" ry="7.6" fill="none" stroke="#b8dede" stroke-width="0.8" stroke-opacity="0.55"/>
<ellipse cx="1434.6" cy="680.6" rx="1.5" ry="3.3" fill="#d4ecec" stroke="#f4ffff" stroke-width="0.8"/></g>
<g>
<ellipse cx="1449.6" cy="681.4" rx="6.3" ry="8.8" fill="#0F8686" fill-opacity="0.2"/>
<ellipse cx="1449.6" cy="681.4" rx="6.3" ry="8.8" fill="none" stroke="#0F8686" stroke-width="1.3"/>
<ellipse cx="1449.6" cy="681.4" rx="4.5" ry="6.3" fill="none" stroke="#0F8686" stroke-width="1.3"/>
<ellipse cx="1449.6" cy="681.4" rx="2.7" ry="3.8" fill="none" stroke="#0F8686" stroke-width="1.3"/>
</g>
<g><ellipse cx="1435.8" cy="720.3" rx="14.7" ry="14.7" fill="#0F8686" fill-opacity="0.9"/>
<ellipse cx="1435.8" cy="720.3" rx="9.1" ry="9.7" fill="none" stroke="#8fcaca" stroke-width="0.7" stroke-opacity="0.4"/>
<ellipse cx="1435.8" cy="720.3" rx="5.9" ry="6.8" fill="none" stroke="#b8dede" stroke-width="0.8" stroke-opacity="0.55"/>
<ellipse cx="1435.8" cy="719.5" rx="1.5" ry="2.9" fill="#d4ecec" stroke="#f4ffff" stroke-width="0.8"/></g>
<g><ellipse cx="1452.9" cy="643.8" rx="4.0" ry="8.0" fill="#0F8686" fill-opacity="0.9"/>
<ellipse cx="1452.9" cy="643.4" rx="1.1" ry="2.0" fill="#d4ecec" stroke="#f4ffff" stroke-width="0.8"/></g>
<g><ellipse cx="1473.4" cy="668.9" rx="3.5" ry="8.0" fill="#0F8686" fill-opacity="0.9"/>
<ellipse cx="1473.4" cy="668.5" rx="1.1" ry="2.0" fill="#d4ecec" stroke="#f4ffff" stroke-width="0.8"/></g>
<g><ellipse cx="1500.0" cy="622.0" rx="16.6" ry="14.7" fill="#0F8686" fill-opacity="0.9"/>
<ellipse cx="1500.0" cy="622.0" rx="10.3" ry="9.7" fill="none" stroke="#8fcaca" stroke-width="0.7" stroke-opacity="0.4"/>
<ellipse cx="1500.0" cy="622.0" rx="6.7" ry="6.8" fill="none" stroke="#b8dede" stroke-width="0.8" stroke-opacity="0.55"/>
<ellipse cx="1500.0" cy="621.3" rx="1.7" ry="2.9" fill="#d4ecec" stroke="#f4ffff" stroke-width="0.8"/></g>
<g><ellipse cx="1240.4" cy="831.3" rx="12.9" ry="15.6" fill="#0F8686" fill-opacity="0.9"/>
<ellipse cx="1240.4" cy="831.3" rx="8.0" ry="10.3" fill="none" stroke="#8fcaca" stroke-width="0.7" stroke-opacity="0.4"/>
<ellipse cx="1240.4" cy="831.3" rx="5.1" ry="7.2" fill="none" stroke="#b8dede" stroke-width="0.8" stroke-opacity="0.55"/>
<ellipse cx="1240.4" cy="830.5" rx="1.3" ry="3.1" fill="#d4ecec" stroke="#f4ffff" stroke-width="0.8"/></g>
<g>
<ellipse cx="1227.8" cy="830.5" rx="4.5" ry="5.5" fill="#0F8686" fill-opacity="0.2"/>
<ellipse cx="1227.8" cy="830.5" rx="4.5" ry="5.5" fill="none" stroke="#0F8686" stroke-width="1.3"/>
<ellipse cx="1227.8" cy="830.5" rx="2.7" ry="3.3" fill="none" stroke="#0F8686" stroke-width="1.3"/>
</g>
<g><ellipse cx="1298.0" cy="851.1" rx="11.3" ry="15.6" fill="#0F8686" fill-opacity="0.9"/>
<ellipse cx="1298.0" cy="851.1" rx="7.0" ry="10.3" fill="none" stroke="#8fcaca" stroke-width="0.7" stroke-opacity="0.4"/>
<ellipse cx="1298.0" cy="851.1" rx="4.5" ry="7.2" fill="none" stroke="#b8dede" stroke-width="0.8" stroke-opacity="0.55"/>
<ellipse cx="1298.0" cy="850.3" rx="1.1" ry="3.1" fill="#d4ecec" stroke="#f4ffff" stroke-width="0.8"/></g>
<g><ellipse cx="1360.7" cy="891.9" rx="12.1" ry="13.9" fill="#0F8686" fill-opacity="0.9"/>
<ellipse cx="1360.7" cy="891.9" rx="7.5" ry="9.2" fill="none" stroke="#8fcaca" stroke-width="0.7" stroke-opacity="0.4"/>
<ellipse cx="1360.7" cy="891.9" rx="4.8" ry="6.4" fill="none" stroke="#b8dede" stroke-width="0.8" stroke-opacity="0.55"/>
<ellipse cx="1360.7" cy="891.2" rx="1.2" ry="2.8" fill="#d4ecec" stroke="#f4ffff" stroke-width="0.8"/></g>
<g><ellipse cx="1237.8" cy="880.7" rx="13.4" ry="18.8" fill="#0F8686" fill-opacity="0.9"/>
<ellipse cx="1237.8" cy="880.7" rx="8.3" ry="12.4" fill="none" stroke="#8fcaca" stroke-width="0.7" stroke-opacity="0.4"/>
<ellipse cx="1237.8" cy="880.7" rx="5.4" ry="8.6" fill="none" stroke="#b8dede" stroke-width="0.8" stroke-opacity="0.55"/>
<ellipse cx="1237.8" cy="879.7" rx="1.3" ry="3.8" fill="#d4ecec" stroke="#f4ffff" stroke-width="0.8"/></g>
<g><ellipse cx="1252.9" cy="898.2" rx="16.1" ry="18.8" fill="#0F8686" fill-opacity="0.9"/>
<ellipse cx="1252.9" cy="898.2" rx="10.0" ry="12.4" fill="none" stroke="#8fcaca" stroke-width="0.7" stroke-opacity="0.4"/>
<ellipse cx="1252.9" cy="898.2" rx="6.4" ry="8.6" fill="none" stroke="#b8dede" stroke-width="0.8" stroke-opacity="0.55"/>
<ellipse cx="1252.9" cy="897.3" rx="1.6" ry="3.8" fill="#d4ecec" stroke="#f4ffff" stroke-width="0.8"/></g>
<g><ellipse cx="1269.2" cy="905.7" rx="13.4" ry="16.1" fill="#0F8686" fill-opacity="0.9"/>
<ellipse cx="1269.2" cy="905.7" rx="8.3" ry="10.6" fill="none" stroke="#8fcaca" stroke-width="0.7" stroke-opacity="0.4"/>
<ellipse cx="1269.2" cy="905.7" rx="5.4" ry="7.4" fill="none" stroke="#b8dede" stroke-width="0.8" stroke-opacity="0.55"/>
<ellipse cx="1269.2" cy="904.9" rx="1.3" ry="3.2" fill="#d4ecec" stroke="#f4ffff" stroke-width="0.8"/></g>
<g><ellipse cx="1235.3" cy="908.2" rx="10.7" ry="16.1" fill="#0F8686" fill-opacity="0.9"/>
<ellipse cx="1235.3" cy="908.2" rx="6.7" ry="10.6" fill="none" stroke="#8fcaca" stroke-width="0.7" stroke-opacity="0.4"/>
<ellipse cx="1235.3" cy="908.2" rx="4.3" ry="7.4" fill="none" stroke="#b8dede" stroke-width="0.8" stroke-opacity="0.55"/>
<ellipse cx="1235.3" cy="907.4" rx="1.1" ry="3.2" fill="#d4ecec" stroke="#f4ffff" stroke-width="0.8"/></g>
<g><ellipse cx="740.0" cy="935.8" rx="4.6" ry="5.3" fill="none" stroke="#0F8686" stroke-width="1.4"/>
</g>
<g><ellipse cx="748.4" cy="935.8" rx="3.8" ry="5.3" fill="none" stroke="#0F8686" stroke-width="1.4"/>
</g>
<g>
<ellipse cx="696.8" cy="912.0" rx="10.5" ry="12.2" fill="#0F8686" fill-opacity="0.2"/>
<ellipse cx="696.8" cy="912.0" rx="10.5" ry="12.2" fill="none" stroke="#0F8686" stroke-width="1.3"/>
<ellipse cx="696.8" cy="912.0" rx="8.6" ry="10.0" fill="none" stroke="#0F8686" stroke-width="1.3"/>
<ellipse cx="696.8" cy="912.0" rx="6.7" ry="7.8" fill="none" stroke="#0F8686" stroke-width="1.3"/>
<ellipse cx="696.8" cy="912.0" rx="4.8" ry="5.6" fill="none" stroke="#0F8686" stroke-width="1.3"/>
<ellipse cx="696.8" cy="912.0" rx="2.9" ry="3.3" fill="none" stroke="#0F8686" stroke-width="1.3"/>
</g>
<g><ellipse cx="701.1" cy="948.4" rx="6.3" ry="12.6" fill="none" stroke="#0F8686" stroke-width="1.4"/>
<ellipse cx="701.1" cy="948.4" rx="3.8" ry="7.6" fill="none" stroke="#0F8686" stroke-width="1.2"/>
</g>
<g><ellipse cx="834.7" cy="958.3" rx="5.3" ry="6.3" fill="none" stroke="#0F8686" stroke-width="1.4"/>
<ellipse cx="834.7" cy="958.3" rx="3.2" ry="3.8" fill="none" stroke="#0F8686" stroke-width="1.2"/>
</g>
<g><ellipse cx="669.1" cy="882.1" rx="2.1" ry="4.2" fill="none" stroke="#0F8686" stroke-width="1.4"/>
</g>
<g>
<ellipse cx="671.6" cy="983.2" rx="8.8" ry="13.1" fill="#0F8686" fill-opacity="0.2"/>
<ellipse cx="671.6" cy="983.2" rx="8.8" ry="13.1" fill="none" stroke="#0F8686" stroke-width="1.3"/>
<ellipse cx="671.6" cy="983.2" rx="6.9" ry="10.2" fill="none" stroke="#0F8686" stroke-width="1.3"/>
<ellipse cx="671.6" cy="983.2" rx="4.9" ry="7.3" fill="none" stroke="#0F8686" stroke-width="1.3"/>
<ellipse cx="671.6" cy="983.2" rx="2.9" ry="4.4" fill="none" stroke="#0F8686" stroke-width="1.3"/>
</g>
<g>
<ellipse cx="809.9" cy="989.1" rx="11.6" ry="12.6" fill="#0F8686" fill-opacity="0.2"/>
<ellipse cx="809.9" cy="989.1" rx="11.6" ry="12.6" fill="none" stroke="#0F8686" stroke-width="1.3"/>
<ellipse cx="809.9" cy="989.1" rx="9.8" ry="10.7" fill="none" stroke="#0F8686" stroke-width="1.3"/>
<ellipse cx="809.9" cy="989.1" rx="8.0" ry="8.7" fill="none" stroke="#0F8686" stroke-width="1.3"/>
<ellipse cx="809.9" cy="989.1" rx="6.2" ry="6.8" fill="none" stroke="#0F8686" stroke-width="1.3"/>
<ellipse cx="809.9" cy="989.1" rx="4.5" ry="4.9" fill="none" stroke="#0F8686" stroke-width="1.3"/>
<ellipse cx="809.9" cy="989.1" rx="2.7" ry="2.9" fill="none" stroke="#0F8686" stroke-width="1.3"/>
</g>
<g>
<ellipse cx="798.9" cy="1016.8" rx="11.6" ry="11.6" fill="#0F8686" fill-opacity="0.2"/>
<ellipse cx="798.9" cy="1016.8" rx="11.6" ry="11.6" fill="none" stroke="#0F8686" stroke-width="1.3"/>
<ellipse cx="798.9" cy="1016.8" rx="9.8" ry="9.8" fill="none" stroke="#0F8686" stroke-width="1.3"/>
<ellipse cx="798.9" cy="1016.8" rx="8.0" ry="8.0" fill="none" stroke="#0F8686" stroke-width="1.3"/>
<ellipse cx="798.9" cy="1016.8" rx="6.2" ry="6.2" fill="none" stroke="#0F8686" stroke-width="1.3"/>
<ellipse cx="798.9" cy="1016.8" rx="4.5" ry="4.5" fill="none" stroke="#0F8686" stroke-width="1.3"/>
<ellipse cx="798.9" cy="1016.8" rx="2.7" ry="2.7" fill="none" stroke="#0F8686" stroke-width="1.3"/>
</g>
<g transform="rotate(-20.0 769.5 1027.4)">
<ellipse cx="769.5" cy="1027.4" rx="12.6" ry="10.5" fill="#0F8686" fill-opacity="0.2"/>
<ellipse cx="769.5" cy="1027.4" rx="12.6" ry="10.5" fill="none" stroke="#0F8686" stroke-width="1.3"/>
<ellipse cx="769.5" cy="1027.4" rx="10.3" ry="8.6" fill="none" stroke="#0F8686" stroke-width="1.3"/>
<ellipse cx="769.5" cy="1027.4" rx="8.0" ry="6.7" fill="none" stroke="#0F8686" stroke-width="1.3"/>
<ellipse cx="769.5" cy="1027.4" rx="5.7" ry="4.8" fill="none" stroke="#0F8686" stroke-width="1.3"/>
<ellipse cx="769.5" cy="1027.4" rx="3.4" ry="2.9" fill="none" stroke="#0F8686" stroke-width="1.3"/>
</g>
<g><ellipse cx="780.0" cy="1022.1" rx="2.5" ry="5.3" fill="none" stroke="#0F8686" stroke-width="1.4"/>
</g>
<g>
<ellipse cx="594.7" cy="1036.8" rx="11.6" ry="7.4" fill="#0F8686" fill-opacity="0.2"/>
<ellipse cx="594.7" cy="1036.8" rx="11.6" ry="7.4" fill="none" stroke="#0F8686" stroke-width="1.3"/>
<ellipse cx="594.7" cy="1036.8" rx="9.0" ry="5.7" fill="none" stroke="#0F8686" stroke-width="1.3"/>
<ellipse cx="594.7" cy="1036.8" rx="6.4" ry="4.1" fill="none" stroke="#0F8686" stroke-width="1.3"/>
<ellipse cx="594.7" cy="1036.8" rx="3.9" ry="2.5" fill="none" stroke="#0F8686" stroke-width="1.3"/>
</g>
<g><ellipse cx="800.0" cy="1049.5" rx="11.3" ry="5.6" fill="#0F8686" fill-opacity="0.9"/>
<ellipse cx="800.0" cy="1049.2" rx="1.1" ry="2.0" fill="#d4ecec" stroke="#f4ffff" stroke-width="0.8"/></g>
<g>
<ellipse cx="903.2" cy="911.6" rx="14.7" ry="12.6" fill="#0F8686" fill-opacity="0.2"/>
<ellipse cx="903.2" cy="911.6" rx="14.7" ry="12.6" fill="none" stroke="#0F8686" stroke-width="1.3"/>
<ellipse cx="903.2" cy="911.6" rx="12.8" ry="10.9" fill="none" stroke="#0F8686" stroke-width="1.3"/>
<ellipse cx="903.2" cy="911.6" rx="10.8" ry="9.3" fill="none" stroke="#0F8686" stroke-width="1.3"/>
<ellipse cx="903.2" cy="911.6" rx="8.8" ry="7.6" fill="none" stroke="#0F8686" stroke-width="1.3"/>
<ellipse cx="903.2" cy="911.6" rx="6.9" ry="5.9" fill="none" stroke="#0F8686" stroke-width="1.3"/>
<ellipse cx="903.2" cy="911.6" rx="4.9" ry="4.2" fill="none" stroke="#0F8686" stroke-width="1.3"/>
<ellipse cx="903.2" cy="911.6" rx="2.9" ry="2.5" fill="none" stroke="#0F8686" stroke-width="1.3"/>
</g>
<g><ellipse cx="948.4" cy="913.7" rx="15.8" ry="16.9" fill="#0F8686" fill-opacity="0.9"/>
<ellipse cx="948.4" cy="913.7" rx="9.8" ry="11.2" fill="none" stroke="#8fcaca" stroke-width="0.7" stroke-opacity="0.4"/>
<ellipse cx="948.4" cy="913.7" rx="6.3" ry="7.8" fill="none" stroke="#b8dede" stroke-width="0.8" stroke-opacity="0.55"/>
<ellipse cx="948.4" cy="912.8" rx="1.6" ry="3.4" fill="#d4ecec" stroke="#f4ffff" stroke-width="0.8"/></g>
<g><ellipse cx="981.1" cy="888.4" rx="13.5" ry="14.6" fill="#0F8686" fill-opacity="0.9"/>
<ellipse cx="981.1" cy="888.4" rx="8.4" ry="9.7" fill="none" stroke="#8fcaca" stroke-width="0.7" stroke-opacity="0.4"/>
<ellipse cx="981.1" cy="888.4" rx="5.4" ry="6.7" fill="none" stroke="#b8dede" stroke-width="0.8" stroke-opacity="0.55"/>
<ellipse cx="981.1" cy="887.7" rx="1.4" ry="2.9" fill="#d4ecec" stroke="#f4ffff" stroke-width="0.8"/></g>
<g><ellipse cx="1012.6" cy="890.5" rx="13.5" ry="15.8" fill="#0F8686" fill-opacity="0.9"/>
<ellipse cx="1012.6" cy="890.5" rx="8.4" ry="10.4" fill="none" stroke="#8fcaca" stroke-width="0.7" stroke-opacity="0.4"/>
<ellipse cx="1012.6" cy="890.5" rx="5.4" ry="7.3" fill="none" stroke="#b8dede" stroke-width="0.8" stroke-opacity="0.55"/>
<ellipse cx="1012.6" cy="889.7" rx="1.4" ry="3.2" fill="#d4ecec" stroke="#f4ffff" stroke-width="0.8"/></g>
<g><ellipse cx="1036.8" cy="886.3" rx="15.8" ry="11.3" fill="#0F8686" fill-opacity="0.9"/>
<ellipse cx="1036.8" cy="886.3" rx="9.8" ry="7.4" fill="none" stroke="#8fcaca" stroke-width="0.7" stroke-opacity="0.4"/>
<ellipse cx="1036.8" cy="886.3" rx="6.3" ry="5.2" fill="none" stroke="#b8dede" stroke-width="0.8" stroke-opacity="0.55"/>
<ellipse cx="1036.8" cy="885.8" rx="1.6" ry="2.3" fill="#d4ecec" stroke="#f4ffff" stroke-width="0.8"/></g>
<g><ellipse cx="997.9" cy="928.4" rx="18.0" ry="22.5" fill="#0F8686" fill-opacity="0.9"/>
<ellipse cx="997.9" cy="928.4" rx="11.2" ry="14.9" fill="none" stroke="#8fcaca" stroke-width="0.7" stroke-opacity="0.4"/>
<ellipse cx="997.9" cy="928.4" rx="7.2" ry="10.4" fill="none" stroke="#b8dede" stroke-width="0.8" stroke-opacity="0.55"/>
<ellipse cx="997.9" cy="927.3" rx="1.8" ry="4.5" fill="#d4ecec" stroke="#f4ffff" stroke-width="0.8"/></g>
<g><ellipse cx="1018.9" cy="941.1" rx="22.5" ry="29.3" fill="#0F8686" fill-opacity="0.9"/>
<ellipse cx="1018.9" cy="941.1" rx="14.0" ry="19.3" fill="none" stroke="#8fcaca" stroke-width="0.7" stroke-opacity="0.4"/>
<ellipse cx="1018.9" cy="941.1" rx="9.0" ry="13.5" fill="none" stroke="#b8dede" stroke-width="0.8" stroke-opacity="0.55"/>
<ellipse cx="1018.9" cy="939.6" rx="2.3" ry="5.9" fill="#d4ecec" stroke="#f4ffff" stroke-width="0.8"/></g>
<g><ellipse cx="1042.1" cy="932.6" rx="15.8" ry="27.0" fill="#0F8686" fill-opacity="0.9"/>
<ellipse cx="1042.1" cy="932.6" rx="9.8" ry="17.8" fill="none" stroke="#8fcaca" stroke-width="0.7" stroke-opacity="0.4"/>
<ellipse cx="1042.1" cy="932.6" rx="6.3" ry="12.4" fill="none" stroke="#b8dede" stroke-width="0.8" stroke-opacity="0.55"/>
<ellipse cx="1042.1" cy="931.3" rx="1.6" ry="5.4" fill="#d4ecec" stroke="#f4ffff" stroke-width="0.8"/></g>
<g><ellipse cx="989.5" cy="949.5" rx="13.5" ry="20.3" fill="#0F8686" fill-opacity="0.9"/>
<ellipse cx="989.5" cy="949.5" rx="8.4" ry="13.4" fill="none" stroke="#8fcaca" stroke-width="0.7" stroke-opacity="0.4"/>
<ellipse cx="989.5" cy="949.5" rx="5.4" ry="9.3" fill="none" stroke="#b8dede" stroke-width="0.8" stroke-opacity="0.55"/>
<ellipse cx="989.5" cy="948.5" rx="1.4" ry="4.1" fill="#d4ecec" stroke="#f4ffff" stroke-width="0.8"/></g>
<g><ellipse cx="1073.7" cy="907.4" rx="13.5" ry="20.3" fill="#0F8686" fill-opacity="0.9"/>
<ellipse cx="1073.7" cy="907.4" rx="8.4" ry="13.4" fill="none" stroke="#8fcaca" stroke-width="0.7" stroke-opacity="0.4"/>
<ellipse cx="1073.7" cy="907.4" rx="5.4" ry="9.3" fill="none" stroke="#b8dede" stroke-width="0.8" stroke-opacity="0.55"/>
<ellipse cx="1073.7" cy="906.4" rx="1.4" ry="4.1" fill="#d4ecec" stroke="#f4ffff" stroke-width="0.8"/></g>
<g><ellipse cx="1104.2" cy="911.6" rx="13.5" ry="15.8" fill="#0F8686" fill-opacity="0.9"/>
<ellipse cx="1104.2" cy="911.6" rx="8.4" ry="10.4" fill="none" stroke="#8fcaca" stroke-width="0.7" stroke-opacity="0.4"/>
<ellipse cx="1104.2" cy="911.6" rx="5.4" ry="7.3" fill="none" stroke="#b8dede" stroke-width="0.8" stroke-opacity="0.55"/>
<ellipse cx="1104.2" cy="910.8" rx="1.4" ry="3.2" fill="#d4ecec" stroke="#f4ffff" stroke-width="0.8"/></g>
<g>
<ellipse cx="1067.4" cy="932.6" rx="10.5" ry="12.6" fill="#0F8686" fill-opacity="0.2"/>
<ellipse cx="1067.4" cy="932.6" rx="10.5" ry="12.6" fill="none" stroke="#0F8686" stroke-width="1.3"/>
<ellipse cx="1067.4" cy="932.6" rx="8.6" ry="10.3" fill="none" stroke="#0F8686" stroke-width="1.3"/>
<ellipse cx="1067.4" cy="932.6" rx="6.7" ry="8.0" fill="none" stroke="#0F8686" stroke-width="1.3"/>
<ellipse cx="1067.4" cy="932.6" rx="4.8" ry="5.7" fill="none" stroke="#0F8686" stroke-width="1.3"/>
<ellipse cx="1067.4" cy="932.6" rx="2.9" ry="3.4" fill="none" stroke="#0F8686" stroke-width="1.3"/>
</g>
<g>
<ellipse cx="1077.9" cy="949.5" rx="12.6" ry="18.9" fill="#0F8686" fill-opacity="0.2"/>
<ellipse cx="1077.9" cy="949.5" rx="12.6" ry="18.9" fill="none" stroke="#0F8686" stroke-width="1.3"/>
<ellipse cx="1077.9" cy="949.5" rx="10.9" ry="16.4" fill="none" stroke="#0F8686" stroke-width="1.3"/>
<ellipse cx="1077.9" cy="949.5" rx="9.3" ry="13.9" fill="none" stroke="#0F8686" stroke-width="1.3"/>
<ellipse cx="1077.9" cy="949.5" rx="7.6" ry="11.4" fill="none" stroke="#0F8686" stroke-width="1.3"/>
<ellipse cx="1077.9" cy="949.5" rx="5.9" ry="8.8" fill="none" stroke="#0F8686" stroke-width="1.3"/>
<ellipse cx="1077.9" cy="949.5" rx="4.2" ry="6.3" fill="none" stroke="#0F8686" stroke-width="1.3"/>
<ellipse cx="1077.9" cy="949.5" rx="2.5" ry="3.8" fill="none" stroke="#0F8686" stroke-width="1.3"/>
</g>
<g><ellipse cx="1095.8" cy="966.3" rx="14.6" ry="15.8" fill="#0F8686" fill-opacity="0.9"/>
<ellipse cx="1095.8" cy="966.3" rx="9.1" ry="10.4" fill="none" stroke="#8fcaca" stroke-width="0.7" stroke-opacity="0.4"/>
<ellipse cx="1095.8" cy="966.3" rx="5.9" ry="7.3" fill="none" stroke="#b8dede" stroke-width="0.8" stroke-opacity="0.55"/>
<ellipse cx="1095.8" cy="965.5" rx="1.5" ry="3.2" fill="#d4ecec" stroke="#f4ffff" stroke-width="0.8"/></g>
<g>
<ellipse cx="1063.2" cy="960.0" rx="10.5" ry="10.5" fill="#0F8686" fill-opacity="0.2"/>
<ellipse cx="1063.2" cy="960.0" rx="10.5" ry="10.5" fill="none" stroke="#0F8686" stroke-width="1.3"/>
<ellipse cx="1063.2" cy="960.0" rx="8.6" ry="8.6" fill="none" stroke="#0F8686" stroke-width="1.3"/>
<ellipse cx="1063.2" cy="960.0" rx="6.7" ry="6.7" fill="none" stroke="#0F8686" stroke-width="1.3"/>
<ellipse cx="1063.2" cy="960.0" rx="4.8" ry="4.8" fill="none" stroke="#0F8686" stroke-width="1.3"/>
<ellipse cx="1063.2" cy="960.0" rx="2.9" ry="2.9" fill="none" stroke="#0F8686" stroke-width="1.3"/>
</g>
<g><ellipse cx="940.0" cy="953.7" rx="12.4" ry="19.1" fill="#0F8686" fill-opacity="0.9"/>
<ellipse cx="940.0" cy="953.7" rx="7.7" ry="12.6" fill="none" stroke="#8fcaca" stroke-width="0.7" stroke-opacity="0.4"/>
<ellipse cx="940.0" cy="953.7" rx="5.0" ry="8.8" fill="none" stroke="#b8dede" stroke-width="0.8" stroke-opacity="0.55"/>
<ellipse cx="940.0" cy="952.7" rx="1.2" ry="3.8" fill="#d4ecec" stroke="#f4ffff" stroke-width="0.8"/></g>
<g><ellipse cx="1134.7" cy="947.4" rx="12.4" ry="18.0" fill="#0F8686" fill-opacity="0.9"/>
<ellipse cx="1134.7" cy="947.4" rx="7.7" ry="11.9" fill="none" stroke="#8fcaca" stroke-width="0.7" stroke-opacity="0.4"/>
<ellipse cx="1134.7" cy="947.4" rx="5.0" ry="8.3" fill="none" stroke="#b8dede" stroke-width="0.8" stroke-opacity="0.55"/>
<ellipse cx="1134.7" cy="946.5" rx="1.2" ry="3.6" fill="#d4ecec" stroke="#f4ffff" stroke-width="0.8"/></g>
<g><ellipse cx="964.2" cy="1000.0" rx="13.5" ry="18.0" fill="#0F8686" fill-opacity="0.9"/>
<ellipse cx="964.2" cy="1000.0" rx="8.4" ry="11.9" fill="none" stroke="#8fcaca" stroke-width="0.7" stroke-opacity="0.4"/>
<ellipse cx="964.2" cy="1000.0" rx="5.4" ry="8.3" fill="none" stroke="#b8dede" stroke-width="0.8" stroke-opacity="0.55"/>
<ellipse cx="964.2" cy="999.1" rx="1.4" ry="3.6" fill="#d4ecec" stroke="#f4ffff" stroke-width="0.8"/></g>
<g><ellipse cx="953.7" cy="1016.8" rx="13.5" ry="13.5" fill="#0F8686" fill-opacity="0.9"/>
<ellipse cx="953.7" cy="1016.8" rx="8.4" ry="8.9" fill="none" stroke="#8fcaca" stroke-width="0.7" stroke-opacity="0.4"/>
<ellipse cx="953.7" cy="1016.8" rx="5.4" ry="6.2" fill="none" stroke="#b8dede" stroke-width="0.8" stroke-opacity="0.55"/>
<ellipse cx="953.7" cy="1016.2" rx="1.4" ry="2.7" fill="#d4ecec" stroke="#f4ffff" stroke-width="0.8"/></g>
<g>
<ellipse cx="970.5" cy="1016.8" rx="10.5" ry="12.6" fill="#0F8686" fill-opacity="0.2"/>
<ellipse cx="970.5" cy="1016.8" rx="10.5" ry="12.6" fill="none" stroke="#0F8686" stroke-width="1.3"/>
<ellipse cx="970.5" cy="1016.8" rx="8.6" ry="10.3" fill="none" stroke="#0F8686" stroke-width="1.3"/>
<ellipse cx="970.5" cy="1016.8" rx="6.7" ry="8.0" fill="none" stroke="#0F8686" stroke-width="1.3"/>
<ellipse cx="970.5" cy="1016.8" rx="4.8" ry="5.7" fill="none" stroke="#0F8686" stroke-width="1.3"/>
<ellipse cx="970.5" cy="1016.8" rx="2.9" ry="3.4" fill="none" stroke="#0F8686" stroke-width="1.3"/>
</g>
<g><ellipse cx="997.9" cy="1014.7" rx="12.4" ry="15.8" fill="#0F8686" fill-opacity="0.9"/>
<ellipse cx="997.9" cy="1014.7" rx="7.7" ry="10.4" fill="none" stroke="#8fcaca" stroke-width="0.7" stroke-opacity="0.4"/>
<ellipse cx="997.9" cy="1014.7" rx="5.0" ry="7.3" fill="none" stroke="#b8dede" stroke-width="0.8" stroke-opacity="0.55"/>
<ellipse cx="997.9" cy="1013.9" rx="1.2" ry="3.2" fill="#d4ecec" stroke="#f4ffff" stroke-width="0.8"/></g>
<g><ellipse cx="1051.6" cy="1006.3" rx="14.6" ry="16.9" fill="#0F8686" fill-opacity="0.9"/>
<ellipse cx="1051.6" cy="1006.3" rx="9.1" ry="11.2" fill="none" stroke="#8fcaca" stroke-width="0.7" stroke-opacity="0.4"/>
<ellipse cx="1051.6" cy="1006.3" rx="5.9" ry="7.8" fill="none" stroke="#b8dede" stroke-width="0.8" stroke-opacity="0.55"/>
<ellipse cx="1051.6" cy="1005.5" rx="1.5" ry="3.4" fill="#d4ecec" stroke="#f4ffff" stroke-width="0.8"/></g>
<g><ellipse cx="1056.8" cy="985.3" rx="4.2" ry="7.4" fill="none" stroke="#0F8686" stroke-width="1.4"/>
</g>
<g><ellipse cx="1102.1" cy="1011.6" rx="11.3" ry="15.8" fill="#0F8686" fill-opacity="0.9"/>
<ellipse cx="1102.1" cy="1011.6" rx="7.0" ry="10.4" fill="none" stroke="#8fcaca" stroke-width="0.7" stroke-opacity="0.4"/>
<ellipse cx="1102.1" cy="1011.6" rx="4.5" ry="7.3" fill="none" stroke="#b8dede" stroke-width="0.8" stroke-opacity="0.55"/>
<ellipse cx="1102.1" cy="1010.8" rx="1.1" ry="3.2" fill="#d4ecec" stroke="#f4ffff" stroke-width="0.8"/></g>
<g>
<ellipse cx="1167.4" cy="1001.1" rx="15.8" ry="12.6" fill="#0F8686" fill-opacity="0.2"/>
<ellipse cx="1167.4" cy="1001.1" rx="15.8" ry="12.6" fill="none" stroke="#0F8686" stroke-width="1.3"/>
<ellipse cx="1167.4" cy="1001.1" rx="13.7" ry="10.9" fill="none" stroke="#0F8686" stroke-width="1.3"/>
<ellipse cx="1167.4" cy="1001.1" rx="11.6" ry="9.3" fill="none" stroke="#0F8686" stroke-width="1.3"/>
<ellipse cx="1167.4" cy="1001.1" rx="9.5" ry="7.6" fill="none" stroke="#0F8686" stroke-width="1.3"/>
<ellipse cx="1167.4" cy="1001.1" rx="7.4" ry="5.9" fill="none" stroke="#0F8686" stroke-width="1.3"/>
<ellipse cx="1167.4" cy="1001.1" rx="5.3" ry="4.2" fill="none" stroke="#0F8686" stroke-width="1.3"/>
<ellipse cx="1167.4" cy="1001.1" rx="3.2" ry="2.5" fill="none" stroke="#0F8686" stroke-width="1.3"/>
</g>
<g>
<ellipse cx="1018.9" cy="983.2" rx="8.4" ry="7.4" fill="#0F8686" fill-opacity="0.2"/>
<ellipse cx="1018.9" cy="983.2" rx="8.4" ry="7.4" fill="none" stroke="#0F8686" stroke-width="1.3"/>
<ellipse cx="1018.9" cy="983.2" rx="6.5" ry="5.7" fill="none" stroke="#0F8686" stroke-width="1.3"/>
<ellipse cx="1018.9" cy="983.2" rx="4.7" ry="4.1" fill="none" stroke="#0F8686" stroke-width="1.3"/>
<ellipse cx="1018.9" cy="983.2" rx="2.8" ry="2.5" fill="none" stroke="#0F8686" stroke-width="1.3"/>
</g>
<g><ellipse cx="996.8" cy="1048.4" rx="11.3" ry="5.6" fill="#0F8686" fill-opacity="0.9"/>
<ellipse cx="996.8" cy="1048.1" rx="1.1" ry="2.0" fill="#d4ecec" stroke="#f4ffff" stroke-width="0.8"/></g>
<g><ellipse cx="1237.9" cy="892.6" rx="12.4" ry="22.5" fill="#0F8686" fill-opacity="0.9"/>
<ellipse cx="1237.9" cy="892.6" rx="7.7" ry="14.9" fill="none" stroke="#8fcaca" stroke-width="0.7" stroke-opacity="0.4"/>
<ellipse cx="1237.9" cy="892.6" rx="5.0" ry="10.4" fill="none" stroke="#b8dede" stroke-width="0.8" stroke-opacity="0.55"/>
<ellipse cx="1237.9" cy="891.5" rx="1.2" ry="4.5" fill="#d4ecec" stroke="#f4ffff" stroke-width="0.8"/></g>
<g><ellipse cx="1254.7" cy="896.8" rx="11.3" ry="13.5" fill="#0F8686" fill-opacity="0.9"/>
<ellipse cx="1254.7" cy="896.8" rx="7.0" ry="8.9" fill="none" stroke="#8fcaca" stroke-width="0.7" stroke-opacity="0.4"/>
<ellipse cx="1254.7" cy="896.8" rx="4.5" ry="6.2" fill="none" stroke="#b8dede" stroke-width="0.8" stroke-opacity="0.55"/>
<ellipse cx="1254.7" cy="896.2" rx="1.1" ry="2.7" fill="#d4ecec" stroke="#f4ffff" stroke-width="0.8"/></g>
<g><ellipse cx="1269.5" cy="907.4" rx="11.3" ry="18.0" fill="#0F8686" fill-opacity="0.9"/>
<ellipse cx="1269.5" cy="907.4" rx="7.0" ry="11.9" fill="none" stroke="#8fcaca" stroke-width="0.7" stroke-opacity="0.4"/>
<ellipse cx="1269.5" cy="907.4" rx="4.5" ry="8.3" fill="none" stroke="#b8dede" stroke-width="0.8" stroke-opacity="0.55"/>
<ellipse cx="1269.5" cy="906.5" rx="1.1" ry="3.6" fill="#d4ecec" stroke="#f4ffff" stroke-width="0.8"/></g>
<g><ellipse cx="1236.8" cy="925.3" rx="11.3" ry="13.5" fill="#0F8686" fill-opacity="0.9"/>
<ellipse cx="1236.8" cy="925.3" rx="7.0" ry="8.9" fill="none" stroke="#8fcaca" stroke-width="0.7" stroke-opacity="0.4"/>
<ellipse cx="1236.8" cy="925.3" rx="4.5" ry="6.2" fill="none" stroke="#b8dede" stroke-width="0.8" stroke-opacity="0.55"/>
<ellipse cx="1236.8" cy="924.6" rx="1.1" ry="2.7" fill="#d4ecec" stroke="#f4ffff" stroke-width="0.8"/></g>
<g><ellipse cx="1276.8" cy="943.2" rx="9.0" ry="11.3" fill="#0F8686" fill-opacity="0.9"/>
<ellipse cx="1276.8" cy="943.2" rx="5.6" ry="7.4" fill="none" stroke="#8fcaca" stroke-width="0.7" stroke-opacity="0.4"/>
<ellipse cx="1276.8" cy="943.2" rx="3.6" ry="5.2" fill="none" stroke="#b8dede" stroke-width="0.8" stroke-opacity="0.55"/>
<ellipse cx="1276.8" cy="942.6" rx="1.1" ry="2.3" fill="#d4ecec" stroke="#f4ffff" stroke-width="0.8"/></g>
<g><ellipse cx="1242.1" cy="983.2" rx="13.5" ry="18.0" fill="#0F8686" fill-opacity="0.9"/>
<ellipse cx="1242.1" cy="983.2" rx="8.4" ry="11.9" fill="none" stroke="#8fcaca" stroke-width="0.7" stroke-opacity="0.4"/>
<ellipse cx="1242.1" cy="983.2" rx="5.4" ry="8.3" fill="none" stroke="#b8dede" stroke-width="0.8" stroke-opacity="0.55"/>
<ellipse cx="1242.1" cy="982.3" rx="1.4" ry="3.6" fill="#d4ecec" stroke="#f4ffff" stroke-width="0.8"/></g>
<g><ellipse cx="1256.8" cy="985.3" rx="11.3" ry="15.8" fill="#0F8686" fill-opacity="0.9"/>
<ellipse cx="1256.8" cy="985.3" rx="7.0" ry="10.4" fill="none" stroke="#8fcaca" stroke-width="0.7" stroke-opacity="0.4"/>
<ellipse cx="1256.8" cy="985.3" rx="4.5" ry="7.3" fill="none" stroke="#b8dede" stroke-width="0.8" stroke-opacity="0.55"/>
<ellipse cx="1256.8" cy="984.5" rx="1.1" ry="3.2" fill="#d4ecec" stroke="#f4ffff" stroke-width="0.8"/></g>
<g><ellipse cx="1269.5" cy="989.5" rx="12.4" ry="16.9" fill="#0F8686" fill-opacity="0.9"/>
<ellipse cx="1269.5" cy="989.5" rx="7.7" ry="11.2" fill="none" stroke="#8fcaca" stroke-width="0.7" stroke-opacity="0.4"/>
<ellipse cx="1269.5" cy="989.5" rx="5.0" ry="7.8" fill="none" stroke="#b8dede" stroke-width="0.8" stroke-opacity="0.55"/>
<ellipse cx="1269.5" cy="988.6" rx="1.2" ry="3.4" fill="#d4ecec" stroke="#f4ffff" stroke-width="0.8"/></g>
<g><ellipse cx="1280.0" cy="943.2" rx="13.5" ry="15.8" fill="#0F8686" fill-opacity="0.9"/>
<ellipse cx="1280.0" cy="943.2" rx="8.4" ry="10.4" fill="none" stroke="#8fcaca" stroke-width="0.7" stroke-opacity="0.4"/>
<ellipse cx="1280.0" cy="943.2" rx="5.4" ry="7.3" fill="none" stroke="#b8dede" stroke-width="0.8" stroke-opacity="0.55"/>
<ellipse cx="1280.0" cy="942.4" rx="1.4" ry="3.2" fill="#d4ecec" stroke="#f4ffff" stroke-width="0.8"/></g>
<g><ellipse cx="1382.1" cy="983.2" rx="12.4" ry="14.6" fill="#0F8686" fill-opacity="0.9"/>
<ellipse cx="1382.1" cy="983.2" rx="7.7" ry="9.7" fill="none" stroke="#8fcaca" stroke-width="0.7" stroke-opacity="0.4"/>
<ellipse cx="1382.1" cy="983.2" rx="5.0" ry="6.7" fill="none" stroke="#b8dede" stroke-width="0.8" stroke-opacity="0.55"/>
<ellipse cx="1382.1" cy="982.4" rx="1.2" ry="2.9" fill="#d4ecec" stroke="#f4ffff" stroke-width="0.8"/></g>
<g><ellipse cx="1582.1" cy="935.8" rx="11.3" ry="14.6" fill="#0F8686" fill-opacity="0.9"/>
<ellipse cx="1582.1" cy="935.8" rx="7.0" ry="9.7" fill="none" stroke="#8fcaca" stroke-width="0.7" stroke-opacity="0.4"/>
<ellipse cx="1582.1" cy="935.8" rx="4.5" ry="6.7" fill="none" stroke="#b8dede" stroke-width="0.8" stroke-opacity="0.55"/>
<ellipse cx="1582.1" cy="935.1" rx="1.1" ry="2.9" fill="#d4ecec" stroke="#f4ffff" stroke-width="0.8"/></g>
<g><ellipse cx="661.2" cy="503.5" rx="7.5" ry="14.7" fill="#0F8686" fill-opacity="0.9"/>
<ellipse cx="661.2" cy="503.5" rx="4.7" ry="9.7" fill="none" stroke="#8fcaca" stroke-width="0.7" stroke-opacity="0.4"/>
<ellipse cx="661.2" cy="503.5" rx="3.0" ry="6.7" fill="none" stroke="#b8dede" stroke-width="0.8" stroke-opacity="0.55"/>
<ellipse cx="661.2" cy="502.7" rx="1.1" ry="2.9" fill="#d4ecec" stroke="#f4ffff" stroke-width="0.8"/></g>
<g><ellipse cx="644.0" cy="504.3" rx="3.0" ry="3.4" fill="#0F8686" fill-opacity="0.9"/>
<ellipse cx="644.0" cy="504.1" rx="1.1" ry="2.0" fill="#d4ecec" stroke="#f4ffff" stroke-width="0.8"/></g>
<g><ellipse cx="641.2" cy="533.5" rx="12.5" ry="17.0" fill="#0F8686" fill-opacity="0.9"/>
<ellipse cx="641.2" cy="533.5" rx="7.8" ry="11.2" fill="none" stroke="#8fcaca" stroke-width="0.7" stroke-opacity="0.4"/>
<ellipse cx="641.2" cy="533.5" rx="5.0" ry="7.8" fill="none" stroke="#b8dede" stroke-width="0.8" stroke-opacity="0.55"/>
<ellipse cx="641.2" cy="532.7" rx="1.3" ry="3.4" fill="#d4ecec" stroke="#f4ffff" stroke-width="0.8"/></g>
<g><ellipse cx="662.0" cy="541.1" rx="11.6" ry="16.1" fill="#0F8686" fill-opacity="0.9"/>
<ellipse cx="662.0" cy="541.1" rx="7.2" ry="10.6" fill="none" stroke="#8fcaca" stroke-width="0.7" stroke-opacity="0.4"/>
<ellipse cx="662.0" cy="541.1" rx="4.6" ry="7.4" fill="none" stroke="#b8dede" stroke-width="0.8" stroke-opacity="0.55"/>
<ellipse cx="662.0" cy="540.2" rx="1.2" ry="3.2" fill="#d4ecec" stroke="#f4ffff" stroke-width="0.8"/></g>
<g><ellipse cx="758.1" cy="541.9" rx="1.6" ry="3.6" fill="#0F8686" fill-opacity="0.9"/>
<ellipse cx="758.1" cy="541.7" rx="1.1" ry="2.0" fill="#d4ecec" stroke="#f4ffff" stroke-width="0.8"/></g>
<g><ellipse cx="530.9" cy="588.7" rx="13.4" ry="17.0" fill="#0F8686" fill-opacity="0.9"/>
<ellipse cx="530.9" cy="588.7" rx="8.3" ry="11.2" fill="none" stroke="#8fcaca" stroke-width="0.7" stroke-opacity="0.4"/>
<ellipse cx="530.9" cy="588.7" rx="5.4" ry="7.8" fill="none" stroke="#b8dede" stroke-width="0.8" stroke-opacity="0.55"/>
<ellipse cx="530.9" cy="587.8" rx="1.3" ry="3.4" fill="#d4ecec" stroke="#f4ffff" stroke-width="0.8"/></g>
<g><ellipse cx="575.5" cy="590.8" rx="5.7" ry="10.4" fill="#0F8686" fill-opacity="0.9"/>
<ellipse cx="575.5" cy="590.3" rx="1.1" ry="2.1" fill="#d4ecec" stroke="#f4ffff" stroke-width="0.8"/></g>
<g><ellipse cx="756.4" cy="585.3" rx="13.9" ry="17.9" fill="#0F8686" fill-opacity="0.9"/>
<ellipse cx="756.4" cy="585.3" rx="8.6" ry="11.8" fill="none" stroke="#8fcaca" stroke-width="0.7" stroke-opacity="0.4"/>
<ellipse cx="756.4" cy="585.3" rx="5.6" ry="8.2" fill="none" stroke="#b8dede" stroke-width="0.8" stroke-opacity="0.55"/>
<ellipse cx="756.4" cy="584.4" rx="1.4" ry="3.6" fill="#d4ecec" stroke="#f4ffff" stroke-width="0.8"/></g>
<g><ellipse cx="782.3" cy="521.8" rx="8.9" ry="12.5" fill="#0F8686" fill-opacity="0.9"/>
<ellipse cx="782.3" cy="521.8" rx="5.5" ry="8.3" fill="none" stroke="#8fcaca" stroke-width="0.7" stroke-opacity="0.4"/>
<ellipse cx="782.3" cy="521.8" rx="3.6" ry="5.8" fill="none" stroke="#b8dede" stroke-width="0.8" stroke-opacity="0.55"/>
<ellipse cx="782.3" cy="521.2" rx="1.1" ry="2.5" fill="#d4ecec" stroke="#f4ffff" stroke-width="0.8"/></g>
<g transform="rotate(5.0 660.9 318.8)"><ellipse cx="660.9" cy="318.8" rx="2.7" ry="5.8" fill="none" stroke="#0F8686" stroke-width="1.4"/>
</g>
<g><ellipse cx="672.9" cy="317.7" rx="6.7" ry="10.9" fill="none" stroke="#0F8686" stroke-width="1.4"/>
<ellipse cx="672.9" cy="317.7" rx="4.0" ry="6.5" fill="none" stroke="#0F8686" stroke-width="1.2"/>
</g>
<g><ellipse cx="670.1" cy="315.2" rx="1.7" ry="3.7" fill="none" stroke="#0F8686" stroke-width="1.4"/>
</g>
<g><ellipse cx="693.8" cy="316.0" rx="8.7" ry="11.4" fill="none" stroke="#0F8686" stroke-width="1.4"/>
<ellipse cx="693.8" cy="316.0" rx="5.2" ry="6.8" fill="none" stroke="#0F8686" stroke-width="1.2"/>
</g>
<g><ellipse cx="728.0" cy="313.8" rx="5.3" ry="6.7" fill="none" stroke="#0F8686" stroke-width="1.4"/>
<ellipse cx="728.0" cy="313.8" rx="3.2" ry="4.0" fill="none" stroke="#0F8686" stroke-width="1.2"/>
</g>
<g><ellipse cx="743.4" cy="313.8" rx="4.2" ry="6.3" fill="none" stroke="#0F8686" stroke-width="1.4"/>
</g>
<g><ellipse cx="816.6" cy="522.2" rx="15.6" ry="17.5" fill="#0F8686" fill-opacity="0.9"/>
<ellipse cx="816.6" cy="522.2" rx="9.7" ry="11.6" fill="none" stroke="#8fcaca" stroke-width="0.7" stroke-opacity="0.4"/>
<ellipse cx="816.6" cy="522.2" rx="6.3" ry="8.1" fill="none" stroke="#b8dede" stroke-width="0.8" stroke-opacity="0.55"/>
<ellipse cx="816.6" cy="521.3" rx="1.6" ry="3.5" fill="#d4ecec" stroke="#f4ffff" stroke-width="0.8"/></g>
<g><ellipse cx="839.9" cy="563.4" rx="17.8" ry="21.0" fill="#0F8686" fill-opacity="0.9"/>
<ellipse cx="839.9" cy="563.4" rx="11.0" ry="13.9" fill="none" stroke="#8fcaca" stroke-width="0.7" stroke-opacity="0.4"/>
<ellipse cx="839.9" cy="563.4" rx="7.1" ry="9.7" fill="none" stroke="#b8dede" stroke-width="0.8" stroke-opacity="0.55"/>
<ellipse cx="839.9" cy="562.4" rx="1.8" ry="4.2" fill="#d4ecec" stroke="#f4ffff" stroke-width="0.8"/></g>
<g><ellipse cx="816.6" cy="586.3" rx="17.8" ry="21.0" fill="#0F8686" fill-opacity="0.9"/>
<ellipse cx="816.6" cy="586.3" rx="11.0" ry="13.9" fill="none" stroke="#8fcaca" stroke-width="0.7" stroke-opacity="0.4"/>
<ellipse cx="816.6" cy="586.3" rx="7.1" ry="9.7" fill="none" stroke="#b8dede" stroke-width="0.8" stroke-opacity="0.55"/>
<ellipse cx="816.6" cy="585.3" rx="1.8" ry="4.2" fill="#d4ecec" stroke="#f4ffff" stroke-width="0.8"/></g>
<g><ellipse cx="889.7" cy="589.6" rx="14.2" ry="15.4" fill="#0F8686" fill-opacity="0.9"/>
<ellipse cx="889.7" cy="589.6" rx="8.8" ry="10.2" fill="none" stroke="#8fcaca" stroke-width="0.7" stroke-opacity="0.4"/>
<ellipse cx="889.7" cy="589.6" rx="5.7" ry="7.1" fill="none" stroke="#b8dede" stroke-width="0.8" stroke-opacity="0.55"/>
<ellipse cx="889.7" cy="588.8" rx="1.4" ry="3.1" fill="#d4ecec" stroke="#f4ffff" stroke-width="0.8"/></g>
<g>
<ellipse cx="912.9" cy="448.9" rx="16.6" ry="16.4" fill="#0F8686" fill-opacity="0.2"/>
<ellipse cx="912.9" cy="448.9" rx="16.6" ry="16.4" fill="none" stroke="#0F8686" stroke-width="1.3"/>
<ellipse cx="912.9" cy="448.9" rx="14.9" ry="14.6" fill="none" stroke="#0F8686" stroke-width="1.3"/>
<ellipse cx="912.9" cy="448.9" rx="13.1" ry="12.9" fill="none" stroke="#0F8686" stroke-width="1.3"/>
<ellipse cx="912.9" cy="448.9" rx="11.4" ry="11.2" fill="none" stroke="#0F8686" stroke-width="1.3"/>
<ellipse cx="912.9" cy="448.9" rx="9.6" ry="9.5" fill="none" stroke="#0F8686" stroke-width="1.3"/>
<ellipse cx="912.9" cy="448.9" rx="7.9" ry="7.7" fill="none" stroke="#0F8686" stroke-width="1.3"/>
<ellipse cx="912.9" cy="448.9" rx="6.1" ry="6.0" fill="none" stroke="#0F8686" stroke-width="1.3"/>
<ellipse cx="912.9" cy="448.9" rx="4.4" ry="4.3" fill="none" stroke="#0F8686" stroke-width="1.3"/>
<ellipse cx="912.9" cy="448.9" rx="2.6" ry="2.6" fill="none" stroke="#0F8686" stroke-width="1.3"/>
</g>
<g><ellipse cx="946.1" cy="452.2" rx="21.3" ry="17.5" fill="#0F8686" fill-opacity="0.9"/>
<ellipse cx="946.1" cy="452.2" rx="13.2" ry="11.6" fill="none" stroke="#8fcaca" stroke-width="0.7" stroke-opacity="0.4"/>
<ellipse cx="946.1" cy="452.2" rx="8.5" ry="8.1" fill="none" stroke="#b8dede" stroke-width="0.8" stroke-opacity="0.55"/>
<ellipse cx="946.1" cy="451.3" rx="2.1" ry="3.5" fill="#d4ecec" stroke="#f4ffff" stroke-width="0.8"/></g>
<g><ellipse cx="979.3" cy="458.7" rx="21.3" ry="17.5" fill="#0F8686" fill-opacity="0.9"/>
<ellipse cx="979.3" cy="458.7" rx="13.2" ry="11.6" fill="none" stroke="#8fcaca" stroke-width="0.7" stroke-opacity="0.4"/>
<ellipse cx="979.3" cy="458.7" rx="8.5" ry="8.1" fill="none" stroke="#b8dede" stroke-width="0.8" stroke-opacity="0.55"/>
<ellipse cx="979.3" cy="457.9" rx="2.1" ry="3.5" fill="#d4ecec" stroke="#f4ffff" stroke-width="0.8"/></g>
<g><ellipse cx="990.6" cy="486.2" rx="12.8" ry="19.6" fill="#0F8686" fill-opacity="0.9"/>
<ellipse cx="990.6" cy="486.2" rx="7.9" ry="12.9" fill="none" stroke="#8fcaca" stroke-width="0.7" stroke-opacity="0.4"/>
<ellipse cx="990.6" cy="486.2" rx="5.1" ry="9.0" fill="none" stroke="#b8dede" stroke-width="0.8" stroke-opacity="0.55"/>
<ellipse cx="990.6" cy="485.2" rx="1.3" ry="3.9" fill="#d4ecec" stroke="#f4ffff" stroke-width="0.8"/></g>
<g><ellipse cx="985.9" cy="530.7" rx="17.8" ry="19.6" fill="#0F8686" fill-opacity="0.9"/>
<ellipse cx="985.9" cy="530.7" rx="11.0" ry="12.9" fill="none" stroke="#8fcaca" stroke-width="0.7" stroke-opacity="0.4"/>
<ellipse cx="985.9" cy="530.7" rx="7.1" ry="9.0" fill="none" stroke="#b8dede" stroke-width="0.8" stroke-opacity="0.55"/>
<ellipse cx="985.9" cy="529.7" rx="1.8" ry="3.9" fill="#d4ecec" stroke="#f4ffff" stroke-width="0.8"/></g>
<g><ellipse cx="1062.3" cy="363.8" rx="15.6" ry="19.6" fill="#0F8686" fill-opacity="0.9"/>
<ellipse cx="1062.3" cy="363.8" rx="9.7" ry="12.9" fill="none" stroke="#8fcaca" stroke-width="0.7" stroke-opacity="0.4"/>
<ellipse cx="1062.3" cy="363.8" rx="6.3" ry="9.0" fill="none" stroke="#b8dede" stroke-width="0.8" stroke-opacity="0.55"/>
<ellipse cx="1062.3" cy="362.9" rx="1.6" ry="3.9" fill="#d4ecec" stroke="#f4ffff" stroke-width="0.8"/></g>
<g><ellipse cx="1064.3" cy="337.7" rx="4.0" ry="7.9" fill="none" stroke="#0F8686" stroke-width="1.4"/>
</g>
<g><ellipse cx="1117.4" cy="285.3" rx="17.8" ry="21.0" fill="#0F8686" fill-opacity="0.9"/>
<ellipse cx="1117.4" cy="285.3" rx="11.0" ry="13.9" fill="none" stroke="#8fcaca" stroke-width="0.7" stroke-opacity="0.4"/>
<ellipse cx="1117.4" cy="285.3" rx="7.1" ry="9.7" fill="none" stroke="#b8dede" stroke-width="0.8" stroke-opacity="0.55"/>
<ellipse cx="1117.4" cy="284.3" rx="1.8" ry="4.2" fill="#d4ecec" stroke="#f4ffff" stroke-width="0.8"/></g>
<g><ellipse cx="1185.1" cy="314.8" rx="15.6" ry="17.5" fill="#0F8686" fill-opacity="0.9"/>
<ellipse cx="1185.1" cy="314.8" rx="9.7" ry="11.6" fill="none" stroke="#8fcaca" stroke-width="0.7" stroke-opacity="0.4"/>
<ellipse cx="1185.1" cy="314.8" rx="6.3" ry="8.1" fill="none" stroke="#b8dede" stroke-width="0.8" stroke-opacity="0.55"/>
<ellipse cx="1185.1" cy="313.9" rx="1.6" ry="3.5" fill="#d4ecec" stroke="#f4ffff" stroke-width="0.8"/></g>
<g><ellipse cx="1161.9" cy="344.2" rx="15.6" ry="17.5" fill="#0F8686" fill-opacity="0.9"/>
<ellipse cx="1161.9" cy="344.2" rx="9.7" ry="11.6" fill="none" stroke="#8fcaca" stroke-width="0.7" stroke-opacity="0.4"/>
<ellipse cx="1161.9" cy="344.2" rx="6.3" ry="8.1" fill="none" stroke="#b8dede" stroke-width="0.8" stroke-opacity="0.55"/>
<ellipse cx="1161.9" cy="343.3" rx="1.6" ry="3.5" fill="#d4ecec" stroke="#f4ffff" stroke-width="0.8"/></g>
<g><ellipse cx="1239.5" cy="329.2" rx="14.2" ry="15.4" fill="#0F8686" fill-opacity="0.9"/>
<ellipse cx="1239.5" cy="329.2" rx="8.8" ry="10.2" fill="none" stroke="#8fcaca" stroke-width="0.7" stroke-opacity="0.4"/>
<ellipse cx="1239.5" cy="329.2" rx="5.7" ry="7.1" fill="none" stroke="#b8dede" stroke-width="0.8" stroke-opacity="0.55"/>
<ellipse cx="1239.5" cy="328.4" rx="1.4" ry="3.1" fill="#d4ecec" stroke="#f4ffff" stroke-width="0.8"/></g>
<g><ellipse cx="1112.1" cy="381.5" rx="21.3" ry="15.4" fill="#0F8686" fill-opacity="0.9"/>
<ellipse cx="1112.1" cy="381.5" rx="13.2" ry="10.2" fill="none" stroke="#8fcaca" stroke-width="0.7" stroke-opacity="0.4"/>
<ellipse cx="1112.1" cy="381.5" rx="8.5" ry="7.1" fill="none" stroke="#b8dede" stroke-width="0.8" stroke-opacity="0.55"/>
<ellipse cx="1112.1" cy="380.7" rx="2.1" ry="3.1" fill="#d4ecec" stroke="#f4ffff" stroke-width="0.8"/></g>
<g><ellipse cx="1178.5" cy="380.2" rx="17.8" ry="17.5" fill="#0F8686" fill-opacity="0.9"/>
<ellipse cx="1178.5" cy="380.2" rx="11.0" ry="11.6" fill="none" stroke="#8fcaca" stroke-width="0.7" stroke-opacity="0.4"/>
<ellipse cx="1178.5" cy="380.2" rx="7.1" ry="8.1" fill="none" stroke="#b8dede" stroke-width="0.8" stroke-opacity="0.55"/>
<ellipse cx="1178.5" cy="379.3" rx="1.8" ry="3.5" fill="#d4ecec" stroke="#f4ffff" stroke-width="0.8"/></g>
<g><ellipse cx="1097.5" cy="549.0" rx="14.2" ry="17.5" fill="#0F8686" fill-opacity="0.9"/>
<ellipse cx="1097.5" cy="549.0" rx="8.8" ry="11.6" fill="none" stroke="#8fcaca" stroke-width="0.7" stroke-opacity="0.4"/>
<ellipse cx="1097.5" cy="549.0" rx="5.7" ry="8.1" fill="none" stroke="#b8dede" stroke-width="0.8" stroke-opacity="0.55"/>
<ellipse cx="1097.5" cy="548.2" rx="1.4" ry="3.5" fill="#d4ecec" stroke="#f4ffff" stroke-width="0.8"/></g>
<g><ellipse cx="1150.6" cy="554.9" rx="14.2" ry="17.5" fill="#0F8686" fill-opacity="0.9"/>
<ellipse cx="1150.6" cy="554.9" rx="8.8" ry="11.6" fill="none" stroke="#8fcaca" stroke-width="0.7" stroke-opacity="0.4"/>
<ellipse cx="1150.6" cy="554.9" rx="5.7" ry="8.1" fill="none" stroke="#b8dede" stroke-width="0.8" stroke-opacity="0.55"/>
<ellipse cx="1150.6" cy="554.0" rx="1.4" ry="3.5" fill="#d4ecec" stroke="#f4ffff" stroke-width="0.8"/></g>
<g><ellipse cx="1201.7" cy="550.3" rx="17.8" ry="15.4" fill="#0F8686" fill-opacity="0.9"/>
<ellipse cx="1201.7" cy="550.3" rx="11.0" ry="10.2" fill="none" stroke="#8fcaca" stroke-width="0.7" stroke-opacity="0.4"/>
<ellipse cx="1201.7" cy="550.3" rx="7.1" ry="7.1" fill="none" stroke="#b8dede" stroke-width="0.8" stroke-opacity="0.55"/>
<ellipse cx="1201.7" cy="549.6" rx="1.8" ry="3.1" fill="#d4ecec" stroke="#f4ffff" stroke-width="0.8"/></g>
<g><ellipse cx="1268.1" cy="549.0" rx="17.8" ry="17.5" fill="#0F8686" fill-opacity="0.9"/>
<ellipse cx="1268.1" cy="549.0" rx="11.0" ry="11.6" fill="none" stroke="#8fcaca" stroke-width="0.7" stroke-opacity="0.4"/>
<ellipse cx="1268.1" cy="549.0" rx="7.1" ry="8.1" fill="none" stroke="#b8dede" stroke-width="0.8" stroke-opacity="0.55"/>
<ellipse cx="1268.1" cy="548.2" rx="1.8" ry="3.5" fill="#d4ecec" stroke="#f4ffff" stroke-width="0.8"/></g>
<g><ellipse cx="1317.9" cy="535.3" rx="14.2" ry="15.4" fill="#0F8686" fill-opacity="0.9"/>
<ellipse cx="1317.9" cy="535.3" rx="8.8" ry="10.2" fill="none" stroke="#8fcaca" stroke-width="0.7" stroke-opacity="0.4"/>
<ellipse cx="1317.9" cy="535.3" rx="5.7" ry="7.1" fill="none" stroke="#b8dede" stroke-width="0.8" stroke-opacity="0.55"/>
<ellipse cx="1317.9" cy="534.5" rx="1.4" ry="3.1" fill="#d4ecec" stroke="#f4ffff" stroke-width="0.8"/></g>
<g transform="rotate(-30.0 1082.2 596.1)">
<ellipse cx="1082.2" cy="596.1" rx="29.9" ry="24.9" fill="#0F8686" fill-opacity="0.2"/>
<ellipse cx="1082.2" cy="596.1" rx="29.9" ry="24.9" fill="none" stroke="#0F8686" stroke-width="1.3"/>
<ellipse cx="1082.2" cy="596.1" rx="27.7" ry="23.0" fill="none" stroke="#0F8686" stroke-width="1.3"/>
<ellipse cx="1082.2" cy="596.1" rx="25.5" ry="21.2" fill="none" stroke="#0F8686" stroke-width="1.3"/>
<ellipse cx="1082.2" cy="596.1" rx="23.2" ry="19.3" fill="none" stroke="#0F8686" stroke-width="1.3"/>
<ellipse cx="1082.2" cy="596.1" rx="21.0" ry="17.5" fill="none" stroke="#0F8686" stroke-width="1.3"/>
<ellipse cx="1082.2" cy="596.1" rx="18.8" ry="15.7" fill="none" stroke="#0F8686" stroke-width="1.3"/>
<ellipse cx="1082.2" cy="596.1" rx="16.6" ry="13.8" fill="none" stroke="#0F8686" stroke-width="1.3"/>
<ellipse cx="1082.2" cy="596.1" rx="14.4" ry="12.0" fill="none" stroke="#0F8686" stroke-width="1.3"/>
<ellipse cx="1082.2" cy="596.1" rx="12.2" ry="10.1" fill="none" stroke="#0F8686" stroke-width="1.3"/>
<ellipse cx="1082.2" cy="596.1" rx="10.0" ry="8.3" fill="none" stroke="#0F8686" stroke-width="1.3"/>
<ellipse cx="1082.2" cy="596.1" rx="7.7" ry="6.4" fill="none" stroke="#0F8686" stroke-width="1.3"/>
<ellipse cx="1082.2" cy="596.1" rx="5.5" ry="4.6" fill="none" stroke="#0F8686" stroke-width="1.3"/>
<ellipse cx="1082.2" cy="596.1" rx="3.3" ry="2.8" fill="none" stroke="#0F8686" stroke-width="1.3"/>
</g>
<g><ellipse cx="1178.5" cy="615.8" rx="14.2" ry="17.5" fill="#0F8686" fill-opacity="0.9"/>
<ellipse cx="1178.5" cy="615.8" rx="8.8" ry="11.6" fill="none" stroke="#8fcaca" stroke-width="0.7" stroke-opacity="0.4"/>
<ellipse cx="1178.5" cy="615.8" rx="5.7" ry="8.1" fill="none" stroke="#b8dede" stroke-width="0.8" stroke-opacity="0.55"/>
<ellipse cx="1178.5" cy="614.9" rx="1.4" ry="3.5" fill="#d4ecec" stroke="#f4ffff" stroke-width="0.8"/></g>
<g>
<ellipse cx="1606.7" cy="433.9" rx="16.6" ry="13.1" fill="#0F8686" fill-opacity="0.2"/>
<ellipse cx="1606.7" cy="433.9" rx="16.6" ry="13.1" fill="none" stroke="#0F8686" stroke-width="1.3"/>
<ellipse cx="1606.7" cy="433.9" rx="14.4" ry="11.3" fill="none" stroke="#0F8686" stroke-width="1.3"/>
<ellipse cx="1606.7" cy="433.9" rx="12.2" ry="9.6" fill="none" stroke="#0F8686" stroke-width="1.3"/>
<ellipse cx="1606.7" cy="433.9" rx="10.0" ry="7.9" fill="none" stroke="#0F8686" stroke-width="1.3"/>
<ellipse cx="1606.7" cy="433.9" rx="7.7" ry="6.1" fill="none" stroke="#0F8686" stroke-width="1.3"/>
<ellipse cx="1606.7" cy="433.9" rx="5.5" ry="4.4" fill="none" stroke="#0F8686" stroke-width="1.3"/>
<ellipse cx="1606.7" cy="433.9" rx="3.3" ry="2.6" fill="none" stroke="#0F8686" stroke-width="1.3"/>
</g>
<circle cx="643.8" cy="553.4" r="2.3" fill="#A01414"/>
</g><g id="plotC">
<rect x="816.6" y="678.8" width="296.4" height="131" fill="#6A6A6A" fill-opacity="0.59"/>
<rect x="713.4" y="857" width="177.6" height="95" fill="#6A6A6A" fill-opacity="0.59"/>
<rect x="976.3" y="905.3" width="80" height="68" fill="#6A6A6A" fill-opacity="0.59"/>
<rect x="784.2" y="624.0" width="16" height="18" fill="#B3E71F" fill-opacity="0.36" stroke="#555" stroke-opacity="0.7" stroke-width="1"/>
<rect x="768.4" y="642.8" width="16" height="18" fill="#1F6FC4" fill-opacity="0.85" stroke="#555" stroke-opacity="0.7" stroke-width="1"/>
<rect x="752.7" y="661.1" width="16" height="18" fill="#B3E71F" fill-opacity="0.36" stroke="#555" stroke-opacity="0.7" stroke-width="1"/>
<rect x="832.4" y="624.0" width="16" height="18" fill="#B3E71F" fill-opacity="0.36" stroke="#555" stroke-opacity="0.7" stroke-width="1"/>
<rect x="848.4" y="624.0" width="16" height="18" fill="#B3E71F" fill-opacity="0.36" stroke="#555" stroke-opacity="0.7" stroke-width="1"/>
<rect x="656.7" y="697.5" width="16" height="18" fill="#B3E71F" fill-opacity="0.36" stroke="#555" stroke-opacity="0.7" stroke-width="1"/>
<rect x="768.4" y="715.8" width="16" height="18" fill="#B3E71F" fill-opacity="0.36" stroke="#555" stroke-opacity="0.7" stroke-width="1"/>
<rect x="784.2" y="770.1" width="16" height="18" fill="#B3E71F" fill-opacity="0.36" stroke="#555" stroke-opacity="0.7" stroke-width="1"/>
<rect x="816.6" y="806.5" width="16" height="18" fill="#B3E71F" fill-opacity="0.36" stroke="#555" stroke-opacity="0.7" stroke-width="1"/>
<rect x="928.1" y="642.8" width="16" height="18" fill="#20D8D8" fill-opacity="0.6" stroke="#555" stroke-opacity="0.7" stroke-width="1"/>
<rect x="928.1" y="661.1" width="16" height="18" fill="#B3E71F" fill-opacity="0.36" stroke="#555" stroke-opacity="0.7" stroke-width="1"/>
<rect x="943.6" y="661.1" width="16" height="18" fill="#F0F01C" fill-opacity="0.36" stroke="#555" stroke-opacity="0.7" stroke-width="1"/>
<rect x="912.3" y="825.3" width="16" height="18" fill="#20D8D8" fill-opacity="0.6" stroke="#555" stroke-opacity="0.7" stroke-width="1"/>
<rect x="959.4" y="825.3" width="16" height="18" fill="#B3E71F" fill-opacity="0.36" stroke="#555" stroke-opacity="0.7" stroke-width="1"/>
<rect x="1040.1" y="806.5" width="16" height="18" fill="#20D8D8" fill-opacity="0.6" stroke="#555" stroke-opacity="0.7" stroke-width="1"/>
<rect x="1071.4" y="806.5" width="16" height="18" fill="#20D8D8" fill-opacity="0.6" stroke="#555" stroke-opacity="0.7" stroke-width="1"/>
<rect x="1055.2" y="825.3" width="16" height="18" fill="#B3E71F" fill-opacity="0.36" stroke="#555" stroke-opacity="0.7" stroke-width="1"/>
<rect x="1087.7" y="825.3" width="16" height="18" fill="#20D8D8" fill-opacity="0.6" stroke="#555" stroke-opacity="0.7" stroke-width="1"/>
<rect x="1135.4" y="715.0" width="16" height="18" fill="#F0F01C" fill-opacity="0.36" stroke="#555" stroke-opacity="0.7" stroke-width="1"/>
<rect x="1151.6" y="715.0" width="16" height="18" fill="#B3E71F" fill-opacity="0.36" stroke="#555" stroke-opacity="0.7" stroke-width="1"/>
<rect x="1119.1" y="733.8" width="16" height="18" fill="#B3E71F" fill-opacity="0.36" stroke="#555" stroke-opacity="0.7" stroke-width="1"/>
<rect x="1183.0" y="770.1" width="16" height="18" fill="#B3E71F" fill-opacity="0.36" stroke="#555" stroke-opacity="0.7" stroke-width="1"/>
<rect x="911.8" y="861.1" width="16" height="18" fill="#B3E71F" fill-opacity="0.36" stroke="#555" stroke-opacity="0.7" stroke-width="1"/>
<rect x="975.0" y="861.1" width="16" height="18" fill="#806868" fill-opacity="0.85" stroke="#555" stroke-opacity="0.7" stroke-width="1"/>
<rect x="975.0" y="879.2" width="16" height="18" fill="#70E070" fill-opacity="0.5" stroke="#555" stroke-opacity="0.7" stroke-width="1"/>
<rect x="1023.8" y="879.2" width="16" height="18" fill="#B3E71F" fill-opacity="0.36" stroke="#555" stroke-opacity="0.7" stroke-width="1"/>
<rect x="1039.6" y="879.2" width="16" height="18" fill="#B3E71F" fill-opacity="0.36" stroke="#555" stroke-opacity="0.7" stroke-width="1"/>
<rect x="1199.0" y="661.1" width="16" height="18" fill="#B3E71F" fill-opacity="0.36" stroke="#555" stroke-opacity="0.7" stroke-width="1"/>
<rect x="1214.8" y="733.8" width="16" height="18" fill="#20D8D8" fill-opacity="0.6" stroke="#555" stroke-opacity="0.7" stroke-width="1"/>
<rect x="1230.3" y="733.8" width="16" height="18" fill="#20D8D8" fill-opacity="0.6" stroke="#555" stroke-opacity="0.7" stroke-width="1"/>
<rect x="1199.0" y="752.1" width="16" height="18" fill="#F0F01C" fill-opacity="0.36" stroke="#555" stroke-opacity="0.7" stroke-width="1"/>
<rect x="1246.6" y="752.1" width="16" height="18" fill="#B3E71F" fill-opacity="0.36" stroke="#555" stroke-opacity="0.7" stroke-width="1"/>
<rect x="1294.5" y="752.1" width="16" height="18" fill="#B3E71F" fill-opacity="0.36" stroke="#555" stroke-opacity="0.7" stroke-width="1"/>
<rect x="1422.1" y="679.2" width="16" height="18" fill="#20D8D8" fill-opacity="0.6" stroke="#555" stroke-opacity="0.7" stroke-width="1"/>
<rect x="1454.2" y="679.2" width="16" height="18" fill="#B3E71F" fill-opacity="0.36" stroke="#555" stroke-opacity="0.7" stroke-width="1"/>
<rect x="1485.5" y="642.8" width="16" height="18" fill="#B3E71F" fill-opacity="0.36" stroke="#555" stroke-opacity="0.7" stroke-width="1"/>
<rect x="1230.3" y="879.2" width="16" height="18" fill="#B3E71F" fill-opacity="0.36" stroke="#555" stroke-opacity="0.7" stroke-width="1"/>
<rect x="1230.3" y="897.2" width="16" height="18" fill="#B3E71F" fill-opacity="0.36" stroke="#555" stroke-opacity="0.7" stroke-width="1"/>
<rect x="1246.6" y="897.2" width="16" height="18" fill="#B3E71F" fill-opacity="0.36" stroke="#555" stroke-opacity="0.7" stroke-width="1"/>
<rect x="959.4" y="916.3" width="16" height="18" fill="#B3E71F" fill-opacity="0.36" stroke="#555" stroke-opacity="0.7" stroke-width="1"/>
<rect x="1087.2" y="916.3" width="16" height="18" fill="#B3E71F" fill-opacity="0.36" stroke="#555" stroke-opacity="0.7" stroke-width="1"/>
<rect x="1055.2" y="952.1" width="16" height="18" fill="#B3E71F" fill-opacity="0.36" stroke="#555" stroke-opacity="0.7" stroke-width="1"/>
<rect x="943.6" y="952.1" width="16" height="18" fill="#F0F01C" fill-opacity="0.36" stroke="#555" stroke-opacity="0.7" stroke-width="1"/>
<rect x="1007.2" y="969.9" width="16" height="18" fill="#60F0D0" fill-opacity="0.45" stroke="#555" stroke-opacity="0.7" stroke-width="1"/>
<rect x="975.6" y="988.9" width="16" height="18" fill="#B3E71F" fill-opacity="0.36" stroke="#555" stroke-opacity="0.7" stroke-width="1"/>
<rect x="1007.4" y="1006.8" width="16" height="18" fill="#F0F01C" fill-opacity="0.36" stroke="#555" stroke-opacity="0.7" stroke-width="1"/>
<rect x="991.4" y="1024.7" width="16" height="18" fill="#60F0D0" fill-opacity="0.45" stroke="#555" stroke-opacity="0.7" stroke-width="1"/>
<rect x="1135.2" y="934.2" width="16" height="18" fill="#B3E71F" fill-opacity="0.36" stroke="#555" stroke-opacity="0.7" stroke-width="1"/>
<rect x="1230.5" y="969.9" width="16" height="18" fill="#B3E71F" fill-opacity="0.36" stroke="#555" stroke-opacity="0.7" stroke-width="1"/>
<rect x="1246.7" y="988.9" width="16" height="18" fill="#60F0D0" fill-opacity="0.45" stroke="#555" stroke-opacity="0.7" stroke-width="1"/>
<rect x="1581.5" y="934.2" width="16" height="18" fill="#B3E71F" fill-opacity="0.36" stroke="#555" stroke-opacity="0.7" stroke-width="1"/>
<rect x="640.7" y="533.4" width="16" height="18" fill="#B3E71F" fill-opacity="0.36" stroke="#555" stroke-opacity="0.7" stroke-width="1"/>
<rect x="656.5" y="533.4" width="16" height="18" fill="#20D8D8" fill-opacity="0.6" stroke="#555" stroke-opacity="0.7" stroke-width="1"/>
<rect x="529.3" y="588.3" width="16" height="18" fill="#B3E71F" fill-opacity="0.36" stroke="#555" stroke-opacity="0.7" stroke-width="1"/>
<rect x="545.5" y="588.3" width="16" height="18" fill="#F0F01C" fill-opacity="0.36" stroke="#555" stroke-opacity="0.7" stroke-width="1"/>
<rect x="752.6" y="588.3" width="16" height="18" fill="#B3E71F" fill-opacity="0.36" stroke="#555" stroke-opacity="0.7" stroke-width="1"/>
<rect x="1134.0" y="367.9" width="16" height="18" fill="#B3E71F" fill-opacity="0.36" stroke="#555" stroke-opacity="0.7" stroke-width="1"/>
<rect x="1102.7" y="387.6" width="16" height="18" fill="#60F0D0" fill-opacity="0.45" stroke="#555" stroke-opacity="0.7" stroke-width="1"/>
<rect x="964.6" y="456.3" width="16" height="18" fill="#B3E71F" fill-opacity="0.36" stroke="#555" stroke-opacity="0.7" stroke-width="1"/>
<rect x="974.6" y="456.3" width="16" height="18" fill="#70E070" fill-opacity="0.5" stroke="#555" stroke-opacity="0.7" stroke-width="1"/>
<rect x="1213.6" y="547.9" width="16" height="18" fill="#B3E71F" fill-opacity="0.36" stroke="#555" stroke-opacity="0.7" stroke-width="1"/>
<rect x="1230.2" y="547.9" width="16" height="18" fill="#B3E71F" fill-opacity="0.36" stroke="#555" stroke-opacity="0.7" stroke-width="1"/>
<rect x="1263.4" y="547.9" width="16" height="18" fill="#B3E71F" fill-opacity="0.36" stroke="#555" stroke-opacity="0.7" stroke-width="1"/>
<rect x="845.1" y="567.5" width="16" height="18" fill="#B3E71F" fill-opacity="0.36" stroke="#555" stroke-opacity="0.7" stroke-width="1"/>
<rect x="815.3" y="583.9" width="16" height="18" fill="#B3E71F" fill-opacity="0.36" stroke="#555" stroke-opacity="0.7" stroke-width="1"/>
<rect x="502" y="247" width="1144" height="10.3" fill="#000" fill-opacity="0.35"/>
<rect x="502" y="257.3" width="10" height="785.7" fill="#000" fill-opacity="0.35"/>
<rect x="502" y="1043" width="1144" height="7.3" fill="#000" fill-opacity="0.35"/>
<rect x="1631" y="257.3" width="6" height="785.7" fill="#000" fill-opacity="0.29"/>
<rect x="1637" y="257.3" width="9.7" height="785.7" fill="#000" fill-opacity="0.38"/>
<line x1="502" y1="1056.5" x2="1647" y2="1056.5" stroke="#111" stroke-width="1.5" />
<path d="M520.5 1056.500v6.5M540.4 1056.500v4M560.4 1056.500v6.5M580.3 1056.500v4M600.2 1056.500v6.5M620.1 1056.500v4M640.0 1056.500v6.5M660.0 1056.500v4M679.9 1056.500v6.5M699.8 1056.500v4M719.8 1056.500v6.5M739.7 1056.500v4M759.6 1056.500v6.5M779.5 1056.500v4M799.5 1056.500v6.5M819.4 1056.500v4M839.3 1056.500v6.5M859.2 1056.500v4M879.2 1056.500v6.5M899.1 1056.500v4M919.0 1056.500v6.5M938.9 1056.500v4M958.9 1056.500v6.5M978.8 1056.500v4M998.7 1056.500v6.5M1018.6 1056.500v4M1038.6 1056.500v6.5M1058.5 1056.500v4M1078.4 1056.500v6.5M1098.3 1056.500v4M1118.2 1056.500v6.5M1138.2 1056.500v4M1158.1 1056.500v6.5M1178.0 1056.500v4M1198.0 1056.500v6.5M1217.9 1056.500v4M1237.8 1056.500v6.5M1257.7 1056.500v4M1277.7 1056.500v6.5M1297.6 1056.500v4M1317.5 1056.500v6.5M1337.4 1056.500v4M1357.3 1056.500v6.5M1377.3 1056.500v4M1397.2 1056.500v6.5M1417.1 1056.500v4M1437.1 1056.500v6.5M1457.0 1056.500v4M1476.9 1056.500v6.5M1496.8 1056.500v4M1516.8 1056.500v6.5M1536.7 1056.500v4M1556.6 1056.500v6.5M1576.5 1056.500v4M1596.5 1056.500v6.5M1616.4 1056.500v4M1636.3 1056.500v6.5" stroke="#111" stroke-width="1.2" fill="none"/>
<text x="520.5" y="1080" font-size="16" fill="#111" text-anchor="middle" textLength="23.5" lengthAdjust="spacingAndGlyphs" >2.1</text>
<text x="560.4" y="1080" font-size="16" fill="#111" text-anchor="middle" textLength="23.5" lengthAdjust="spacingAndGlyphs" >2.0</text>
<text x="600.2" y="1080" font-size="16" fill="#111" text-anchor="middle" textLength="23.5" lengthAdjust="spacingAndGlyphs" >1.9</text>
<text x="640.0" y="1080" font-size="16" fill="#111" text-anchor="middle" textLength="23.5" lengthAdjust="spacingAndGlyphs" >1.8</text>
<text x="679.9" y="1080" font-size="16" fill="#111" text-anchor="middle" textLength="23.5" lengthAdjust="spacingAndGlyphs" >1.7</text>
<text x="719.8" y="1080" font-size="16" fill="#111" text-anchor="middle" textLength="23.5" lengthAdjust="spacingAndGlyphs" >1.6</text>
<text x="759.6" y="1080" font-size="16" fill="#111" text-anchor="middle" textLength="23.5" lengthAdjust="spacingAndGlyphs" >1.5</text>
<text x="799.5" y="1080" font-size="16" fill="#111" text-anchor="middle" textLength="23.5" lengthAdjust="spacingAndGlyphs" >1.4</text>
<text x="839.3" y="1080" font-size="16" fill="#111" text-anchor="middle" textLength="23.5" lengthAdjust="spacingAndGlyphs" >1.3</text>
<text x="879.2" y="1080" font-size="16" fill="#111" text-anchor="middle" textLength="23.5" lengthAdjust="spacingAndGlyphs" >1.2</text>
<text x="919.0" y="1080" font-size="16" fill="#111" text-anchor="middle" textLength="23.5" lengthAdjust="spacingAndGlyphs" >1.1</text>
<text x="958.9" y="1080" font-size="16" fill="#111" text-anchor="middle" textLength="23.5" lengthAdjust="spacingAndGlyphs" >1.0</text>
<text x="998.7" y="1080" font-size="16" fill="#111" text-anchor="middle" textLength="23.5" lengthAdjust="spacingAndGlyphs" >0.9</text>
<text x="1038.6" y="1080" font-size="16" fill="#111" text-anchor="middle" textLength="23.5" lengthAdjust="spacingAndGlyphs" >0.8</text>
<text x="1078.4" y="1080" font-size="16" fill="#111" text-anchor="middle" textLength="23.5" lengthAdjust="spacingAndGlyphs" >0.7</text>
<text x="1118.2" y="1080" font-size="16" fill="#111" text-anchor="middle" textLength="23.5" lengthAdjust="spacingAndGlyphs" >0.6</text>
<text x="1158.1" y="1080" font-size="16" fill="#111" text-anchor="middle" textLength="23.5" lengthAdjust="spacingAndGlyphs" >0.5</text>
<text x="1198.0" y="1080" font-size="16" fill="#111" text-anchor="middle" textLength="23.5" lengthAdjust="spacingAndGlyphs" >0.4</text>
<text x="1237.8" y="1080" font-size="16" fill="#111" text-anchor="middle" textLength="23.5" lengthAdjust="spacingAndGlyphs" >0.3</text>
<text x="1277.7" y="1080" font-size="16" fill="#111" text-anchor="middle" textLength="23.5" lengthAdjust="spacingAndGlyphs" >0.2</text>
<text x="1317.5" y="1080" font-size="16" fill="#111" text-anchor="middle" textLength="23.5" lengthAdjust="spacingAndGlyphs" >0.1</text>
<text x="1357.3" y="1080" font-size="16" fill="#111" text-anchor="middle" textLength="23.5" lengthAdjust="spacingAndGlyphs" >0.0</text>
<text x="1397.2" y="1080" font-size="16" fill="#111" text-anchor="middle" textLength="28.5" lengthAdjust="spacingAndGlyphs" >-0.1</text>
<text x="1437.1" y="1080" font-size="16" fill="#111" text-anchor="middle" textLength="28.5" lengthAdjust="spacingAndGlyphs" >-0.2</text>
<text x="1476.9" y="1080" font-size="16" fill="#111" text-anchor="middle" textLength="28.5" lengthAdjust="spacingAndGlyphs" >-0.3</text>
<text x="1516.8" y="1080" font-size="16" fill="#111" text-anchor="middle" textLength="28.5" lengthAdjust="spacingAndGlyphs" >-0.4</text>
<text x="1556.6" y="1080" font-size="16" fill="#111" text-anchor="middle" textLength="28.5" lengthAdjust="spacingAndGlyphs" >-0.5</text>
<text x="1596.5" y="1080" font-size="16" fill="#111" text-anchor="middle" textLength="28.5" lengthAdjust="spacingAndGlyphs" >-0.6</text>
<text x="1636.3" y="1080" font-size="16" fill="#111" text-anchor="middle" textLength="28.5" lengthAdjust="spacingAndGlyphs" >-0.7</text>
<text x="1074" y="1100" font-size="16" fill="#111" text-anchor="middle" textLength="66" lengthAdjust="spacingAndGlyphs" >1H (ppm)</text>
<line x1="1652.5" y1="247" x2="1652.5" y2="1050" stroke="#111" stroke-width="1.5" />
<path d="M1652.500 261.5h6M1652.500 284.3h4M1652.500 307.1h6M1652.500 329.8h4M1652.500 352.6h6M1652.500 375.4h4M1652.500 398.2h6M1652.500 421.0h4M1652.500 443.7h6M1652.500 466.5h4M1652.500 489.3h6M1652.500 512.1h4M1652.500 534.9h6M1652.500 557.6h4M1652.500 580.4h6M1652.500 603.2h4M1652.500 626.0h6M1652.500 648.8h4M1652.500 671.5h6M1652.500 694.3h4M1652.500 717.1h6M1652.500 739.9h4M1652.500 762.7h6M1652.500 785.4h4M1652.500 808.2h6M1652.500 831.0h4M1652.500 853.8h6M1652.500 876.6h4M1652.500 899.3h6M1652.500 922.1h4M1652.500 944.9h6M1652.500 967.7h4M1652.500 990.5h6M1652.500 1013.2h4M1652.500 1036.0h6" stroke="#111" stroke-width="1.2" fill="none"/>
<text x="1659.7" y="267.3" font-size="16" fill="#111" textLength="17" lengthAdjust="spacingAndGlyphs" >11</text>
<text x="1659.7" y="312.9" font-size="16" fill="#111" textLength="17" lengthAdjust="spacingAndGlyphs" >12</text>
<text x="1659.7" y="358.4" font-size="16" fill="#111" textLength="17" lengthAdjust="spacingAndGlyphs" >13</text>
<text x="1659.7" y="404.0" font-size="16" fill="#111" textLength="17" lengthAdjust="spacingAndGlyphs" >14</text>
<text x="1659.7" y="449.5" font-size="16" fill="#111" textLength="17" lengthAdjust="spacingAndGlyphs" >15</text>
<text x="1659.7" y="495.1" font-size="16" fill="#111" textLength="17" lengthAdjust="spacingAndGlyphs" >16</text>
<text x="1659.7" y="540.7" font-size="16" fill="#111" textLength="17" lengthAdjust="spacingAndGlyphs" >17</text>
<text x="1659.7" y="586.2" font-size="16" fill="#111" textLength="17" lengthAdjust="spacingAndGlyphs" >18</text>
<text x="1659.7" y="631.8" font-size="16" fill="#111" textLength="17" lengthAdjust="spacingAndGlyphs" >19</text>
<text x="1659.7" y="677.3" font-size="16" fill="#111" textLength="17" lengthAdjust="spacingAndGlyphs" >20</text>
<text x="1659.7" y="722.9" font-size="16" fill="#111" textLength="17" lengthAdjust="spacingAndGlyphs" >21</text>
<text x="1659.7" y="768.5" font-size="16" fill="#111" textLength="17" lengthAdjust="spacingAndGlyphs" >22</text>
<text x="1659.7" y="814.0" font-size="16" fill="#111" textLength="17" lengthAdjust="spacingAndGlyphs" >23</text>
<text x="1659.7" y="859.6" font-size="16" fill="#111" textLength="17" lengthAdjust="spacingAndGlyphs" >24</text>
<text x="1659.7" y="905.1" font-size="16" fill="#111" textLength="17" lengthAdjust="spacingAndGlyphs" >25</text>
<text x="1659.7" y="950.7" font-size="16" fill="#111" textLength="17" lengthAdjust="spacingAndGlyphs" >26</text>
<text x="1659.7" y="996.3" font-size="16" fill="#111" textLength="17" lengthAdjust="spacingAndGlyphs" >27</text>
<text x="1659.7" y="1041.8" font-size="16" fill="#111" textLength="17" lengthAdjust="spacingAndGlyphs" >28</text>
<text transform="translate(1725 648) rotate(-90)" font-size="16" fill="#111" text-anchor="middle" textLength="76" lengthAdjust="spacingAndGlyphs">13C (ppm)</text>
</g></defs>
<rect x="40" y="0" width="1820" height="1" fill="#9a9a9a" />
<rect x="40" y="1" width="1820" height="65" fill="#B30F12" />
<clipPath id="hexclip"><rect x="1325" y="1" width="535" height="65"/></clipPath>
<path d="M1309.4 65.8l-30.0 -8.8M1309.4 65.8l7.4 30.4M1309.4 65.8l22.6 -21.6M1346.8 105.0l-30.0 -8.8M1346.8 105.0l7.4 30.4M1346.8 105.0l22.6 -21.6M1287.1 -25.4l-30.0 -8.8M1287.1 -25.4l7.4 30.4M1287.1 -25.4l22.6 -21.6M1324.6 13.8l-30.0 -8.8M1324.6 13.8l7.4 30.4M1324.6 13.8l22.6 -21.6M1362.1 53.0l-30.0 -8.8M1362.1 53.0l7.4 30.4M1362.1 53.0l22.6 -21.6M1399.5 92.2l-30.0 -8.8M1399.5 92.2l7.4 30.4M1399.5 92.2l22.6 -21.6M1339.8 -38.2l-30.0 -8.8M1339.8 -38.2l7.4 30.4M1339.8 -38.2l22.6 -21.6M1377.3 0.9l-30.0 -8.8M1377.3 0.9l7.4 30.4M1377.3 0.9l22.6 -21.6M1414.7 40.1l-30.0 -8.8M1414.7 40.1l7.4 30.4M1414.7 40.1l22.6 -21.6M1452.2 79.3l-30.0 -8.8M1452.2 79.3l7.4 30.4M1452.2 79.3l22.6 -21.6M1429.9 -11.9l-30.0 -8.8M1429.9 -11.9l7.4 30.4M1429.9 -11.9l22.6 -21.6M1467.4 27.3l-30.0 -8.8M1467.4 27.3l7.4 30.4M1467.4 27.3l22.6 -21.6M1504.9 66.5l-30.0 -8.8M1504.9 66.5l7.4 30.4M1504.9 66.5l22.6 -21.6M1542.3 105.7l-30.0 -8.8M1542.3 105.7l7.4 30.4M1542.3 105.7l22.6 -21.6M1482.6 -24.7l-30.0 -8.8M1482.6 -24.7l7.4 30.4M1482.6 -24.7l22.6 -21.6M1520.1 14.5l-30.0 -8.8M1520.1 14.5l7.4 30.4M1520.1 14.5l22.6 -21.6M1557.5 53.7l-30.0 -8.8M1557.5 53.7l7.4 30.4M1557.5 53.7l22.6 -21.6M1595.0 92.8l-30.0 -8.8M1595.0 92.8l7.4 30.4M1595.0 92.8l22.6 -21.6M1535.3 -37.6l-30.0 -8.8M1535.3 -37.6l7.4 30.4M1535.3 -37.6l22.6 -21.6M1572.7 1.6l-30.0 -8.8M1572.7 1.6l7.4 30.4M1572.7 1.6l22.6 -21.6M1610.2 40.8l-30.0 -8.8M1610.2 40.8l7.4 30.4M1610.2 40.8l22.6 -21.6M1647.7 80.0l-30.0 -8.8M1647.7 80.0l7.4 30.4M1647.7 80.0l22.6 -21.6M1625.4 -11.2l-30.0 -8.8M1625.4 -11.2l7.4 30.4M1625.4 -11.2l22.6 -21.6M1662.9 28.0l-30.0 -8.8M1662.9 28.0l7.4 30.4M1662.9 28.0l22.6 -21.6M1700.3 67.2l-30.0 -8.8M1700.3 67.2l7.4 30.4M1700.3 67.2l22.6 -21.6M1737.8 106.4l-30.0 -8.8M1737.8 106.4l7.4 30.4M1737.8 106.4l22.6 -21.6M1678.1 -24.1l-30.0 -8.8M1678.1 -24.1l7.4 30.4M1678.1 -24.1l22.6 -21.6M1715.5 15.1l-30.0 -8.8M1715.5 15.1l7.4 30.4M1715.5 15.1l22.6 -21.6M1753.0 54.3l-30.0 -8.8M1753.0 54.3l7.4 30.4M1753.0 54.3l22.6 -21.6M1790.4 93.5l-30.0 -8.8M1790.4 93.5l7.4 30.4M1790.4 93.5l22.6 -21.6M1730.8 -36.9l-30.0 -8.8M1730.8 -36.9l7.4 30.4M1730.8 -36.9l22.6 -21.6M1768.2 2.3l-30.0 -8.8M1768.2 2.3l7.4 30.4M1768.2 2.3l22.6 -21.6M1805.7 41.5l-30.0 -8.8M1805.7 41.5l7.4 30.4M1805.7 41.5l22.6 -21.6M1843.1 80.7l-30.0 -8.8M1843.1 80.7l7.4 30.4M1843.1 80.7l22.6 -21.6M1820.9 -10.5l-30.0 -8.8M1820.9 -10.5l7.4 30.4M1820.9 -10.5l22.6 -21.6M1858.3 28.7l-30.0 -8.8M1858.3 28.7l7.4 30.4M1858.3 28.7l22.6 -21.6M1895.8 67.8l-30.0 -8.8M1895.8 67.8l7.4 30.4M1895.8 67.8l22.6 -21.6M1873.6 -23.4l-30.0 -8.8M1873.6 -23.4l7.4 30.4M1873.6 -23.4l22.6 -21.6M1911.0 15.8l-30.0 -8.8M1911.0 15.8l7.4 30.4M1911.0 15.8l22.6 -21.6" stroke="#ffffff" stroke-opacity="0.27" stroke-width="1.7" fill="none" clip-path="url(#hexclip)"/>
<polygon points="66.1,24.5 58.7,28.8 51.3,24.5 51.3,15.9 58.7,11.6 66.1,15.9" fill="#B91C26"/>
<path d="M55.7 23.3l0.8-6.6 2.5 3.4 3.4-3.8-0.7 7" fill="none" stroke="#fff" stroke-width="2" stroke-linejoin="miter"/>
<rect x="78.5" y="10.5" width="17" height="17" fill="#1C3F94" stroke="#16306e" stroke-width="1" rx="1" />
<rect x="82" y="11" width="10" height="5.8" fill="#dcdcdc" />
<rect x="83.4" y="11.8" width="2.5" height="4.2" fill="#1C2F6A" />
<rect x="80.5" y="19" width="13.7" height="7.5" fill="#f4f6fb" />
<line x1="81.5" y1="21" x2="93.2" y2="21" stroke="#9fc0f0" stroke-width="1" />
<line x1="81.5" y1="23" x2="93.2" y2="23" stroke="#9fc0f0" stroke-width="1" />
<line x1="81.5" y1="25" x2="93.2" y2="25" stroke="#9fc0f0" stroke-width="1" />
<path d="M106.8 19.5l5.800-4.800 1.100 5.800z" fill="#E8201E" />
<path d="M112.5 17.8c4-1.200 7.500 0.500 7.500 3.500s-3 5-5.800 6.200" fill="none" stroke="#E8201E" stroke-width="2" />
<path d="M146.8 19.5l-2.600-5.300-3.200 5.800z" fill="#B4B4B4" />
<path d="M142.3 17.600c-4-1.200-8 0.500-8 3.300s2.500 5 5.200 6.500" fill="none" stroke="#B4B4B4" stroke-width="2" />
<rect x="164" y="10" width="8.5" height="4.5" fill="#FFFFFF" />
<rect x="162" y="14.2" width="12" height="3.5" fill="#9CC4F8" />
<rect x="159" y="16.5" width="18.5" height="8.2" fill="#D9D9DC" rx="2" />
<rect x="163" y="21.6" width="10" height="6" fill="#F4F4F4" stroke="#c4c4c4" stroke-width="0.6" />
<line x1="165" y1="23.6" x2="171" y2="23.6" stroke="#aaa" stroke-width="1" />
<line x1="165" y1="25.6" x2="171" y2="25.6" stroke="#aaa" stroke-width="1" />
<circle cx="160.8" cy="22.3" r="0.7" fill="#3c3" />
<rect x="184" y="17" width="7" height="1.6" fill="#fff" />
<path d="M184 20.5h7l-3.5 4z" fill="#fff" />
<text x="893.5" y="24.5" font-size="12.5" fill="#fff" textLength="69" lengthAdjust="spacingAndGlyphs" >MestReNova</text>
<rect x="1738" y="18.5" width="8" height="2.5" fill="#fff" />
<rect x="1782.5" y="12.5" width="11" height="10" fill="none" stroke="#fff" stroke-width="1.3" />
<rect x="1782" y="12" width="12" height="2.5" fill="#fff" />
<path d="M1830 12.5l9 9M1839 12.5l-9 9" fill="none" stroke="#fff" stroke-width="1.6" />
<path d="M1692 54.5l4-4 4 4" fill="none" stroke="#fff" stroke-width="2.2" />
<circle cx="1721.5" cy="51" r="9.3" fill="#1E78E6" stroke="#fff" stroke-width="1.4" />
<rect x="1720.2" y="48.5" width="2.8" height="8" fill="#fff" />
<circle cx="1721.6" cy="45.3" r="1.7" fill="#fff" />
<circle cx="1747.5" cy="51" r="9" fill="#B30F12" stroke="#fff" stroke-width="1.1" stroke-opacity="0.85"/>
<circle cx="1747.5" cy="51" r="4.2" fill="none" stroke="#fff" stroke-width="2.4" />
<path d="M1752.3 51.0L1754.5 51.0M1750.9 54.4L1752.4 55.9M1747.5 55.8L1747.5 58.0M1744.1 54.4L1742.6 55.9M1742.7 51.0L1740.5 51.0M1744.1 47.6L1742.6 46.1M1747.5 46.2L1747.5 44.0M1750.9 47.6L1752.4 46.1" fill="none" stroke="#fff" stroke-width="2.2" />
<circle cx="1774" cy="51" r="9" fill="#B30F12" stroke="#fff" stroke-width="1.1" stroke-opacity="0.85"/>
<rect x="1770" y="46" width="6.5" height="9" fill="none" stroke="#fff" stroke-width="1.1" />
<rect x="1772" y="48" width="6.5" height="9" fill="#B30F12" stroke="#fff" stroke-width="1.1" />
<line x1="1773.5" y1="51" x2="1777" y2="51" stroke="#fff" stroke-width="0.9" />
<line x1="1773.5" y1="53" x2="1777" y2="53" stroke="#fff" stroke-width="0.9" />
<text x="1793" y="56.5" font-size="12.5" fill="#fff" textLength="45" lengthAdjust="spacingAndGlyphs" >Options</text>
<path d="M1846 49.5h7.5l-3.75 4z" fill="#fff" />
<text x="62" y="57" font-size="12.5" fill="#fff" textLength="18.5" lengthAdjust="spacingAndGlyphs" >File</text>
<text x="120" y="58" font-size="12.5" fill="#fff" textLength="34" lengthAdjust="spacingAndGlyphs" >Home</text>
<text x="186" y="58" font-size="12.5" fill="#fff" textLength="28" lengthAdjust="spacingAndGlyphs" >View</text>
<text x="246" y="58" font-size="12.5" fill="#fff" textLength="53" lengthAdjust="spacingAndGlyphs" >Molecule</text>
<text x="331" y="58" font-size="12.5" fill="#fff" textLength="58" lengthAdjust="spacingAndGlyphs" >Prediction</text>
<text x="421" y="58" font-size="12.5" fill="#fff" textLength="30.6" lengthAdjust="spacingAndGlyphs" >Tools</text>
<text x="484" y="58" font-size="12.5" fill="#fff" textLength="76.5" lengthAdjust="spacingAndGlyphs" >Data Analysis</text>
<text x="593.4" y="58" font-size="12.5" fill="#fff" textLength="54.0" lengthAdjust="spacingAndGlyphs" >Database</text>
<text x="680" y="58" font-size="12.5" fill="#fff" textLength="64" lengthAdjust="spacingAndGlyphs" >Verification</text>
<text x="776" y="58" font-size="12.5" fill="#fff" textLength="62.7" lengthAdjust="spacingAndGlyphs" >Elucidation</text>
<rect x="855" y="37" width="115" height="29" fill="#F3F3F3" />
<line x1="969.5" y1="37" x2="969.5" y2="66" stroke="#d0d0d0" stroke-width="1" />
<text x="870.5" y="58" font-size="12.5" fill="#8B1A1C" textLength="83" lengthAdjust="spacingAndGlyphs" >Chemometrics</text>
<rect x="970" y="3" width="77" height="7" fill="#EBD90F" />
<rect x="970" y="10" width="77" height="56" fill="#FFFCEC" />
<text x="1010" y="31" font-size="12.5" fill="#9A8A2A" text-anchor="middle" textLength="37" lengthAdjust="spacingAndGlyphs" >STACK</text>
<text x="1008.6" y="58" font-size="12.5" fill="#444" text-anchor="middle" textLength="45" lengthAdjust="spacingAndGlyphs" >Stacked</text>
<rect x="1047" y="3" width="278" height="7" fill="#F77E7E" />
<rect x="1047" y="10" width="278" height="56" fill="#FFECEC" />
<text x="1187.8" y="31" font-size="12.5" fill="#D02A2A" text-anchor="middle" textLength="30" lengthAdjust="spacingAndGlyphs" >NMR</text>
<text x="1094.6" y="58" font-size="12.5" fill="#444" text-anchor="middle" textLength="63" lengthAdjust="spacingAndGlyphs" >Processing</text>
<text x="1180.9" y="58" font-size="12.5" fill="#444" text-anchor="middle" textLength="46" lengthAdjust="spacingAndGlyphs" >Analysis</text>
<text x="1272" y="58" font-size="12.5" fill="#444" text-anchor="middle" textLength="73" lengthAdjust="spacingAndGlyphs" >Assignments</text>
<text x="1340.8" y="58" font-size="12.5" fill="#fff" textLength="71" lengthAdjust="spacingAndGlyphs" >Quantitation</text>
<rect x="40" y="66" width="1820" height="110" fill="#F5F5F5" />
<line x1="42.5" y1="66" x2="42.5" y2="176" stroke="#dcdcdc" stroke-width="1" />
<line x1="42" y1="175.5" x2="1860" y2="175.5" stroke="#dadada" stroke-width="1" />
<rect x="128" y="71" width="75" height="81" fill="#B3B3B3" />
<line x1="206.5" y1="70" x2="206.5" y2="173" stroke="#d2d2d2" stroke-width="1" />
<line x1="366.5" y1="70" x2="366.5" y2="173" stroke="#d2d2d2" stroke-width="1" />
<rect x="72" y="77" width="34" height="34" fill="#fff" stroke="#0A3A7E" stroke-width="2.4" rx="3.5" />
<rect x="72" y="77" width="34" height="5.5" fill="#0A3A7E" />
<path d="M72 81q0-4 4-4h26q4 0 4 4z" fill="#0A3A7E" />
<path d="M95 82h10v8h-10zM84 93h21v18h-21z" fill="#E9E9E9" />
<path d="M105 82v8h-10zM95 93v9h-11zM84 102v9h-11z" fill="#fff" />
<path d="M73 102h11v9h-11z" fill="#fff" />
<line x1="84" y1="82" x2="84" y2="110" stroke="#5a5a5a" stroke-width="1.5" />
<line x1="95" y1="82" x2="95" y2="110" stroke="#5a5a5a" stroke-width="1.5" />
<line x1="73" y1="91.5" x2="105" y2="91.5" stroke="#5a5a5a" stroke-width="1.5" />
<line x1="73" y1="102" x2="105" y2="102" stroke="#5a5a5a" stroke-width="1.5" />
<text x="88.5" y="129.7" font-size="12.5" fill="#333" text-anchor="middle" textLength="26.5" lengthAdjust="spacingAndGlyphs" >Data</text>
<text x="89" y="146.5" font-size="12.5" fill="#333" text-anchor="middle" textLength="67.5" lengthAdjust="spacingAndGlyphs" >Preparation</text>
<rect x="148" y="77" width="34" height="34" fill="#fff" stroke="#0A3A7E" stroke-width="2.4" rx="3.5" />
<rect x="148" y="77" width="34" height="5.5" fill="#0A3A7E" />
<path d="M148 81q0-4 4-4h26q4 0 4 4z" fill="#0A3A7E" />
<path d="M181 82v28h-30z" fill="#EAEAEA" />
<rect x="155" y="86.3" width="5" height="20.2" fill="#1F7AF0" />
<rect x="162.3" y="91.3" width="5.2" height="15.2" fill="#F0B21E" />
<rect x="170" y="96.4" width="5" height="10.1" fill="#E01A1A" />
<text x="165.3" y="129.7" font-size="12.5" fill="#333" text-anchor="middle" textLength="64.5" lengthAdjust="spacingAndGlyphs" >Workspace</text>
<text x="125.8" y="167.3" font-size="12.5" fill="#444" text-anchor="middle" textLength="45" lengthAdjust="spacingAndGlyphs" >General</text>
<rect x="219.3" y="76" width="36" height="36" fill="#fff" stroke="#333" stroke-width="2.6" rx="5.5" />
<path d="M254 78v33h-28z" fill="#E8E8E8" clip-path="inset(0)"/>
<rect x="219.3" y="76" width="36" height="36" fill="none" stroke="#333" stroke-width="2.6" rx="5.5" />
<rect x="222.5" y="79" width="4.6" height="29.5" fill="#1F7AF0" />
<rect x="229.7" y="89" width="4.6" height="19.5" fill="#1F7AF0" />
<rect x="237" y="96.5" width="4.6" height="12" fill="#1C6EDC" />
<rect x="244.6" y="101.5" width="4.6" height="7" fill="#1C6EDC" />
<text x="232" y="91" font-size="17" fill="#1F7AF0" font-weight="bold" textLength="19" lengthAdjust="spacingAndGlyphs" >%</text>
<text x="236.5" y="129.7" font-size="12.5" fill="#222" text-anchor="middle" textLength="23" lengthAdjust="spacingAndGlyphs" >PCA</text>
<rect x="269.3" y="76" width="36" height="36" fill="#fff" stroke="#8a8a8a" stroke-width="2.4" rx="5.5" />
<path d="M304 78v33h-26z" fill="#EDEDED" />
<rect x="269.3" y="76" width="36" height="36" fill="none" stroke="#8a8a8a" stroke-width="2.4" rx="5.5" />
<circle cx="278.5" cy="100" r="2.2" fill="none" stroke="#b5b5b5" stroke-width="1" stroke-opacity="0.9"/>
<circle cx="293.5" cy="84" r="2.2" fill="none" stroke="#b5b5b5" stroke-width="1" stroke-opacity="0.9"/>
<circle cx="278.5" cy="100" r="4.2" fill="none" stroke="#b5b5b5" stroke-width="1" stroke-opacity="0.5"/>
<circle cx="293.5" cy="84" r="4.2" fill="none" stroke="#b5b5b5" stroke-width="1" stroke-opacity="0.5"/>
<circle cx="278.5" cy="100" r="6.2" fill="none" stroke="#b5b5b5" stroke-width="1" stroke-opacity="0.25"/>
<circle cx="293.5" cy="84" r="6.2" fill="none" stroke="#b5b5b5" stroke-width="1" stroke-opacity="0.25"/>
<line x1="292" y1="86" x2="282" y2="96.5" stroke="#999" stroke-width="1.8" />
<path d="M279.5 99.5l6.2-2.2-4-4z" fill="#999" />
<text x="287" y="129.7" font-size="12.5" fill="#9c9c9c" text-anchor="middle" textLength="30.5" lengthAdjust="spacingAndGlyphs" >CCSD</text>
<rect x="319.3" y="76" width="36" height="36" fill="#fff" stroke="#8a8a8a" stroke-width="2.4" rx="5.5" />
<path d="M354 78v33h-26z" fill="#EDEDED" />
<rect x="319.3" y="76" width="36" height="36" fill="none" stroke="#8a8a8a" stroke-width="2.4" rx="5.5" />
<path d="M326 81v24h24" fill="none" stroke="#8a8a8a" stroke-width="2.2" />
<line x1="349" y1="82" x2="333" y2="98.5" stroke="#999" stroke-width="1.8" />
<path d="M330 101.5l6.2-2.2-4-4z" fill="#999" />
<rect x="343.1" y="81.1" width="1.8" height="1.8" fill="#999" />
<rect x="345.1" y="88.6" width="1.8" height="1.8" fill="#999" />
<rect x="342.6" y="93.6" width="1.8" height="1.8" fill="#999" />
<rect x="337.1" y="96.6" width="1.8" height="1.8" fill="#999" />
<rect x="332.6" y="91.6" width="1.8" height="1.8" fill="#999" />
<rect x="329.6" y="95.6" width="1.8" height="1.8" fill="#999" />
<rect x="335.1" y="89.1" width="1.8" height="1.8" fill="#999" />
<text x="337.5" y="129.7" font-size="12.5" fill="#9c9c9c" text-anchor="middle" textLength="40.5" lengthAdjust="spacingAndGlyphs" >ECHOS</text>
<text x="287" y="167.3" font-size="12.5" fill="#444" text-anchor="middle" textLength="82" lengthAdjust="spacingAndGlyphs" >HOS Biologics</text>
<rect x="40" y="176" width="1820" height="990" fill="#F0F0F0" />
<rect x="43" y="177" width="389" height="28" fill="#FFFFFF" />
<text x="47" y="196" font-size="12.5" fill="#444" textLength="34" lengthAdjust="spacingAndGlyphs" >Pages</text>
<rect x="404.5" y="186.5" width="5" height="4.5" fill="none" stroke="#222" stroke-width="1.2" />
<rect x="402" y="189.5" width="5" height="4.5" fill="#fff" stroke="#222" stroke-width="1.2" />
<line x1="404" y1="186.2" x2="410" y2="186.2" stroke="#222" stroke-width="1.6" />
<line x1="401.5" y1="189.4" x2="407.5" y2="189.4" stroke="#222" stroke-width="1.6" />
<path d="M419 186l7.5 7.5M426.5 186l-7.5 7.5" fill="none" stroke="#222" stroke-width="1.6" />
<rect x="42.5" y="205.5" width="389" height="958" fill="#EEEEEE" stroke="#8f97a3" stroke-width="1" />
<rect x="410.5" y="206" width="20.5" height="957" fill="#F1F1F1" />
<line x1="410.5" y1="206" x2="410.5" y2="1163" stroke="#c9c9c9" stroke-width="1" />
<rect x="411" y="206" width="19.5" height="20" fill="#fff" />
<line x1="411" y1="226.5" x2="431" y2="226.5" stroke="#c9c9c9" stroke-width="1" />
<path d="M415.8 218.0h10l-5 -5z" fill="#8a8a8a" />
<rect x="411" y="1142" width="19.5" height="21" fill="#fff" />
<line x1="411" y1="1141.5" x2="431" y2="1141.5" stroke="#c9c9c9" stroke-width="1" />
<path d="M416.3 1150.75h9.0l-4.5 4.5z" fill="#777" />
<rect x="51.5" y="211.5" width="350" height="265.5" fill="#EEEEEE" stroke="#1f3a6b" stroke-width="1.2" />
<text x="58.5" y="230.5" font-size="12" fill="#12295a" font-weight="bold" textLength="10.5" lengthAdjust="spacingAndGlyphs" >1.</text>
<text x="73" y="230.5" font-size="12" fill="#1b3266" textLength="187" lengthAdjust="spacingAndGlyphs" >005-D2A-S-U-900-8495-010-37C</text>
<rect x="58.5" y="234.5" width="336" height="236" fill="#fff" stroke="#9a9a9a" stroke-width="1" />
<clipPath id="thclip"><rect x="59" y="235" width="335" height="235"/></clipPath>
<g clip-path="url(#thclip)"><g transform="translate(-78.46 166.26) scale(0.2735 0.2775)"><use href="#plotA"/><use href="#plotB" opacity="0.72"/><use href="#plotC"/></g></g>
<rect x="436.5" y="179" width="174" height="26" fill="#FFFFFF" stroke="#d4d4d4" stroke-width="1" />
<rect x="437" y="204" width="173" height="2" fill="#FFFFFF" />
<path d="M453.5 182h10l5 5v13.5h-15z" fill="#F6F6F6" stroke="#a8a8a8" stroke-width="1" />
<path d="M463.5 182v5h5" fill="none" stroke="#a8a8a8" stroke-width="1" />
<circle cx="460.5" cy="193" r="5.2" fill="#B1161A" />
<path d="M458.3 195.3v-4.300l2 2.400 2.200-2.600v4.500" fill="none" stroke="#fff" stroke-width="1.3" />
<text x="475.3" y="197" font-size="13" fill="#111" textLength="95.5" lengthAdjust="spacingAndGlyphs" >NIST_PCA3_big*</text>
<path d="M581 188l8.5 8.5M589.5 188l-8.500 8.500" fill="none" stroke="#666" stroke-width="1.3" />
<rect x="436.5" y="206.5" width="1378.5" height="956.5" fill="#F0F0F0" stroke="#a9a9a9" stroke-width="1" />
<rect x="439.5" y="209.5" width="1372" height="951" fill="#EEEEEE" stroke="#8f97a3" stroke-width="1" />
<rect x="489" y="237" width="1269" height="900" fill="#7D7D7D" />
<rect x="480.5" y="226.5" width="1269.5" height="897.5" fill="#FFFFFF" stroke="#c4c4c4" stroke-width="1" />
<rect x="440" y="1139.5" width="1350" height="20.5" fill="#CBCBCB" />
<rect x="440" y="1139.5" width="21.5" height="20.5" fill="#fff" />
<path d="M453.5 1144.7v10l-5 -5z" fill="#707070" />
<rect x="1770" y="1139.5" width="20" height="20.5" fill="#fff" />
<path d="M1777.5 1144.7v10l5 -5z" fill="#707070" />
<rect x="940" y="1139.5" width="350" height="20.5" fill="#F2F2F2" />
<line x1="440" y1="1139" x2="1790" y2="1139" stroke="#bdbdbd" stroke-width="1" />
<rect x="1790.5" y="210" width="20.5" height="886" fill="#CBCBCB" />
<rect x="1790.5" y="210" width="20.5" height="520" fill="#F2F2F2" />
<line x1="1790" y1="210" x2="1790" y2="1160" stroke="#bdbdbd" stroke-width="1" />
<rect x="1790.5" y="1077" width="20.5" height="19" fill="#fff" />
<path d="M1795.7 1084.0h10l-5 5z" fill="#707070" />
<line x1="1790.5" y1="1076.5" x2="1811" y2="1076.5" stroke="#bdbdbd" stroke-width="1" />
<rect x="1790.5" y="1098" width="20.5" height="19" fill="#F3F3F3" stroke="#c6c6c6" stroke-width="1" />
<path d="M1793.5 1100h10l4 4v11h-14z" fill="#F6F6F6" stroke="#bbb" stroke-width="0.8" />
<path d="M1795.5 1110.75h9.0l-4.5 -4.5z" fill="#b4b4b4" />
<rect x="1790.5" y="1119" width="20.5" height="19" fill="#F3F3F3" stroke="#c6c6c6" stroke-width="1" />
<path d="M1793.5 1121h10l4 4v11h-14z" fill="#F6F6F6" stroke="#bbb" stroke-width="0.8" />
<path d="M1795.5 1127.25h9.0l-4.5 4.5z" fill="#b4b4b4" />
<rect x="1790.5" y="1142" width="20.5" height="18" fill="#dfe8f6" stroke="#8aa0c8" stroke-width="1" />
<rect x="1790.5" y="1142" width="20.5" height="2.5" fill="#1F4E9C" />
<rect x="1796.5" y="1145" width="13" height="14" fill="#eaf0fa" />
<rect x="1791.5" y="1146" width="4" height="3" fill="#fff" stroke="#888" stroke-width="0.7" />
<rect x="1791.5" y="1151" width="4" height="3" fill="#fff" stroke="#888" stroke-width="0.7" />
<rect x="1791.5" y="1156" width="4" height="3" fill="#fff" stroke="#888" stroke-width="0.7" />
<rect x="1821.5" y="619.5" width="16" height="16" fill="#fff" stroke="#2d4f94" stroke-width="1" />
<rect x="1827.3" y="625.3" width="4.4" height="4.4" fill="#d01010" />
<rect x="1822.8" y="620.8" width="4.4" height="4.4" fill="#e84010" />
<rect x="1831.8" y="620.8" width="4.4" height="4.4" fill="#f0a010" />
<rect x="1822.8" y="629.8" width="4.4" height="4.4" fill="#f0a010" />
<rect x="1831.8" y="629.8" width="4.4" height="4.4" fill="#e84010" />
<rect x="1827.3" y="620.8" width="4.4" height="4.4" fill="#f0d020" />
<rect x="1827.3" y="629.8" width="4.4" height="4.4" fill="#f0d020" />
<rect x="1822.8" y="625.3" width="4.4" height="4.4" fill="#f0d020" />
<rect x="1831.8" y="625.3" width="4.4" height="4.4" fill="#f0d020" />
<rect x="1827" y="625" width="5" height="5" fill="#c01010" />
<path d="M1845.7 627.0h6l-3 3z" fill="#888" />
<rect x="1826.5" y="644.5" width="12" height="5.5" fill="#fff" stroke="#2d4f94" stroke-width="1" />
<rect x="1820.5" y="650.5" width="6" height="12" fill="#fff" stroke="#2d4f94" stroke-width="1" />
<rect x="1826.5" y="650.5" width="12" height="12" fill="#fbe870" stroke="#2d4f94" stroke-width="1" />
<path d="M1829 656.5h7M1832.500 653v7M1830 654l5 5M1835 654l-5 5" fill="none" stroke="#e03010" stroke-width="1.2" />
<path d="M1828.500 649l1.500-3 1.500 3zM1832 649l1.500-3 1.500 3zM1835.5 649l1.200-3 1.200 3z" fill="#a01010" />
<path d="M1821.500 655l3-1.200v2.400zM1821.500 659l3-1.200v2.400z" fill="#a01010" />
<path d="M1845.7 653.0h6l-3 3z" fill="#888" />
<use href="#plotA"/><use href="#plotB"/><use href="#plotC"/>
<rect x="501.5" y="247" width="1227" height="856" fill="none" stroke="#e4e4e4" stroke-width="1" />
<rect x="496.5" y="242" width="10.5" height="10.5" fill="#00F000" stroke="#30b030" stroke-width="1" />
<rect x="496.5" y="670" width="10.5" height="10.5" fill="#00F000" stroke="#30b030" stroke-width="1" />
<rect x="496.5" y="1098" width="10.5" height="10.5" fill="#00F000" stroke="#30b030" stroke-width="1" />
<rect x="1110" y="1098" width="10.5" height="10.5" fill="#00F000" stroke="#30b030" stroke-width="1" />
<rect x="1723.7" y="1098" width="10.5" height="10.5" fill="#00F000" stroke="#30b030" stroke-width="1" />
<rect x="1723.7" y="670" width="10.5" height="10.5" fill="#00F000" stroke="#30b030" stroke-width="1" />
<rect x="1723.7" y="242" width="10.5" height="10.5" fill="#00F000" stroke="#30b030" stroke-width="1" />
<rect x="1110" y="242" width="10.5" height="10.5" fill="#00F000" stroke="#30b030" stroke-width="1" />
<rect x="40" y="1166" width="1820" height="30" fill="#F4F4F4" />
<line x1="40" y1="1196.5" x2="1860" y2="1196.5" stroke="#b5b5b5" stroke-width="1" />
<text x="1533" y="1184.8" font-size="14" fill="#111" font-weight="bold" textLength="70.5" lengthAdjust="spacingAndGlyphs" >Signature:</text>
<text x="1684.8" y="1184.8" font-size="14" fill="#111" font-weight="bold" textLength="60.5" lengthAdjust="spacingAndGlyphs" >Licenses:</text>
<text x="1782.7" y="1184.8" font-size="14" fill="#111" font-weight="bold" textLength="23.5" lengthAdjust="spacingAndGlyphs" >DB:</text>
<path d="M1616.5 1170.5h11l4 4v13.5h-15z" fill="#F3F3F3" stroke="#9a9a9a" stroke-width="1" />
<line x1="1619" y1="1174.5" x2="1626" y2="1174.5" stroke="#666" stroke-width="1" />
<line x1="1619" y1="1177" x2="1626" y2="1177" stroke="#666" stroke-width="1" />
<line x1="1619" y1="1179.5" x2="1626" y2="1179.5" stroke="#666" stroke-width="1" />
<path d="M1619 1185l2-3 2 3 2-2 3 2" fill="none" stroke="#2456a8" stroke-width="1.2" />
<path d="M1627.5 1169l7 7M1634.5 1169l-7 7" fill="none" stroke="#C4161C" stroke-width="2.6" />
<rect x="1645.5" y="1175.5" width="17" height="12" fill="#F3F3F3" stroke="#9a9a9a" stroke-width="1.2" />
<rect x="1651" y="1170.5" width="6" height="6" fill="#F3F3F3" stroke="#9a9a9a" stroke-width="1.6" rx="1" />
<circle cx="1650.5" cy="1180" r="1.3" fill="#8a8a8a" />
<rect x="1648" y="1182.3" width="5" height="2.5" fill="#8a8a8a" />
<line x1="1655" y1="1180" x2="1660" y2="1180" stroke="#8a8a8a" stroke-width="1" />
<line x1="1655" y1="1183" x2="1660" y2="1183" stroke="#8a8a8a" stroke-width="1" />
<circle cx="1763.8" cy="1179" r="10" fill="#22DD22" />
<path d="M1757.5 1181.5c1.5-5 4-5 6-2s4.5 3 6.5-2.5" fill="none" stroke="#fff" stroke-width="2.6" />
<path d="M1818.5 1171v9.5c0 2 2.5 3.5 6.5 3.5s6.5-1.500 6.5-3.500v-9.500z" fill="#0E3A86" />
<path d="M1818.500 1171a6.500 2.300 0 0 0 13 0a6.500 2.300 0 0 0 -13 0z" fill="#2a5ab0" />
<line x1="1825" y1="1184" x2="1825" y2="1188" stroke="#2a78d8" stroke-width="1.4" />
<line x1="1818" y1="1188.6" x2="1832" y2="1188.6" stroke="#2a78d8" stroke-width="1.4" />
<circle cx="1831" cy="1172.5" r="4.6" fill="#E01A1A" stroke="#fff" stroke-width="0.8" />
<rect x="1828.3" y="1171.6" width="5.4" height="1.9" fill="#fff" />
<rect x="1855.2" y="1182.2" width="1.7" height="1.7" fill="#b0b0b0" />
<rect x="1855.2" y="1186.2" width="1.7" height="1.7" fill="#b0b0b0" />
<rect x="1855.2" y="1190.2" width="1.7" height="1.7" fill="#b0b0b0" />
<rect x="1851.2" y="1186.2" width="1.7" height="1.7" fill="#b0b0b0" />
<rect x="1851.2" y="1190.2" width="1.7" height="1.7" fill="#b0b0b0" />
<rect x="1847.2" y="1190.2" width="1.7" height="1.7" fill="#b0b0b0" />
<rect x="769.5" y="67.5" width="1091" height="561" fill="#000" rx="3" fill-opacity="0.025"/>
<rect x="770.5" y="68.5" width="1089" height="559" fill="#000" rx="3" fill-opacity="0.035"/>
<rect x="771.5" y="69.5" width="1087" height="557" fill="#000" rx="3" fill-opacity="0.05"/>
<rect x="772.5" y="70.5" width="1085" height="555" fill="#000" rx="3" fill-opacity="0.06"/>
<rect x="773.5" y="71.5" width="1083" height="553" fill="#000" rx="3" fill-opacity="0.08"/>
<rect x="774.5" y="72.5" width="1081" height="551" fill="#000" rx="3" fill-opacity="0.1"/>
<rect x="775.5" y="73.5" width="1079" height="549" fill="#000" rx="3" fill-opacity="0.13"/>
<rect x="776.5" y="72.5" width="1077" height="547" fill="#F0F0F0" stroke="#7b7b7b" stroke-width="1" />
<rect x="777" y="73" width="1076" height="37.5" fill="#FFFFFF" />
<polygon points="802.45,94.90 795.70,98.80 788.95,94.90 788.95,87.10 795.70,83.20 802.45,87.10" fill="#B1161A" stroke="#B1161A" stroke-width="2" stroke-linejoin="round"/>
<path d="M791.6 95v-8l4 4.500 4.300-5v8.700" fill="none" stroke="#fff" stroke-width="2.2" />
<text x="811.5" y="96.8" font-size="15" fill="#111" textLength="71" lengthAdjust="spacingAndGlyphs" >Workspace</text>
<line x1="1700" y1="91.5" x2="1713" y2="91.5" stroke="#111" stroke-width="1.1" />
<rect x="1759.5" y="86.5" width="10.5" height="10.5" fill="none" stroke="#111" stroke-width="1.1" />
<path d="M1817 85l12 12M1829 85l-12 12" fill="none" stroke="#111" stroke-width="1.2" />
<text x="788.5" y="131" font-size="15" fill="#111" textLength="45" lengthAdjust="spacingAndGlyphs" >Results</text>
<text x="851.7" y="131" font-size="15" fill="#111" textLength="22" lengthAdjust="spacingAndGlyphs" >File</text>
<text x="891" y="131" font-size="15" fill="#111" textLength="31.5" lengthAdjust="spacingAndGlyphs" >View</text>
<text x="940.5" y="131" font-size="15" fill="#111" textLength="60.5" lengthAdjust="spacingAndGlyphs" >Windows</text>
<text x="789" y="170.5" font-size="12.5" fill="#111" textLength="167.3" lengthAdjust="spacingAndGlyphs" >0-37C 2019-09-02T10:49:39</text>
<path d="M786.5 156.5l3.500 9.500-3.500 9.500" fill="none" stroke="#fff" stroke-width="1.5" />
<path d="M966 161l8.500 8.500M974.5 161l-8.500 8.500" fill="none" stroke="#555" stroke-width="1.2" />
<text x="1011" y="170.5" font-size="12.5" fill="#111" textLength="349" lengthAdjust="spacingAndGlyphs" >PCA: 005-D2A-S-U-900-8495-010-37C 2019-09-02T10:47:59</text>
<path d="M1369.500 161l8.500 8.500M1378 161l-8.500 8.500" fill="none" stroke="#555" stroke-width="1.2" />
<rect x="1399.5" y="152" width="402" height="27" fill="#FFFFFF" stroke="#cfcfcf" stroke-width="1" />
<rect x="1400" y="177" width="401.5" height="2.5" fill="#fff" />
<text x="1414.2" y="169.7" font-size="12.5" fill="#111" textLength="348.8" lengthAdjust="spacingAndGlyphs" >PCA: 005-D2A-S-U-900-8495-010-37C 2019-09-02T10:51:07</text>
<path d="M1772.500 161l8.500 8.500M1781 161l-8.500 8.500" fill="none" stroke="#555" stroke-width="1.2" />
<rect x="1802" y="152" width="19.5" height="26.5" fill="#F4F4F4" stroke="#b9b9b9" stroke-width="1" />
<path d="M1814.25 159.5v11.0l-5.5 -5.5z" fill="#111" />
<rect x="1821.5" y="152" width="19.5" height="26.5" fill="#F4F4F4" stroke="#b9b9b9" stroke-width="1" />
<path d="M1829.25 159.5v11.0l5.5 -5.5z" fill="#9a9a9a" />
<rect x="799.5" y="191.5" width="86" height="404.5" fill="#FFFFFF" stroke="#828790" stroke-width="1" />
<clipPath id="treeclip"><rect x="800" y="192" width="85" height="403"/></clipPath><g clip-path="url(#treeclip)">
<text x="828" y="207.5" font-size="15" fill="#111" >Binning</text>
<path d="M807 200.0l4.500 4.500 4.500-4.500" fill="none" stroke="#333" stroke-width="1.6" />
<text x="853" y="229.5" font-size="15" fill="#111" >Mode</text>
<text x="853" y="251.5" font-size="15" fill="#111" >Bin width</text>
<text x="853" y="273.5" font-size="15" fill="#111" >Bin height</text>
<text x="853" y="295.5" font-size="15" fill="#111" >Method</text>
<text x="853" y="317.5" font-size="15" fill="#111" >Denoising</text>
<text x="828" y="339.5" font-size="15" fill="#111" >Data integral</text>
<text x="828" y="361.5" font-size="15" fill="#9a9a9a" >Filtering</text>
<text x="828" y="383.5" font-size="15" fill="#111" >Normalization</text>
<path d="M807 376.0l4.500 4.500 4.500-4.500" fill="none" stroke="#333" stroke-width="1.6" />
<text x="853" y="405.5" font-size="15" fill="#111" >Method</text>
<text x="828" y="427.5" font-size="15" fill="#111" >Scaling</text>
<path d="M807 420.0l4.500 4.500 4.500-4.500" fill="none" stroke="#333" stroke-width="1.6" />
<text x="853" y="449.5" font-size="15" fill="#111" >Method</text>
<text x="828" y="471.5" font-size="15" fill="#111" >PCA</text>
<path d="M807 464.0l4.500 4.500 4.500-4.500" fill="none" stroke="#333" stroke-width="1.6" />
<text x="853" y="493.5" font-size="15" fill="#111" >Proportion</text>
<text x="853" y="515.5" font-size="15" fill="#111" >Number</text>
</g>
<rect x="800.5" y="576" width="84.5" height="19.5" fill="#F3F3F3" stroke="#a9aeb8" stroke-width="1" />
<rect x="801" y="576.5" width="19" height="18.5" fill="#fff" />
<rect x="865" y="576.5" width="19.5" height="18.5" fill="#fff" />
<rect x="844" y="576.5" width="20.5" height="18.5" fill="#CBCBCB" />
<line x1="820.5" y1="576.5" x2="820.5" y2="595" stroke="#c0c0c0" stroke-width="1" />
<line x1="864.5" y1="576.5" x2="864.5" y2="595" stroke="#c0c0c0" stroke-width="1" />
<path d="M813.5 580.7v10l-5 -5z" fill="#777" />
<path d="M872.0 580.7v10l5 -5z" fill="#777" />
<line x1="886" y1="190.5" x2="1831" y2="190.5" stroke="#a5a5a5" stroke-width="1" />
<line x1="1830.5" y1="190" x2="1830.5" y2="597" stroke="#a5a5a5" stroke-width="1" />
<line x1="886" y1="596.5" x2="1831" y2="596.5" stroke="#a5a5a5" stroke-width="1.5" />
<rect x="1364.5" y="192.5" width="465.5" height="403" fill="#EFEFEF" stroke="#a8a8a8" stroke-width="1" />
<g transform="translate(1367.5 198.5) scale(1.2)">
<path d="M2.5 1v17.500h18.500" fill="none" stroke="#1f4e9c" stroke-width="1.6" />
<line x1="0.5" y1="3.0" x2="2.5" y2="3.0" stroke="#1f4e9c" stroke-width="1" />
<line x1="5.0" y1="18.5" x2="5.0" y2="21" stroke="#1f4e9c" stroke-width="1" />
<line x1="0.5" y1="7.2" x2="2.5" y2="7.2" stroke="#1f4e9c" stroke-width="1" />
<line x1="9.2" y1="18.5" x2="9.2" y2="21" stroke="#1f4e9c" stroke-width="1" />
<line x1="0.5" y1="11.4" x2="2.5" y2="11.4" stroke="#1f4e9c" stroke-width="1" />
<line x1="13.4" y1="18.5" x2="13.4" y2="21" stroke="#1f4e9c" stroke-width="1" />
<line x1="0.5" y1="15.600000000000001" x2="2.5" y2="15.600000000000001" stroke="#1f4e9c" stroke-width="1" />
<line x1="17.6" y1="18.5" x2="17.6" y2="21" stroke="#1f4e9c" stroke-width="1" />
<rect x="5" y="2" width="15" height="15" fill="#fff" />
<rect x="7.3" y="5.3" width="1.4" height="1.4" fill="#30b030" />
<rect x="11.3" y="2.8" width="1.4" height="1.4" fill="#e03030" />
<rect x="15.3" y="4.3" width="1.4" height="1.4" fill="#30b030" />
<rect x="17.3" y="8.3" width="1.4" height="1.4" fill="#30b030" />
<rect x="14.3" y="12.3" width="1.4" height="1.4" fill="#30b030" />
<rect x="9.3" y="13.3" width="1.4" height="1.4" fill="#30b030" />
<rect x="6.3" y="9.3" width="1.4" height="1.4" fill="#30b030" />
<rect x="12.3" y="8.3" width="1.4" height="1.4" fill="#f0c020" />
</g>
<text x="1399.7" y="217" font-size="15" fill="#111" textLength="119" lengthAdjust="spacingAndGlyphs" >PC1-PC2 Loadings</text>
<rect x="1743" y="212.8" width="7.5" height="2" fill="#111" />
<rect x="1774.0" y="206.4" width="7.5" height="7.5" fill="none" stroke="#111" stroke-width="1.3" />
<rect x="1773.4" y="205.8" width="8.7" height="2.2" fill="#111" />
<path d="M1805 205.8l8 8M1813 205.8l-8 8" fill="none" stroke="#111" stroke-width="1.7" />
<rect x="1379.8" y="242.8" width="17.4" height="16.4" fill="#fff" stroke="#1f3f86" stroke-width="1.6" rx="1.5" />
<rect x="1379.8" y="242.8" width="17.4" height="3.2" fill="#1f3f86" />
<line x1="1385.6" y1="246" x2="1385.6" y2="259" stroke="#555" stroke-width="1.1" />
<line x1="1391.3999999999999" y1="246" x2="1391.3999999999999" y2="259" stroke="#555" stroke-width="1.1" />
<line x1="1380" y1="250.4" x2="1397" y2="250.4" stroke="#555" stroke-width="1.1" />
<line x1="1380" y1="254.8" x2="1397" y2="254.8" stroke="#555" stroke-width="1.1" />
<circle cx="1698.5" cy="248" r="4.6" fill="#cfe0f8" stroke="#b9cdea" stroke-width="0.8" />
<path d="M1698.5 243.4a4.600 4.600 0 0 0 0 9.200z" fill="#9dbdf0" />
<line x1="1703" y1="253" x2="1709.5" y2="259.5" stroke="#c8641e" stroke-width="2.2" />
<path d="M1702 245.5h9M1706.5 241v9" fill="none" stroke="#c4161c" stroke-width="2.6" />
<circle cx="1730.5" cy="248" r="4.6" fill="#cfe0f8" stroke="#b9cdea" stroke-width="0.8" />
<path d="M1730.5 243.4a4.600 4.600 0 0 0 0 9.200z" fill="#9dbdf0" />
<line x1="1735" y1="253" x2="1741.5" y2="259.5" stroke="#c8641e" stroke-width="2.2" />
<rect x="1725" y="253" width="2.6" height="2.6" fill="#c4161c" />
<rect x="1730" y="253" width="2.6" height="2.6" fill="#c4161c" />
<rect x="1725" y="258" width="2.6" height="2.6" fill="#c4161c" />
<rect x="1730" y="258" width="2.6" height="2.6" fill="#c4161c" />
<path d="M1769 241.500v8M1769 253v8M1759 251.200h8.300M1770.700 251.200h8.300" fill="none" stroke="#4a6fa5" stroke-width="2" />
<g transform="translate(1793 242.5) scale(0.86)">
<path d="M2.5 1v17.500h18.500" fill="none" stroke="#1f4e9c" stroke-width="1.6" />
<line x1="0.5" y1="3.0" x2="2.5" y2="3.0" stroke="#1f4e9c" stroke-width="1" />
<line x1="5.0" y1="18.5" x2="5.0" y2="21" stroke="#1f4e9c" stroke-width="1" />
<line x1="0.5" y1="7.2" x2="2.5" y2="7.2" stroke="#1f4e9c" stroke-width="1" />
<line x1="9.2" y1="18.5" x2="9.2" y2="21" stroke="#1f4e9c" stroke-width="1" />
<line x1="0.5" y1="11.4" x2="2.5" y2="11.4" stroke="#1f4e9c" stroke-width="1" />
<line x1="13.4" y1="18.5" x2="13.4" y2="21" stroke="#1f4e9c" stroke-width="1" />
<line x1="0.5" y1="15.600000000000001" x2="2.5" y2="15.600000000000001" stroke="#1f4e9c" stroke-width="1" />
<line x1="17.6" y1="18.5" x2="17.6" y2="21" stroke="#1f4e9c" stroke-width="1" />
<rect x="5" y="2" width="15" height="15" fill="#fff" />
<circle cx="10" cy="8" r="3.6" fill="none" stroke="#2a7ae0" stroke-width="1.2" />
<circle cx="10" cy="8" r="1" fill="#2a7ae0" />
<rect x="15.3" y="3.3" width="1.4" height="1.4" fill="#f0c020" />
<rect x="17.3" y="6.3" width="1.4" height="1.4" fill="#f0c020" />
<rect x="15.3" y="11.3" width="1.4" height="1.4" fill="#e03030" />
<rect x="17.3" y="14.3" width="1.4" height="1.4" fill="#e03030" />
<rect x="13.3" y="14.3" width="1.4" height="1.4" fill="#e03030" />
<rect x="16.3" y="8.8" width="1.4" height="1.4" fill="#f0c020" />
</g>
<rect x="1387" y="283" width="419" height="287" fill="#FFFFFF" rx="5" />
<text x="1596.5" y="316" font-size="12" fill="#4a4a4a" text-anchor="middle" textLength="104" lengthAdjust="spacingAndGlyphs" >PC1-PC2 Loadings</text>
<line x1="1465.5" y1="329" x2="1465.5" y2="512" stroke="#dcdcdc" stroke-width="1" />
<text x="1465" y="524.5" font-size="11.5" fill="#3c3c3c" text-anchor="middle" textLength="29.5" lengthAdjust="spacingAndGlyphs" >-0.60</text>
<line x1="1516.5" y1="329" x2="1516.5" y2="512" stroke="#dcdcdc" stroke-width="1" />
<text x="1516" y="524.5" font-size="11.5" fill="#3c3c3c" text-anchor="middle" textLength="29.5" lengthAdjust="spacingAndGlyphs" >-0.40</text>
<line x1="1567.5" y1="329" x2="1567.5" y2="512" stroke="#dcdcdc" stroke-width="1" />
<text x="1567" y="524.5" font-size="11.5" fill="#3c3c3c" text-anchor="middle" textLength="29.5" lengthAdjust="spacingAndGlyphs" >-0.20</text>
<line x1="1617.5" y1="329" x2="1617.5" y2="512" stroke="#dcdcdc" stroke-width="1" />
<text x="1617" y="524.5" font-size="11.5" fill="#3c3c3c" text-anchor="middle" textLength="25.2" lengthAdjust="spacingAndGlyphs" >0.00</text>
<line x1="1668.5" y1="329" x2="1668.5" y2="512" stroke="#dcdcdc" stroke-width="1" />
<text x="1668" y="524.5" font-size="11.5" fill="#3c3c3c" text-anchor="middle" textLength="25.2" lengthAdjust="spacingAndGlyphs" >0.20</text>
<line x1="1719.5" y1="329" x2="1719.5" y2="512" stroke="#dcdcdc" stroke-width="1" />
<text x="1719" y="524.5" font-size="11.5" fill="#3c3c3c" text-anchor="middle" textLength="25.2" lengthAdjust="spacingAndGlyphs" >0.40</text>
<line x1="1770.5" y1="329" x2="1770.5" y2="512" stroke="#dcdcdc" stroke-width="1" />
<text x="1770" y="524.5" font-size="11.5" fill="#3c3c3c" text-anchor="middle" textLength="25.2" lengthAdjust="spacingAndGlyphs" >0.60</text>
<line x1="1461" y1="329.5" x2="1770" y2="329.5" stroke="#dcdcdc" stroke-width="1" />
<text x="1459" y="333.5" font-size="11.5" fill="#3c3c3c" text-anchor="end" textLength="25.2" lengthAdjust="spacingAndGlyphs" >0.40</text>
<line x1="1461" y1="374.5" x2="1770" y2="374.5" stroke="#dcdcdc" stroke-width="1" />
<text x="1459" y="378.5" font-size="11.5" fill="#3c3c3c" text-anchor="end" textLength="25.2" lengthAdjust="spacingAndGlyphs" >0.20</text>
<line x1="1461" y1="418.5" x2="1770" y2="418.5" stroke="#dcdcdc" stroke-width="1" />
<text x="1459" y="422.5" font-size="11.5" fill="#3c3c3c" text-anchor="end" textLength="25.2" lengthAdjust="spacingAndGlyphs" >0.00</text>
<line x1="1461" y1="463.5" x2="1770" y2="463.5" stroke="#dcdcdc" stroke-width="1" />
<text x="1459" y="467.5" font-size="11.5" fill="#3c3c3c" text-anchor="end" textLength="29.5" lengthAdjust="spacingAndGlyphs" >-0.20</text>
<line x1="1461" y1="508.5" x2="1770" y2="508.5" stroke="#dcdcdc" stroke-width="1" />
<text x="1459" y="512.5" font-size="11.5" fill="#3c3c3c" text-anchor="end" textLength="29.5" lengthAdjust="spacingAndGlyphs" >-0.40</text>
<text x="1617" y="545" font-size="12" fill="#333" text-anchor="middle" font-weight="bold" textLength="24" lengthAdjust="spacingAndGlyphs" >PC1</text>
<text transform="translate(1423.5 418) rotate(-90)" font-size="12" font-weight="bold" fill="#333" text-anchor="middle" textLength="24" lengthAdjust="spacingAndGlyphs">PC2</text>
<rect x="893" y="191" width="468" height="403" fill="#EFEFEF" stroke="#8E0A0E" stroke-width="2.2" rx="2" />
<g transform="translate(898 198.5) scale(1.2)">
<path d="M2.5 1v17.500h18.500" fill="none" stroke="#1f4e9c" stroke-width="1.6" />
<line x1="0.5" y1="3.0" x2="2.5" y2="3.0" stroke="#1f4e9c" stroke-width="1" />
<line x1="5.0" y1="18.5" x2="5.0" y2="21" stroke="#1f4e9c" stroke-width="1" />
<line x1="0.5" y1="7.2" x2="2.5" y2="7.2" stroke="#1f4e9c" stroke-width="1" />
<line x1="9.2" y1="18.5" x2="9.2" y2="21" stroke="#1f4e9c" stroke-width="1" />
<line x1="0.5" y1="11.4" x2="2.5" y2="11.4" stroke="#1f4e9c" stroke-width="1" />
<line x1="13.4" y1="18.5" x2="13.4" y2="21" stroke="#1f4e9c" stroke-width="1" />
<line x1="0.5" y1="15.600000000000001" x2="2.5" y2="15.600000000000001" stroke="#1f4e9c" stroke-width="1" />
<line x1="17.6" y1="18.5" x2="17.6" y2="21" stroke="#1f4e9c" stroke-width="1" />
<rect x="5" y="2" width="15" height="15" fill="#fff" />
<circle cx="10" cy="8" r="3.6" fill="none" stroke="#2a7ae0" stroke-width="1.2" />
<circle cx="10" cy="8" r="1" fill="#2a7ae0" />
<rect x="15.3" y="3.3" width="1.4" height="1.4" fill="#f0c020" />
<rect x="17.3" y="6.3" width="1.4" height="1.4" fill="#f0c020" />
<rect x="15.3" y="11.3" width="1.4" height="1.4" fill="#e03030" />
<rect x="17.3" y="14.3" width="1.4" height="1.4" fill="#e03030" />
<rect x="13.3" y="14.3" width="1.4" height="1.4" fill="#e03030" />
<rect x="16.3" y="8.8" width="1.4" height="1.4" fill="#f0c020" />
</g>
<text x="929" y="217" font-size="15" fill="#111" textLength="103.5" lengthAdjust="spacingAndGlyphs" >PC1-PC2 Scores</text>
<rect x="1273.5" y="212.8" width="7.5" height="2" fill="#111" />
<rect x="1304.6" y="206.4" width="7.5" height="7.5" fill="none" stroke="#111" stroke-width="1.3" />
<rect x="1304" y="205.8" width="8.7" height="2.2" fill="#111" />
<path d="M1336 205.8l8 8M1344 205.8l-8 8" fill="none" stroke="#111" stroke-width="1.7" />
<rect x="910.3" y="242.8" width="17.4" height="16.4" fill="#fff" stroke="#1f3f86" stroke-width="1.6" rx="1.5" />
<rect x="910.3" y="242.8" width="17.4" height="3.2" fill="#1f3f86" />
<line x1="916.0999999999999" y1="246" x2="916.0999999999999" y2="259" stroke="#555" stroke-width="1.1" />
<line x1="921.9" y1="246" x2="921.9" y2="259" stroke="#555" stroke-width="1.1" />
<line x1="910.5" y1="250.4" x2="927.5" y2="250.4" stroke="#555" stroke-width="1.1" />
<line x1="910.5" y1="254.8" x2="927.5" y2="254.8" stroke="#555" stroke-width="1.1" />
<circle cx="1229.5" cy="248" r="4.6" fill="#cfe0f8" stroke="#b9cdea" stroke-width="0.8" />
<path d="M1229.5 243.4a4.600 4.600 0 0 0 0 9.200z" fill="#9dbdf0" />
<line x1="1234" y1="253" x2="1240.5" y2="259.5" stroke="#c8641e" stroke-width="2.2" />
<path d="M1233 245.5h9M1237.5 241v9" fill="none" stroke="#c4161c" stroke-width="2.6" />
<circle cx="1261.5" cy="248" r="4.6" fill="#cfe0f8" stroke="#b9cdea" stroke-width="0.8" />
<path d="M1261.5 243.4a4.600 4.600 0 0 0 0 9.200z" fill="#9dbdf0" />
<line x1="1266" y1="253" x2="1272.5" y2="259.5" stroke="#c8641e" stroke-width="2.2" />
<rect x="1256" y="253" width="2.6" height="2.6" fill="#c4161c" />
<rect x="1261" y="253" width="2.6" height="2.6" fill="#c4161c" />
<rect x="1256" y="258" width="2.6" height="2.6" fill="#c4161c" />
<rect x="1261" y="258" width="2.6" height="2.6" fill="#c4161c" />
<path d="M1300 241.500v8M1300 253v8M1290 251.200h8.300M1301.700 251.200h8.300" fill="none" stroke="#4a6fa5" stroke-width="2" />
<g transform="translate(1324 242.5) scale(0.86)">
<path d="M2.5 1v17.500h18.500" fill="none" stroke="#1f4e9c" stroke-width="1.6" />
<line x1="0.5" y1="3.0" x2="2.5" y2="3.0" stroke="#1f4e9c" stroke-width="1" />
<line x1="5.0" y1="18.5" x2="5.0" y2="21" stroke="#1f4e9c" stroke-width="1" />
<line x1="0.5" y1="7.2" x2="2.5" y2="7.2" stroke="#1f4e9c" stroke-width="1" />
<line x1="9.2" y1="18.5" x2="9.2" y2="21" stroke="#1f4e9c" stroke-width="1" />
<line x1="0.5" y1="11.4" x2="2.5" y2="11.4" stroke="#1f4e9c" stroke-width="1" />
<line x1="13.4" y1="18.5" x2="13.4" y2="21" stroke="#1f4e9c" stroke-width="1" />
<line x1="0.5" y1="15.600000000000001" x2="2.5" y2="15.600000000000001" stroke="#1f4e9c" stroke-width="1" />
<line x1="17.6" y1="18.5" x2="17.6" y2="21" stroke="#1f4e9c" stroke-width="1" />
<rect x="5" y="2" width="15" height="15" fill="#fff" />
<rect x="7.3" y="5.3" width="1.4" height="1.4" fill="#30b030" />
<rect x="11.3" y="2.8" width="1.4" height="1.4" fill="#e03030" />
<rect x="15.3" y="4.3" width="1.4" height="1.4" fill="#30b030" />
<rect x="17.3" y="8.3" width="1.4" height="1.4" fill="#30b030" />
<rect x="14.3" y="12.3" width="1.4" height="1.4" fill="#30b030" />
<rect x="9.3" y="13.3" width="1.4" height="1.4" fill="#30b030" />
<rect x="6.3" y="9.3" width="1.4" height="1.4" fill="#30b030" />
<rect x="12.3" y="8.3" width="1.4" height="1.4" fill="#f0c020" />
</g>
<rect x="917" y="283" width="420" height="287" fill="#FFFFFF" rx="5" />
<text x="1127" y="316" font-size="12" fill="#4a4a4a" text-anchor="middle" textLength="93" lengthAdjust="spacingAndGlyphs" >PC1-PC2 Scores</text>
<line x1="1002.5" y1="329" x2="1002.5" y2="512" stroke="#dcdcdc" stroke-width="1" />
<text x="1002" y="524.5" font-size="11.5" fill="#3c3c3c" text-anchor="middle" textLength="35.8" lengthAdjust="spacingAndGlyphs" >-0.040</text>
<line x1="1076.5" y1="329" x2="1076.5" y2="512" stroke="#dcdcdc" stroke-width="1" />
<text x="1076" y="524.5" font-size="11.5" fill="#3c3c3c" text-anchor="middle" textLength="35.8" lengthAdjust="spacingAndGlyphs" >-0.020</text>
<line x1="1150.5" y1="329" x2="1150.5" y2="512" stroke="#dcdcdc" stroke-width="1" />
<text x="1150" y="524.5" font-size="11.5" fill="#3c3c3c" text-anchor="middle" textLength="31.5" lengthAdjust="spacingAndGlyphs" >0.000</text>
<line x1="1224.5" y1="329" x2="1224.5" y2="512" stroke="#dcdcdc" stroke-width="1" />
<text x="1224" y="524.5" font-size="11.5" fill="#3c3c3c" text-anchor="middle" textLength="31.5" lengthAdjust="spacingAndGlyphs" >0.020</text>
<line x1="1298.5" y1="329" x2="1298.5" y2="512" stroke="#dcdcdc" stroke-width="1" />
<text x="1298" y="524.5" font-size="11.5" fill="#3c3c3c" text-anchor="middle" textLength="31.5" lengthAdjust="spacingAndGlyphs" >0.040</text>
<line x1="998" y1="329.5" x2="1298" y2="329.5" stroke="#dcdcdc" stroke-width="1" />
<text x="996" y="333.5" font-size="11.5" fill="#3c3c3c" text-anchor="end" textLength="31.5" lengthAdjust="spacingAndGlyphs" >0.030</text>
<line x1="998" y1="359.5" x2="1298" y2="359.5" stroke="#dcdcdc" stroke-width="1" />
<text x="996" y="363.5" font-size="11.5" fill="#3c3c3c" text-anchor="end" textLength="31.5" lengthAdjust="spacingAndGlyphs" >0.020</text>
<line x1="998" y1="389.5" x2="1298" y2="389.5" stroke="#dcdcdc" stroke-width="1" />
<text x="996" y="393.5" font-size="11.5" fill="#3c3c3c" text-anchor="end" textLength="31.5" lengthAdjust="spacingAndGlyphs" >0.010</text>
<line x1="998" y1="418.5" x2="1298" y2="418.5" stroke="#dcdcdc" stroke-width="1" />
<text x="996" y="422.5" font-size="11.5" fill="#3c3c3c" text-anchor="end" textLength="31.5" lengthAdjust="spacingAndGlyphs" >0.000</text>
<line x1="998" y1="448.5" x2="1298" y2="448.5" stroke="#dcdcdc" stroke-width="1" />
<text x="996" y="452.5" font-size="11.5" fill="#3c3c3c" text-anchor="end" textLength="35.8" lengthAdjust="spacingAndGlyphs" >-0.010</text>
<line x1="998" y1="478.5" x2="1298" y2="478.5" stroke="#dcdcdc" stroke-width="1" />
<text x="996" y="482.5" font-size="11.5" fill="#3c3c3c" text-anchor="end" textLength="35.8" lengthAdjust="spacingAndGlyphs" >-0.020</text>
<line x1="998" y1="508.5" x2="1298" y2="508.5" stroke="#dcdcdc" stroke-width="1" />
<text x="996" y="512.5" font-size="11.5" fill="#3c3c3c" text-anchor="end" textLength="35.8" lengthAdjust="spacingAndGlyphs" >-0.030</text>
<text x="1150" y="545" font-size="12" fill="#333" text-anchor="middle" font-weight="bold" textLength="24" lengthAdjust="spacingAndGlyphs" >PC1</text>
<text transform="translate(952.5 418) rotate(-90)" font-size="12" font-weight="bold" fill="#333" text-anchor="middle" textLength="24" lengthAdjust="spacingAndGlyphs">PC2</text>
<circle cx="1101.6" cy="348.3" r="3.4" fill="#F01010" />
<circle cx="1085.2" cy="365" r="3.4" fill="#F01010" />
<circle cx="1068.4" cy="381.5" r="3.4" fill="#F01010" />
<circle cx="1069.7" cy="383.7" r="3.4" fill="#F01010" />
<circle cx="1240.2" cy="403.9" r="3.4" fill="#0A8080" />
<circle cx="1249.7" cy="393.2" r="3.4" fill="#0A8080" />
<circle cx="1269" cy="396.3" r="3.4" fill="#0A8080" />
<circle cx="1180.2" cy="420.3" r="3.4" fill="#0A8080" />
<circle cx="1158.1" cy="431.7" r="3.4" fill="#0A8080" />
<circle cx="1147.7" cy="430.1" r="3.4" fill="#0A8080" />
<circle cx="1133.5" cy="435.2" r="3.4" fill="#0A8080" />
<circle cx="1178.6" cy="405.8" r="3.4" fill="#087808" />
<circle cx="1161.6" cy="425" r="3.4" fill="#087808" />
<circle cx="1184.6" cy="417.8" r="3.4" fill="#087808" />
<circle cx="1186.5" cy="422.5" r="3.4" fill="#087808" />
<circle cx="1198.2" cy="416.2" r="3.4" fill="#087808" />
<circle cx="1199.8" cy="415.3" r="3.4" fill="#087808" />
<circle cx="1114.5" cy="431.4" r="3.4" fill="#087808" />
<circle cx="1112" cy="434.2" r="3.4" fill="#80F010" />
<circle cx="1113.6" cy="436.4" r="3.4" fill="#80F010" />
<circle cx="1126.2" cy="437.7" r="3.4" fill="#80F010" />
<circle cx="1123" cy="439" r="3.4" fill="#80F010" />
<circle cx="1120.5" cy="440.8" r="3.4" fill="#80F010" />
<circle cx="1119.3" cy="443.4" r="3.4" fill="#80F010" />
<circle cx="1118.3" cy="446.2" r="3.4" fill="#80F010" />
<circle cx="1117.7" cy="447.8" r="3.4" fill="#80F010" />
<circle cx="1593.6" cy="387.1" r="3.4" fill="#F0F010" />
<circle cx="1604.5" cy="386.0" r="3.4" fill="#F0F010" />
<circle cx="1609.4" cy="390.5" r="3.4" fill="#F0F010" />
<circle cx="1598.1" cy="393.2" r="3.4" fill="#F0F010" />
<circle cx="1630.8" cy="387.1" r="3.4" fill="#F0F010" />
<circle cx="1626.3" cy="389.8" r="3.4" fill="#F0F010" />
<circle cx="1615.0" cy="394.3" r="3.4" fill="#F0F010" />
<circle cx="1637.6" cy="391.7" r="3.4" fill="#F0F010" />
<circle cx="1601.9" cy="392.4" r="3.4" fill="#F0F010" />
<circle cx="1621.4" cy="394.3" r="3.4" fill="#F0F010" />
<circle cx="1655.6" cy="394.7" r="3.4" fill="#C8F000" />
<circle cx="1684.2" cy="392.4" r="3.4" fill="#C8F000" />
<circle cx="1724.8" cy="393.2" r="3.4" fill="#C8F000" />
<circle cx="1643.2" cy="398.8" r="3.4" fill="#C8F000" />
<circle cx="1621.4" cy="397.3" r="3.4" fill="#C8F000" />
<circle cx="1630.1" cy="397.3" r="3.4" fill="#C8F000" />
<circle cx="1613.2" cy="398.8" r="3.4" fill="#C8F000" />
<circle cx="1605.6" cy="398.0" r="3.4" fill="#C8F000" />
<circle cx="1635.7" cy="401.8" r="3.4" fill="#C8F000" />
<circle cx="1602.6" cy="404.8" r="3.4" fill="#78E010" />
<circle cx="1607.5" cy="402.6" r="3.4" fill="#78E010" />
<circle cx="1612.4" cy="405.6" r="3.4" fill="#78E010" />
<circle cx="1616.9" cy="403.3" r="3.4" fill="#78E010" />
<circle cx="1621.4" cy="405.6" r="3.4" fill="#78E010" />
<circle cx="1626.3" cy="403.7" r="3.4" fill="#78E010" />
<circle cx="1628.9" cy="405.9" r="3.4" fill="#78E010" />
<circle cx="1635.7" cy="404.1" r="3.4" fill="#78E010" />
<circle cx="1638.7" cy="406.3" r="3.4" fill="#78E010" />
<circle cx="1615.0" cy="401.1" r="3.4" fill="#78E010" />
<circle cx="1623.7" cy="400.3" r="3.4" fill="#78E010" />
<circle cx="1643.6" cy="382.3" r="3.4" fill="#FFB000" />
<circle cx="1658.3" cy="359.7" r="3.4" fill="#F01010" />
<circle cx="1608.6" cy="435.6" r="3.4" fill="#00F0A0" />
<circle cx="1612.0" cy="437.9" r="3.4" fill="#00F0A0" />
<circle cx="1615.0" cy="436.0" r="3.4" fill="#00F0A0" />
<circle cx="1619.9" cy="435.6" r="3.4" fill="#00F0A0" />
<circle cx="1627.4" cy="436.8" r="3.4" fill="#00F0A0" />
<circle cx="1628.2" cy="438.6" r="3.4" fill="#00F0A0" />
<circle cx="1616.9" cy="444.3" r="3.4" fill="#10F0F0" />
<circle cx="1638.7" cy="442.0" r="3.4" fill="#10F0F0" />
<circle cx="1645.1" cy="444.3" r="3.4" fill="#10F0F0" />
<circle cx="1660.2" cy="444.7" r="3.4" fill="#10F0F0" />
<circle cx="1654.5" cy="468.7" r="3.4" fill="#0020F0" />
<line x1="40.5" y1="66" x2="40.5" y2="1197" stroke="#b4b4b4" stroke-width="1" />
<line x1="1859.5" y1="66" x2="1859.5" y2="1197" stroke="#c4c4c4" stroke-width="1" />
</svg>
</body></html>
